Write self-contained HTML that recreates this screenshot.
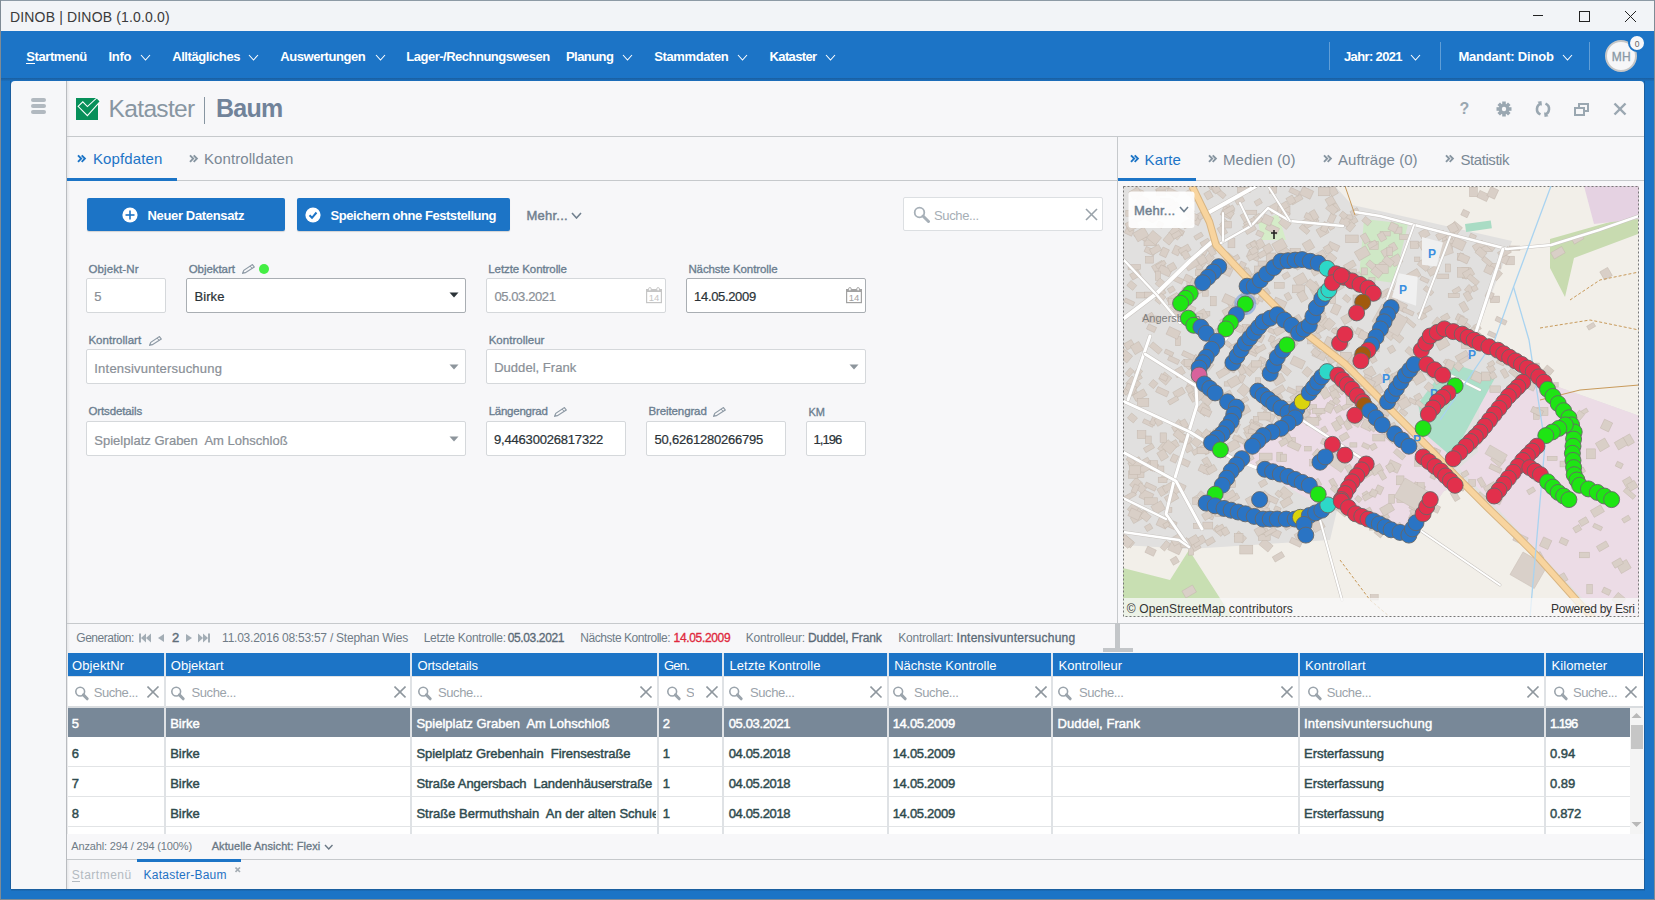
<!DOCTYPE html><html><head><meta charset="utf-8"><style>html,body{margin:0;padding:0;width:1655px;height:900px;overflow:hidden;position:relative;font-family:"Liberation Sans",sans-serif;}.t{position:absolute;white-space:pre;line-height:1;}</style></head><body><div style="position:absolute;left:0px;top:0px;width:1655px;height:900px;background:#1c74c6;"></div><div style="position:absolute;left:0px;top:0px;width:1655px;height:31px;background:#f2f4f7;"></div><div style="position:absolute;left:0px;top:0px;width:1655px;height:1px;background:#8d9aa5;"></div><div style="position:absolute;left:0px;top:0px;width:1px;height:900px;background:#7f8b95;"></div><div style="position:absolute;left:1654px;top:0px;width:1px;height:900px;background:#7f8b95;"></div><svg style="position:absolute;left:1520px;top:5px" width="130" height="22"><g stroke="#222" stroke-width="1" fill="none"><line x1="13" y1="10.5" x2="23" y2="10.5"/><rect x="59.5" y="6.5" width="10" height="10"/><line x1="105" y1="6" x2="116" y2="17"/><line x1="116" y1="6" x2="105" y2="17"/></g></svg><div style="position:absolute;left:1px;top:78px;width:1653px;height:3px;background:linear-gradient(#1a5f9f,#1c6fbe);"></div><div style="position:absolute;left:26px;top:63px;width:9px;height:1px;background:#ffffff;"></div><svg style="position:absolute;left:140px;top:54px" width="11" height="7"><polyline points="1,1 5.5,6 10,1" fill="none" stroke="#fff" stroke-width="1.1"/></svg><svg style="position:absolute;left:248px;top:54px" width="11" height="7"><polyline points="1,1 5.5,6 10,1" fill="none" stroke="#fff" stroke-width="1.1"/></svg><svg style="position:absolute;left:374.5px;top:54px" width="11" height="7"><polyline points="1,1 5.5,6 10,1" fill="none" stroke="#fff" stroke-width="1.1"/></svg><svg style="position:absolute;left:622px;top:54px" width="11" height="7"><polyline points="1,1 5.5,6 10,1" fill="none" stroke="#fff" stroke-width="1.1"/></svg><svg style="position:absolute;left:737px;top:54px" width="11" height="7"><polyline points="1,1 5.5,6 10,1" fill="none" stroke="#fff" stroke-width="1.1"/></svg><svg style="position:absolute;left:825px;top:54px" width="11" height="7"><polyline points="1,1 5.5,6 10,1" fill="none" stroke="#fff" stroke-width="1.1"/></svg><svg style="position:absolute;left:1410px;top:54px" width="11" height="7"><polyline points="1,1 5.5,6 10,1" fill="none" stroke="#fff" stroke-width="1.1"/></svg><svg style="position:absolute;left:1562px;top:54px" width="11" height="7"><polyline points="1,1 5.5,6 10,1" fill="none" stroke="#fff" stroke-width="1.1"/></svg><div style="position:absolute;left:1329px;top:42px;width:1px;height:28px;background:rgba(255,255,255,0.3);"></div><div style="position:absolute;left:1440px;top:42px;width:1px;height:28px;background:rgba(255,255,255,0.3);"></div><div style="position:absolute;left:1589px;top:42px;width:1px;height:28px;background:rgba(255,255,255,0.3);"></div><div style="position:absolute;left:1605px;top:40px;width:28px;height:28px;border-radius:50%;background:#f6f6f8;border:2px solid #c6c6c6"></div><div style="position:absolute;left:1628px;top:34px;width:14px;height:14px;border-radius:50%;background:#f7f7f9;border:2px solid #1c74c6"></div><div style="position:absolute;left:11px;top:81px;width:55px;height:808px;background:#f6f7f9;border-radius:4px 0 0 0;"></div><div style="position:absolute;left:66px;top:81px;width:1px;height:808px;background:#b9bcc0;"></div><div style="position:absolute;left:10px;top:81px;width:1px;height:808px;background:#1b5e9e;"></div><div style="position:absolute;left:11px;top:889px;width:1634px;height:2px;background:linear-gradient(#1b5a96,#1c70bf);"></div><div style="position:absolute;left:0px;top:899px;width:1655px;height:1px;background:#7f8b95;"></div><div style="position:absolute;left:1644px;top:81px;width:1px;height:809px;background:#1b5e9e;"></div><div style="position:absolute;left:67px;top:81px;width:1577px;height:808px;background:#f7f7f9;border-radius:0 4px 0 0;"></div><div style="position:absolute;left:67px;top:81px;width:3px;height:808px;background:linear-gradient(90deg,#e6e7e9,rgba(247,247,249,0));"></div><div style="position:absolute;left:31px;top:98px;width:15px;height:3.5px;background:#b1b9c0;border-radius:2px;"></div><div style="position:absolute;left:31px;top:104px;width:15px;height:3.5px;background:#b1b9c0;border-radius:2px;"></div><div style="position:absolute;left:31px;top:110px;width:15px;height:3.5px;background:#b1b9c0;border-radius:2px;"></div><svg style="position:absolute;left:76px;top:97px" width="27" height="25"><rect x="0" y="1" width="22" height="22" fill="#07905a"/><polygon points="2.1,9.3 6.8,4.8 11.4,9.6 20.8,0.9 24.3,4.3 11.4,18.6" fill="#07905a" stroke="#fff" stroke-width="1.1" stroke-linejoin="miter"/></svg><div style="position:absolute;left:204px;top:97px;width:1.3px;height:27px;background:#8795a1;"></div><svg style="position:absolute;left:1496px;top:101px" width="16" height="16" viewBox="-8 -8 16 16"><g fill="#9aa7b1"><rect x="-1.8" y="-7.5" width="3.6" height="4" transform="rotate(0)"/><rect x="-1.8" y="-7.5" width="3.6" height="4" transform="rotate(45)"/><rect x="-1.8" y="-7.5" width="3.6" height="4" transform="rotate(90)"/><rect x="-1.8" y="-7.5" width="3.6" height="4" transform="rotate(135)"/><rect x="-1.8" y="-7.5" width="3.6" height="4" transform="rotate(180)"/><rect x="-1.8" y="-7.5" width="3.6" height="4" transform="rotate(225)"/><rect x="-1.8" y="-7.5" width="3.6" height="4" transform="rotate(270)"/><rect x="-1.8" y="-7.5" width="3.6" height="4" transform="rotate(315)"/><circle r="5.3"/></g><circle r="2.2" fill="#f7f7f9"/></svg><svg style="position:absolute;left:1535px;top:101px" width="16" height="16" viewBox="0 0 16 16"><g fill="none" stroke="#9aa7b1" stroke-width="2.6"><path d="M6.5 2.4 A5.8 5.8 0 0 0 5.5 13.4"/><path d="M9.5 13.6 A5.8 5.8 0 0 0 10.5 2.6"/></g><g fill="#9aa7b1"><polygon points="9.5,10.8 9.5,16 13.5,15.2"/><polygon points="6.5,5.2 6.5,0 2.5,0.8"/></g></svg><svg style="position:absolute;left:1574px;top:102px" width="16" height="14"><g fill="none" stroke="#9aa7b1" stroke-width="2"><rect x="1" y="6" width="9" height="7"/><path d="M5 6 V2 H14 V9 H10"/></g></svg><svg style="position:absolute;left:1613px;top:102px" width="14" height="14"><g stroke="#9aa7b1" stroke-width="2.4"><line x1="1.5" y1="1.5" x2="12.5" y2="12.5"/><line x1="12.5" y1="1.5" x2="1.5" y2="12.5"/></g></svg><div style="position:absolute;left:67px;top:136px;width:1577px;height:1px;background:#c6c9cc;"></div><svg style="position:absolute;left:77.4px;top:153.8px" width="10" height="10"><g fill="none" stroke="#1c74c6" stroke-width="1.9"><polyline points="1,1.3 4.2,4.6 1,7.9"/><polyline points="4.7,1.3 7.9,4.6 4.7,7.9"/></g></svg><svg style="position:absolute;left:189.0px;top:153.8px" width="10" height="10"><g fill="none" stroke="#8795a1" stroke-width="1.9"><polyline points="1,1.3 4.2,4.6 1,7.9"/><polyline points="4.7,1.3 7.9,4.6 4.7,7.9"/></g></svg><div style="position:absolute;left:67px;top:180px;width:1050px;height:1px;background:#c6c9cc;"></div><div style="position:absolute;left:67px;top:178px;width:110px;height:3px;background:#1c74c6;"></div><div style="position:absolute;left:1117px;top:137px;width:1px;height:486px;background:#c6c9cc;"></div><svg style="position:absolute;left:1130.0px;top:154.4px" width="10" height="10"><g fill="none" stroke="#1c74c6" stroke-width="1.9"><polyline points="1,1.3 4.2,4.6 1,7.9"/><polyline points="4.7,1.3 7.9,4.6 4.7,7.9"/></g></svg><svg style="position:absolute;left:1208.0px;top:154.4px" width="10" height="10"><g fill="none" stroke="#8795a1" stroke-width="1.9"><polyline points="1,1.3 4.2,4.6 1,7.9"/><polyline points="4.7,1.3 7.9,4.6 4.7,7.9"/></g></svg><svg style="position:absolute;left:1323.0px;top:154.4px" width="10" height="10"><g fill="none" stroke="#8795a1" stroke-width="1.9"><polyline points="1,1.3 4.2,4.6 1,7.9"/><polyline points="4.7,1.3 7.9,4.6 4.7,7.9"/></g></svg><svg style="position:absolute;left:1445.0px;top:154.4px" width="10" height="10"><g fill="none" stroke="#8795a1" stroke-width="1.9"><polyline points="1,1.3 4.2,4.6 1,7.9"/><polyline points="4.7,1.3 7.9,4.6 4.7,7.9"/></g></svg><div style="position:absolute;left:1118px;top:180px;width:526px;height:1px;background:#c6c9cc;"></div><div style="position:absolute;left:1118px;top:178px;width:78px;height:3px;background:#1c74c6;"></div><div style="position:absolute;left:87px;top:198px;width:198px;height:33px;background:#1c74c6;border-radius:2px;box-shadow:0 1px 1px rgba(0,0,0,0.15);"></div><div style="position:absolute;left:297px;top:198px;width:213px;height:33px;background:#1c74c6;border-radius:2px;box-shadow:0 1px 1px rgba(0,0,0,0.15);"></div><svg style="position:absolute;left:122px;top:207px" width="16" height="16"><circle cx="8" cy="8" r="7.6" fill="#fff"/><g stroke="#1c74c6" stroke-width="1.6"><line x1="8" y1="3.5" x2="8" y2="12.5"/><line x1="3.5" y1="8" x2="12.5" y2="8"/></g></svg><svg style="position:absolute;left:305px;top:207px" width="16" height="16"><circle cx="8" cy="8" r="7.6" fill="#fff"/><polyline points="4.5,8.2 7,10.8 11.5,5.5" fill="none" stroke="#1c74c6" stroke-width="2"/></svg><svg style="position:absolute;left:571px;top:211.5px" width="11" height="7"><polyline points="1,1 5.5,6 10,1" fill="none" stroke="#71808f" stroke-width="1.6"/></svg><div style="position:absolute;left:903px;top:197px;width:200px;height:34px;background:#fff;box-sizing:border-box;border:1px solid #dcdfe2;border-radius:2px;"></div><svg style="position:absolute;left:913px;top:206px" width="18" height="17"><circle cx="6.5" cy="6.5" r="4.8" fill="none" stroke="#a7b0b8" stroke-width="1.8"/><line x1="10" y1="10" x2="15.5" y2="15.5" stroke="#a7b0b8" stroke-width="3" stroke-linecap="round"/></svg><svg style="position:absolute;left:1085px;top:208px" width="13" height="13"><g stroke="#9aa3ab" stroke-width="1.6"><line x1="1" y1="1" x2="12" y2="12"/><line x1="12" y1="1" x2="1" y2="12"/></g></svg><svg style="position:absolute;left:241.5px;top:263.5px" width="13" height="10"><polygon points="0.6,9.2 1.8,6.3 10.4,0.6 12.2,3 3.4,8.7" fill="none" stroke="#8f9ba6" stroke-width="1.2"/><line x1="8.2" y1="2" x2="10" y2="4.4" stroke="#8f9ba6" stroke-width="1"/></svg><div style="position:absolute;left:259px;top:264px;width:10px;height:10px;border-radius:50%;background:#44ee44"></div><div style="position:absolute;left:86px;top:278px;width:80px;height:35px;background:#fff;box-sizing:border-box;border:1px solid #d5d8db;border-radius:2px;"></div><div style="position:absolute;left:186px;top:278px;width:280px;height:35px;background:#fff;box-sizing:border-box;border:1px solid #a9aeb3;border-radius:2px;"></div><svg style="position:absolute;left:449px;top:292px" width="10" height="6"><polygon points="0.5,0.5 9.5,0.5 5,5.5" fill="#2b3338"/></svg><div style="position:absolute;left:486px;top:278px;width:180px;height:35px;background:#fff;box-sizing:border-box;border:1px solid #d5d8db;border-radius:2px;"></div><div style="position:absolute;left:686px;top:278px;width:180px;height:35px;background:#fff;box-sizing:border-box;border:1px solid #a9aeb3;border-radius:2px;"></div><svg style="position:absolute;left:646px;top:287px" width="17" height="17"><g fill="none" stroke="#c6c6c6" stroke-width="1.2"><rect x="0.6" y="2.6" width="14.8" height="13"/></g><rect x="0" y="2" width="16" height="3" fill="#c6c6c6"/><rect x="2.6" y="0.6" width="2.6" height="3.4" rx="1.2" fill="#fff" stroke="#c6c6c6" stroke-width="1"/><rect x="10.8" y="0.6" width="2.6" height="3.4" rx="1.2" fill="#fff" stroke="#c6c6c6" stroke-width="1"/><text x="8" y="13.8" font-family="Liberation Sans" font-size="9.5" text-anchor="middle" fill="#c6c6c6">14</text></svg><svg style="position:absolute;left:846px;top:287px" width="17" height="17"><g fill="none" stroke="#a2a2a2" stroke-width="1.2"><rect x="0.6" y="2.6" width="14.8" height="13"/></g><rect x="0" y="2" width="16" height="3" fill="#a2a2a2"/><rect x="2.6" y="0.6" width="2.6" height="3.4" rx="1.2" fill="#fff" stroke="#a2a2a2" stroke-width="1"/><rect x="10.8" y="0.6" width="2.6" height="3.4" rx="1.2" fill="#fff" stroke="#a2a2a2" stroke-width="1"/><text x="8" y="13.8" font-family="Liberation Sans" font-size="9.5" text-anchor="middle" fill="#a2a2a2">14</text></svg><svg style="position:absolute;left:148.5px;top:335.5px" width="13" height="10"><polygon points="0.6,9.2 1.8,6.3 10.4,0.6 12.2,3 3.4,8.7" fill="none" stroke="#8f9ba6" stroke-width="1.2"/><line x1="8.2" y1="2" x2="10" y2="4.4" stroke="#8f9ba6" stroke-width="1"/></svg><div style="position:absolute;left:86px;top:349px;width:380px;height:35px;background:#fff;box-sizing:border-box;border:1px solid #d5d8db;border-radius:2px;"></div><svg style="position:absolute;left:449px;top:364px" width="10" height="6"><polygon points="0.5,0.5 9.5,0.5 5,5.5" fill="#8d959c"/></svg><div style="position:absolute;left:486px;top:349px;width:380px;height:35px;background:#fff;box-sizing:border-box;border:1px solid #d5d8db;border-radius:2px;"></div><svg style="position:absolute;left:849px;top:364px" width="10" height="6"><polygon points="0.5,0.5 9.5,0.5 5,5.5" fill="#8d959c"/></svg><svg style="position:absolute;left:553.5px;top:406.5px" width="13" height="10"><polygon points="0.6,9.2 1.8,6.3 10.4,0.6 12.2,3 3.4,8.7" fill="none" stroke="#8f9ba6" stroke-width="1.2"/><line x1="8.2" y1="2" x2="10" y2="4.4" stroke="#8f9ba6" stroke-width="1"/></svg><svg style="position:absolute;left:712.5px;top:406.5px" width="13" height="10"><polygon points="0.6,9.2 1.8,6.3 10.4,0.6 12.2,3 3.4,8.7" fill="none" stroke="#8f9ba6" stroke-width="1.2"/><line x1="8.2" y1="2" x2="10" y2="4.4" stroke="#8f9ba6" stroke-width="1"/></svg><div style="position:absolute;left:86px;top:421px;width:380px;height:35px;background:#fff;box-sizing:border-box;border:1px solid #d5d8db;border-radius:2px;"></div><svg style="position:absolute;left:449px;top:436px" width="10" height="6"><polygon points="0.5,0.5 9.5,0.5 5,5.5" fill="#8d959c"/></svg><div style="position:absolute;left:486px;top:421px;width:140px;height:35px;background:#fff;box-sizing:border-box;border:1px solid #d5d8db;border-radius:2px;"></div><div style="position:absolute;left:646px;top:421px;width:140px;height:35px;background:#fff;box-sizing:border-box;border:1px solid #d5d8db;border-radius:2px;"></div><div style="position:absolute;left:806px;top:421px;width:60px;height:35px;background:#fff;box-sizing:border-box;border:1px solid #d5d8db;border-radius:2px;"></div><div style="position:absolute;left:67px;top:623px;width:1577px;height:1px;background:#c6c9cc;"></div><svg style="position:absolute;left:138px;top:632px" width="75" height="12"><g fill="#a3adb5"><rect x="1" y="1.5" width="2" height="9"/><polygon points="8,1.5 3,6 8,10.5"/><polygon points="13,1.5 8,6 13,10.5"/><polygon points="26,2 20,6 26,10"/><polygon points="48,2 54,6 48,10"/><polygon points="60,1.5 65,6 60,10.5"/><polygon points="65,1.5 70,6 65,10.5"/><rect x="70" y="1.5" width="2" height="9"/></g></svg><div style="position:absolute;left:1115px;top:623px;width:5px;height:27px;background:#c3c6c9;"></div><div style="position:absolute;left:1103px;top:648px;width:30px;height:4px;background:#c3c6c9;"></div><div style="position:absolute;left:68px;top:653px;width:1575px;height:23px;background:#1c74c6;"></div><div style="position:absolute;left:68px;top:676px;width:1575px;height:31px;background:#fff;"></div><div style="position:absolute;left:68px;top:676px;width:1575px;height:1px;background:#dfe2e5;"></div><div style="position:absolute;left:68px;top:706px;width:1575px;height:2px;background:#d9dcdf;"></div><div style="position:absolute;left:68px;top:708px;width:1562px;height:126px;background:#fff;"></div><div style="position:absolute;left:68px;top:708px;width:1562px;height:29px;background:#788898;"></div><div style="position:absolute;left:68px;top:766px;width:1562px;height:1px;background:#e2e4e6;"></div><div style="position:absolute;left:68px;top:796px;width:1562px;height:1px;background:#e2e4e6;"></div><div style="position:absolute;left:68px;top:826px;width:1562px;height:1px;background:#e2e4e6;"></div><div style="position:absolute;left:163.5px;top:653px;width:2.5px;height:23px;background:#dce6f0;"></div><div style="position:absolute;left:163.5px;top:676px;width:2.5px;height:31px;background:#dfe2e5;"></div><div style="position:absolute;left:164px;top:708px;width:1.5px;height:126px;background:#dfe2e5;"></div><div style="position:absolute;left:409.5px;top:653px;width:2.5px;height:23px;background:#dce6f0;"></div><div style="position:absolute;left:409.5px;top:676px;width:2.5px;height:31px;background:#dfe2e5;"></div><div style="position:absolute;left:410px;top:708px;width:1.5px;height:126px;background:#dfe2e5;"></div><div style="position:absolute;left:656.5px;top:653px;width:2.5px;height:23px;background:#dce6f0;"></div><div style="position:absolute;left:656.5px;top:676px;width:2.5px;height:31px;background:#dfe2e5;"></div><div style="position:absolute;left:657px;top:708px;width:1.5px;height:126px;background:#dfe2e5;"></div><div style="position:absolute;left:721.5px;top:653px;width:2.5px;height:23px;background:#dce6f0;"></div><div style="position:absolute;left:721.5px;top:676px;width:2.5px;height:31px;background:#dfe2e5;"></div><div style="position:absolute;left:722px;top:708px;width:1.5px;height:126px;background:#dfe2e5;"></div><div style="position:absolute;left:886.5px;top:653px;width:2.5px;height:23px;background:#dce6f0;"></div><div style="position:absolute;left:886.5px;top:676px;width:2.5px;height:31px;background:#dfe2e5;"></div><div style="position:absolute;left:887px;top:708px;width:1.5px;height:126px;background:#dfe2e5;"></div><div style="position:absolute;left:1050.5px;top:653px;width:2.5px;height:23px;background:#dce6f0;"></div><div style="position:absolute;left:1050.5px;top:676px;width:2.5px;height:31px;background:#dfe2e5;"></div><div style="position:absolute;left:1051px;top:708px;width:1.5px;height:126px;background:#dfe2e5;"></div><div style="position:absolute;left:1297.5px;top:653px;width:2.5px;height:23px;background:#dce6f0;"></div><div style="position:absolute;left:1297.5px;top:676px;width:2.5px;height:31px;background:#dfe2e5;"></div><div style="position:absolute;left:1298px;top:708px;width:1.5px;height:126px;background:#dfe2e5;"></div><div style="position:absolute;left:1543.5px;top:653px;width:2.5px;height:23px;background:#dce6f0;"></div><div style="position:absolute;left:1543.5px;top:676px;width:2.5px;height:31px;background:#dfe2e5;"></div><div style="position:absolute;left:1544px;top:708px;width:1.5px;height:126px;background:#dfe2e5;"></div><div style="position:absolute;left:1630px;top:708px;width:13px;height:126px;background:#f4f4f4;"></div><div style="position:absolute;left:1631px;top:725px;width:12px;height:24px;background:#c6c6c6;"></div><svg style="position:absolute;left:1630px;top:711px" width="13" height="10"><polygon points="1.5,7 6.5,2 11.5,7" fill="#b8b8b8"/></svg><svg style="position:absolute;left:1630px;top:820px" width="13" height="10"><polygon points="1.5,2 6.5,7 11.5,2" fill="#b8b8b8"/></svg><svg style="position:absolute;left:73.5px;top:686px" width="16" height="15"><circle cx="6.2" cy="5.6" r="4.4" fill="none" stroke="#9ba4ac" stroke-width="1.6"/><line x1="9.4" y1="8.9" x2="13.2" y2="12.8" stroke="#9ba4ac" stroke-width="3" stroke-linecap="round"/></svg><svg style="position:absolute;left:147px;top:686px" width="12.5" height="12.5"><g stroke="#8f979e" stroke-width="1.6"><line x1="0.5" y1="0.5" x2="11.5" y2="11.5"/><line x1="11.5" y1="0.5" x2="0.5" y2="11.5"/></g></svg><svg style="position:absolute;left:170px;top:686px" width="16" height="15"><circle cx="6.2" cy="5.6" r="4.4" fill="none" stroke="#9ba4ac" stroke-width="1.6"/><line x1="9.4" y1="8.9" x2="13.2" y2="12.8" stroke="#9ba4ac" stroke-width="3" stroke-linecap="round"/></svg><svg style="position:absolute;left:393.5px;top:686px" width="12.5" height="12.5"><g stroke="#8f979e" stroke-width="1.6"><line x1="0.5" y1="0.5" x2="11.5" y2="11.5"/><line x1="11.5" y1="0.5" x2="0.5" y2="11.5"/></g></svg><svg style="position:absolute;left:417px;top:686px" width="16" height="15"><circle cx="6.2" cy="5.6" r="4.4" fill="none" stroke="#9ba4ac" stroke-width="1.6"/><line x1="9.4" y1="8.9" x2="13.2" y2="12.8" stroke="#9ba4ac" stroke-width="3" stroke-linecap="round"/></svg><svg style="position:absolute;left:640px;top:686px" width="12.5" height="12.5"><g stroke="#8f979e" stroke-width="1.6"><line x1="0.5" y1="0.5" x2="11.5" y2="11.5"/><line x1="11.5" y1="0.5" x2="0.5" y2="11.5"/></g></svg><svg style="position:absolute;left:665.5px;top:686px" width="16" height="15"><circle cx="6.2" cy="5.6" r="4.4" fill="none" stroke="#9ba4ac" stroke-width="1.6"/><line x1="9.4" y1="8.9" x2="13.2" y2="12.8" stroke="#9ba4ac" stroke-width="3" stroke-linecap="round"/></svg><svg style="position:absolute;left:706px;top:686px" width="12.5" height="12.5"><g stroke="#8f979e" stroke-width="1.6"><line x1="0.5" y1="0.5" x2="11.5" y2="11.5"/><line x1="11.5" y1="0.5" x2="0.5" y2="11.5"/></g></svg><svg style="position:absolute;left:728px;top:686px" width="16" height="15"><circle cx="6.2" cy="5.6" r="4.4" fill="none" stroke="#9ba4ac" stroke-width="1.6"/><line x1="9.4" y1="8.9" x2="13.2" y2="12.8" stroke="#9ba4ac" stroke-width="3" stroke-linecap="round"/></svg><svg style="position:absolute;left:870px;top:686px" width="12.5" height="12.5"><g stroke="#8f979e" stroke-width="1.6"><line x1="0.5" y1="0.5" x2="11.5" y2="11.5"/><line x1="11.5" y1="0.5" x2="0.5" y2="11.5"/></g></svg><svg style="position:absolute;left:892px;top:686px" width="16" height="15"><circle cx="6.2" cy="5.6" r="4.4" fill="none" stroke="#9ba4ac" stroke-width="1.6"/><line x1="9.4" y1="8.9" x2="13.2" y2="12.8" stroke="#9ba4ac" stroke-width="3" stroke-linecap="round"/></svg><svg style="position:absolute;left:1034.5px;top:686px" width="12.5" height="12.5"><g stroke="#8f979e" stroke-width="1.6"><line x1="0.5" y1="0.5" x2="11.5" y2="11.5"/><line x1="11.5" y1="0.5" x2="0.5" y2="11.5"/></g></svg><svg style="position:absolute;left:1057px;top:686px" width="16" height="15"><circle cx="6.2" cy="5.6" r="4.4" fill="none" stroke="#9ba4ac" stroke-width="1.6"/><line x1="9.4" y1="8.9" x2="13.2" y2="12.8" stroke="#9ba4ac" stroke-width="3" stroke-linecap="round"/></svg><svg style="position:absolute;left:1281px;top:686px" width="12.5" height="12.5"><g stroke="#8f979e" stroke-width="1.6"><line x1="0.5" y1="0.5" x2="11.5" y2="11.5"/><line x1="11.5" y1="0.5" x2="0.5" y2="11.5"/></g></svg><svg style="position:absolute;left:1306.5px;top:686px" width="16" height="15"><circle cx="6.2" cy="5.6" r="4.4" fill="none" stroke="#9ba4ac" stroke-width="1.6"/><line x1="9.4" y1="8.9" x2="13.2" y2="12.8" stroke="#9ba4ac" stroke-width="3" stroke-linecap="round"/></svg><svg style="position:absolute;left:1527.4px;top:686px" width="12.5" height="12.5"><g stroke="#8f979e" stroke-width="1.6"><line x1="0.5" y1="0.5" x2="11.5" y2="11.5"/><line x1="11.5" y1="0.5" x2="0.5" y2="11.5"/></g></svg><svg style="position:absolute;left:1553px;top:686px" width="16" height="15"><circle cx="6.2" cy="5.6" r="4.4" fill="none" stroke="#9ba4ac" stroke-width="1.6"/><line x1="9.4" y1="8.9" x2="13.2" y2="12.8" stroke="#9ba4ac" stroke-width="3" stroke-linecap="round"/></svg><svg style="position:absolute;left:1625.4px;top:686px" width="12.5" height="12.5"><g stroke="#8f979e" stroke-width="1.6"><line x1="0.5" y1="0.5" x2="11.5" y2="11.5"/><line x1="11.5" y1="0.5" x2="0.5" y2="11.5"/></g></svg><div style="position:absolute;left:67px;top:834px;width:1577px;height:25px;background:#f7f7f9;"></div><svg style="position:absolute;left:323.5px;top:844px" width="9.5" height="6"><polyline points="1,1 4.75,5 8.5,1" fill="none" stroke="#6a7885" stroke-width="1.4"/></svg><div style="position:absolute;left:67px;top:859px;width:1577px;height:1px;background:#c6c9cc;"></div><div style="position:absolute;left:137px;top:859px;width:104px;height:3px;background:#1c74c6;"></div><div style="position:absolute;left:72px;top:881px;width:8px;height:1px;background:#b3bac1;"></div><svg style="position:absolute;left:234.5px;top:867px" width="6" height="6"><g stroke="#a5adb4" stroke-width="1.6"><line x1="0.5" y1="0.5" x2="5" y2="5"/><line x1="5" y1="0.5" x2="0.5" y2="5"/></g></svg><svg style="position:absolute;left:1123px;top:186px" width="516" height="431" viewBox="1123 186 516 431"><rect x="1123" y="186" width="516" height="431" fill="#e1e0df"/><polygon points="1335.0,186.0 1640.0,186.0 1640.0,416.0 1550.0,384.0 1476.0,334.0 1512.0,241.0 1380.0,211.0 1352.0,205.0" fill="#f2efe9"/><polygon points="1123.0,545.0 1189.0,549.0 1330.0,540.0 1338.0,506.0 1409.0,540.0 1444.0,491.0 1466.0,482.0 1592.0,617.0 1123.0,617.0" fill="#f2efe9"/><polygon points="1240.0,445.0 1300.0,408.0 1335.0,386.0 1380.0,420.0 1440.0,440.0 1462.0,484.0 1444.0,491.0 1409.0,540.0 1338.0,506.0 1318.0,505.0 1240.0,458.0" fill="#ecdce6"/><polygon points="1480.0,390.0 1520.0,386.0 1550.0,384.0 1640.0,416.0 1640.0,617.0 1600.0,617.0 1459.0,468.0 1478.0,452.0" fill="#ecdce6"/><polygon points="1449.0,362.0 1495.0,378.0 1452.0,457.0 1424.0,433.0 1418.0,404.0" fill="#acdfc9"/><polygon points="1364.0,219.0 1408.0,224.0 1394.0,283.0 1359.0,278.0" fill="#cfe8c6"/><polygon points="1550.0,239.0 1638.0,214.0 1638.0,234.0 1574.0,258.0 1565.0,297.0 1550.0,268.0" fill="#c8dbb0"/><polygon points="1584.0,186.0 1639.0,186.0 1639.0,219.0 1594.0,224.0" fill="#e5d2e2"/><polygon points="1123.0,568.0 1170.0,580.0 1189.0,550.0 1232.0,617.0 1123.0,617.0" fill="#c8dfb2"/><polygon points="1258.0,222.0 1278.0,214.0 1286.0,240.0 1262.0,240.0" fill="#d5ecc8"/><rect x="1465" y="224" width="26" height="8" fill="#a9dcc4" transform="rotate(-8 1465 224)"/><rect x="1290.1" y="248.5" width="10.2" height="4.4" fill="#d9cfc7" stroke="#c4b8ae" stroke-width="0.5" transform="rotate(0 1290.1 248.5)"/><rect x="1171.6" y="427.3" width="12.3" height="5.3" fill="#d9cfc7" stroke="#c4b8ae" stroke-width="0.5" transform="rotate(-30 1171.6 427.3)"/><rect x="1346.8" y="214.9" width="5.7" height="6.5" fill="#d9cfc7" stroke="#c4b8ae" stroke-width="0.5" transform="rotate(0 1346.8 214.9)"/><rect x="1186.9" y="278.4" width="10.0" height="9.7" fill="#d9cfc7" stroke="#c4b8ae" stroke-width="0.5" transform="rotate(0 1186.9 278.4)"/><rect x="1410.2" y="241.1" width="8.4" height="7.2" fill="#d9cfc7" stroke="#c4b8ae" stroke-width="0.5" transform="rotate(0 1410.2 241.1)"/><rect x="1282.2" y="523.9" width="6.4" height="7.5" fill="#d9cfc7" stroke="#c4b8ae" stroke-width="0.5" transform="rotate(-30 1282.2 523.9)"/><rect x="1315.2" y="412.8" width="5.5" height="4.4" fill="#d9cfc7" stroke="#c4b8ae" stroke-width="0.5" transform="rotate(-30 1315.2 412.8)"/><rect x="1379.1" y="406.1" width="11.2" height="6.8" fill="#d9cfc7" stroke="#c4b8ae" stroke-width="0.5" transform="rotate(40 1379.1 406.1)"/><rect x="1309.6" y="288.8" width="6.4" height="8.7" fill="#d9cfc7" stroke="#c4b8ae" stroke-width="0.5" transform="rotate(-30 1309.6 288.8)"/><rect x="1183.9" y="359.1" width="11.1" height="4.9" fill="#d9cfc7" stroke="#c4b8ae" stroke-width="0.5" transform="rotate(40 1183.9 359.1)"/><rect x="1411.0" y="512.7" width="11.5" height="6.0" fill="#d9cfc7" stroke="#c4b8ae" stroke-width="0.5" transform="rotate(25 1411.0 512.7)"/><rect x="1556.4" y="577.1" width="8.8" height="8.0" fill="#d9cfc7" stroke="#c4b8ae" stroke-width="0.5" transform="rotate(-30 1556.4 577.1)"/><rect x="1474.5" y="370.5" width="10.7" height="9.3" fill="#d9cfc7" stroke="#c4b8ae" stroke-width="0.5" transform="rotate(25 1474.5 370.5)"/><rect x="1134.6" y="377.1" width="6.3" height="4.7" fill="#d9cfc7" stroke="#c4b8ae" stroke-width="0.5" transform="rotate(-30 1134.6 377.1)"/><rect x="1235.6" y="305.0" width="10.9" height="6.4" fill="#d9cfc7" stroke="#c4b8ae" stroke-width="0.5" transform="rotate(40 1235.6 305.0)"/><rect x="1164.6" y="372.0" width="9.4" height="9.3" fill="#d9cfc7" stroke="#c4b8ae" stroke-width="0.5" transform="rotate(40 1164.6 372.0)"/><rect x="1200.9" y="259.0" width="6.9" height="5.4" fill="#d9cfc7" stroke="#c4b8ae" stroke-width="0.5" transform="rotate(40 1200.9 259.0)"/><rect x="1198.2" y="407.3" width="9.9" height="5.9" fill="#d9cfc7" stroke="#c4b8ae" stroke-width="0.5" transform="rotate(-30 1198.2 407.3)"/><rect x="1325.5" y="351.2" width="5.8" height="7.8" fill="#d9cfc7" stroke="#c4b8ae" stroke-width="0.5" transform="rotate(-30 1325.5 351.2)"/><rect x="1179.7" y="434.7" width="5.8" height="7.4" fill="#d9cfc7" stroke="#c4b8ae" stroke-width="0.5" transform="rotate(0 1179.7 434.7)"/><rect x="1175.4" y="336.5" width="5.2" height="9.2" fill="#d9cfc7" stroke="#c4b8ae" stroke-width="0.5" transform="rotate(0 1175.4 336.5)"/><rect x="1317.1" y="448.6" width="12.6" height="7.6" fill="#d9cfc7" stroke="#c4b8ae" stroke-width="0.5" transform="rotate(40 1317.1 448.6)"/><rect x="1186.4" y="537.5" width="12.9" height="6.8" fill="#d9cfc7" stroke="#c4b8ae" stroke-width="0.5" transform="rotate(40 1186.4 537.5)"/><rect x="1283.9" y="245.7" width="11.0" height="8.4" fill="#d9cfc7" stroke="#c4b8ae" stroke-width="0.5" transform="rotate(40 1283.9 245.7)"/><rect x="1550.7" y="252.8" width="12.6" height="7.2" fill="#d9cfc7" stroke="#c4b8ae" stroke-width="0.5" transform="rotate(-30 1550.7 252.8)"/><rect x="1276.8" y="452.2" width="5.7" height="9.1" fill="#d9cfc7" stroke="#c4b8ae" stroke-width="0.5" transform="rotate(0 1276.8 452.2)"/><rect x="1312.2" y="255.2" width="11.2" height="7.2" fill="#d9cfc7" stroke="#c4b8ae" stroke-width="0.5" transform="rotate(0 1312.2 255.2)"/><rect x="1293.1" y="278.3" width="11.5" height="9.9" fill="#d9cfc7" stroke="#c4b8ae" stroke-width="0.5" transform="rotate(-30 1293.1 278.3)"/><rect x="1240.0" y="400.3" width="7.8" height="4.2" fill="#d9cfc7" stroke="#c4b8ae" stroke-width="0.5" transform="rotate(-30 1240.0 400.3)"/><rect x="1530.7" y="381.5" width="6.5" height="7.6" fill="#d9cfc7" stroke="#c4b8ae" stroke-width="0.5" transform="rotate(25 1530.7 381.5)"/><rect x="1240.1" y="267.4" width="6.6" height="7.7" fill="#d9cfc7" stroke="#c4b8ae" stroke-width="0.5" transform="rotate(0 1240.1 267.4)"/><rect x="1369.7" y="259.9" width="11.3" height="6.0" fill="#d9cfc7" stroke="#c4b8ae" stroke-width="0.5" transform="rotate(40 1369.7 259.9)"/><rect x="1362.0" y="493.7" width="5.7" height="5.0" fill="#d9cfc7" stroke="#c4b8ae" stroke-width="0.5" transform="rotate(-30 1362.0 493.7)"/><rect x="1137.2" y="430.6" width="8.7" height="7.9" fill="#d9cfc7" stroke="#c4b8ae" stroke-width="0.5" transform="rotate(0 1137.2 430.6)"/><rect x="1303.8" y="413.1" width="6.0" height="4.1" fill="#d9cfc7" stroke="#c4b8ae" stroke-width="0.5" transform="rotate(-30 1303.8 413.1)"/><rect x="1572.8" y="528.0" width="7.0" height="5.8" fill="#d9cfc7" stroke="#c4b8ae" stroke-width="0.5" transform="rotate(-30 1572.8 528.0)"/><rect x="1389.6" y="528.4" width="12.0" height="4.8" fill="#d9cfc7" stroke="#c4b8ae" stroke-width="0.5" transform="rotate(-30 1389.6 528.4)"/><rect x="1217.5" y="187.6" width="11.4" height="5.0" fill="#d9cfc7" stroke="#c4b8ae" stroke-width="0.5" transform="rotate(40 1217.5 187.6)"/><rect x="1442.5" y="235.8" width="5.5" height="8.1" fill="#d9cfc7" stroke="#c4b8ae" stroke-width="0.5" transform="rotate(0 1442.5 235.8)"/><rect x="1409.6" y="510.7" width="5.8" height="7.4" fill="#d9cfc7" stroke="#c4b8ae" stroke-width="0.5" transform="rotate(-30 1409.6 510.7)"/><rect x="1221.7" y="203.5" width="5.8" height="6.7" fill="#d9cfc7" stroke="#c4b8ae" stroke-width="0.5" transform="rotate(-30 1221.7 203.5)"/><rect x="1193.8" y="236.4" width="8.5" height="4.4" fill="#d9cfc7" stroke="#c4b8ae" stroke-width="0.5" transform="rotate(-30 1193.8 236.4)"/><rect x="1344.0" y="274.1" width="7.4" height="4.7" fill="#d9cfc7" stroke="#c4b8ae" stroke-width="0.5" transform="rotate(-30 1344.0 274.1)"/><rect x="1253.6" y="242.8" width="8.7" height="8.5" fill="#d9cfc7" stroke="#c4b8ae" stroke-width="0.5" transform="rotate(-30 1253.6 242.8)"/><rect x="1328.5" y="387.7" width="12.9" height="9.0" fill="#d9cfc7" stroke="#c4b8ae" stroke-width="0.5" transform="rotate(-30 1328.5 387.7)"/><rect x="1340.4" y="333.6" width="5.7" height="6.2" fill="#d9cfc7" stroke="#c4b8ae" stroke-width="0.5" transform="rotate(25 1340.4 333.6)"/><rect x="1408.9" y="368.3" width="5.1" height="6.0" fill="#d9cfc7" stroke="#c4b8ae" stroke-width="0.5" transform="rotate(0 1408.9 368.3)"/><rect x="1166.4" y="298.6" width="12.2" height="5.1" fill="#d9cfc7" stroke="#c4b8ae" stroke-width="0.5" transform="rotate(-30 1166.4 298.6)"/><rect x="1388.6" y="390.8" width="7.6" height="5.7" fill="#d9cfc7" stroke="#c4b8ae" stroke-width="0.5" transform="rotate(-30 1388.6 390.8)"/><rect x="1342.5" y="216.0" width="12.5" height="7.8" fill="#d9cfc7" stroke="#c4b8ae" stroke-width="0.5" transform="rotate(25 1342.5 216.0)"/><rect x="1166.2" y="540.5" width="5.5" height="9.2" fill="#d9cfc7" stroke="#c4b8ae" stroke-width="0.5" transform="rotate(40 1166.2 540.5)"/><rect x="1595.4" y="443.4" width="10.7" height="9.6" fill="#d9cfc7" stroke="#c4b8ae" stroke-width="0.5" transform="rotate(-30 1595.4 443.4)"/><rect x="1258.1" y="261.0" width="12.5" height="7.8" fill="#d9cfc7" stroke="#c4b8ae" stroke-width="0.5" transform="rotate(0 1258.1 261.0)"/><rect x="1214.8" y="329.7" width="5.1" height="5.5" fill="#d9cfc7" stroke="#c4b8ae" stroke-width="0.5" transform="rotate(-30 1214.8 329.7)"/><rect x="1132.5" y="395.3" width="12.8" height="7.1" fill="#d9cfc7" stroke="#c4b8ae" stroke-width="0.5" transform="rotate(-30 1132.5 395.3)"/><rect x="1346.0" y="390.9" width="11.7" height="6.4" fill="#d9cfc7" stroke="#c4b8ae" stroke-width="0.5" transform="rotate(0 1346.0 390.9)"/><rect x="1281.8" y="275.1" width="6.8" height="5.2" fill="#d9cfc7" stroke="#c4b8ae" stroke-width="0.5" transform="rotate(-30 1281.8 275.1)"/><rect x="1331.8" y="329.9" width="5.4" height="4.8" fill="#d9cfc7" stroke="#c4b8ae" stroke-width="0.5" transform="rotate(-30 1331.8 329.9)"/><rect x="1151.6" y="461.4" width="8.0" height="7.0" fill="#d9cfc7" stroke="#c4b8ae" stroke-width="0.5" transform="rotate(25 1151.6 461.4)"/><rect x="1432.0" y="472.8" width="5.4" height="5.1" fill="#d9cfc7" stroke="#c4b8ae" stroke-width="0.5" transform="rotate(25 1432.0 472.8)"/><rect x="1353.0" y="295.0" width="12.7" height="9.8" fill="#d9cfc7" stroke="#c4b8ae" stroke-width="0.5" transform="rotate(0 1353.0 295.0)"/><rect x="1289.9" y="200.3" width="12.1" height="5.3" fill="#d9cfc7" stroke="#c4b8ae" stroke-width="0.5" transform="rotate(-30 1289.9 200.3)"/><rect x="1123.6" y="344.0" width="8.8" height="7.0" fill="#d9cfc7" stroke="#c4b8ae" stroke-width="0.5" transform="rotate(-30 1123.6 344.0)"/><rect x="1251.1" y="507.4" width="5.7" height="8.9" fill="#d9cfc7" stroke="#c4b8ae" stroke-width="0.5" transform="rotate(-30 1251.1 507.4)"/><rect x="1329.1" y="203.3" width="5.2" height="5.8" fill="#d9cfc7" stroke="#c4b8ae" stroke-width="0.5" transform="rotate(-30 1329.1 203.3)"/><rect x="1430.8" y="502.4" width="10.8" height="7.0" fill="#d9cfc7" stroke="#c4b8ae" stroke-width="0.5" transform="rotate(25 1430.8 502.4)"/><rect x="1496.7" y="452.3" width="11.7" height="9.4" fill="#d9cfc7" stroke="#c4b8ae" stroke-width="0.5" transform="rotate(40 1496.7 452.3)"/><rect x="1393.3" y="394.8" width="11.7" height="8.8" fill="#d9cfc7" stroke="#c4b8ae" stroke-width="0.5" transform="rotate(0 1393.3 394.8)"/><rect x="1454.7" y="221.2" width="10.1" height="9.8" fill="#d9cfc7" stroke="#c4b8ae" stroke-width="0.5" transform="rotate(40 1454.7 221.2)"/><rect x="1446.1" y="467.8" width="8.9" height="4.0" fill="#d9cfc7" stroke="#c4b8ae" stroke-width="0.5" transform="rotate(-30 1446.1 467.8)"/><rect x="1253.1" y="216.8" width="7.1" height="8.4" fill="#d9cfc7" stroke="#c4b8ae" stroke-width="0.5" transform="rotate(-30 1253.1 216.8)"/><rect x="1242.1" y="455.1" width="8.7" height="9.1" fill="#d9cfc7" stroke="#c4b8ae" stroke-width="0.5" transform="rotate(-30 1242.1 455.1)"/><rect x="1370.2" y="469.1" width="11.1" height="7.7" fill="#d9cfc7" stroke="#c4b8ae" stroke-width="0.5" transform="rotate(-30 1370.2 469.1)"/><rect x="1163.0" y="247.0" width="7.0" height="8.5" fill="#d9cfc7" stroke="#c4b8ae" stroke-width="0.5" transform="rotate(25 1163.0 247.0)"/><rect x="1443.5" y="241.2" width="8.9" height="6.9" fill="#d9cfc7" stroke="#c4b8ae" stroke-width="0.5" transform="rotate(-30 1443.5 241.2)"/><rect x="1389.5" y="378.4" width="8.7" height="4.7" fill="#d9cfc7" stroke="#c4b8ae" stroke-width="0.5" transform="rotate(0 1389.5 378.4)"/><rect x="1132.0" y="376.0" width="11.6" height="9.8" fill="#d9cfc7" stroke="#c4b8ae" stroke-width="0.5" transform="rotate(40 1132.0 376.0)"/><rect x="1434.3" y="447.5" width="7.2" height="4.7" fill="#d9cfc7" stroke="#c4b8ae" stroke-width="0.5" transform="rotate(25 1434.3 447.5)"/><rect x="1135.8" y="187.5" width="8.9" height="6.7" fill="#d9cfc7" stroke="#c4b8ae" stroke-width="0.5" transform="rotate(25 1135.8 187.5)"/><rect x="1498.2" y="358.3" width="8.0" height="4.7" fill="#d9cfc7" stroke="#c4b8ae" stroke-width="0.5" transform="rotate(25 1498.2 358.3)"/><rect x="1123.9" y="496.8" width="11.7" height="4.7" fill="#d9cfc7" stroke="#c4b8ae" stroke-width="0.5" transform="rotate(-30 1123.9 496.8)"/><rect x="1315.1" y="348.7" width="13.0" height="7.5" fill="#d9cfc7" stroke="#c4b8ae" stroke-width="0.5" transform="rotate(25 1315.1 348.7)"/><rect x="1267.8" y="207.4" width="10.3" height="7.8" fill="#d9cfc7" stroke="#c4b8ae" stroke-width="0.5" transform="rotate(-30 1267.8 207.4)"/><rect x="1251.7" y="296.0" width="9.1" height="5.1" fill="#d9cfc7" stroke="#c4b8ae" stroke-width="0.5" transform="rotate(25 1251.7 296.0)"/><rect x="1528.1" y="363.1" width="11.1" height="6.4" fill="#d9cfc7" stroke="#c4b8ae" stroke-width="0.5" transform="rotate(0 1528.1 363.1)"/><rect x="1406.4" y="483.9" width="5.4" height="8.4" fill="#d9cfc7" stroke="#c4b8ae" stroke-width="0.5" transform="rotate(40 1406.4 483.9)"/><rect x="1440.3" y="243.4" width="12.0" height="6.9" fill="#d9cfc7" stroke="#c4b8ae" stroke-width="0.5" transform="rotate(0 1440.3 243.4)"/><rect x="1188.7" y="381.5" width="7.7" height="5.8" fill="#d9cfc7" stroke="#c4b8ae" stroke-width="0.5" transform="rotate(25 1188.7 381.5)"/><rect x="1332.6" y="284.8" width="8.9" height="8.0" fill="#d9cfc7" stroke="#c4b8ae" stroke-width="0.5" transform="rotate(-30 1332.6 284.8)"/><rect x="1209.3" y="252.9" width="6.7" height="9.4" fill="#d9cfc7" stroke="#c4b8ae" stroke-width="0.5" transform="rotate(40 1209.3 252.9)"/><rect x="1407.0" y="373.5" width="7.7" height="8.6" fill="#d9cfc7" stroke="#c4b8ae" stroke-width="0.5" transform="rotate(40 1407.0 373.5)"/><rect x="1195.0" y="265.7" width="5.7" height="6.1" fill="#d9cfc7" stroke="#c4b8ae" stroke-width="0.5" transform="rotate(-30 1195.0 265.7)"/><rect x="1287.8" y="338.5" width="11.5" height="5.2" fill="#d9cfc7" stroke="#c4b8ae" stroke-width="0.5" transform="rotate(-30 1287.8 338.5)"/><rect x="1509.8" y="356.9" width="8.3" height="7.1" fill="#d9cfc7" stroke="#c4b8ae" stroke-width="0.5" transform="rotate(40 1509.8 356.9)"/><rect x="1262.4" y="497.4" width="9.0" height="7.4" fill="#d9cfc7" stroke="#c4b8ae" stroke-width="0.5" transform="rotate(25 1262.4 497.4)"/><rect x="1188.0" y="394.4" width="10.0" height="9.2" fill="#d9cfc7" stroke="#c4b8ae" stroke-width="0.5" transform="rotate(-30 1188.0 394.4)"/><rect x="1342.4" y="502.2" width="11.4" height="9.8" fill="#d9cfc7" stroke="#c4b8ae" stroke-width="0.5" transform="rotate(40 1342.4 502.2)"/><rect x="1123.1" y="348.1" width="12.4" height="9.0" fill="#d9cfc7" stroke="#c4b8ae" stroke-width="0.5" transform="rotate(40 1123.1 348.1)"/><rect x="1202.7" y="402.3" width="10.5" height="9.6" fill="#d9cfc7" stroke="#c4b8ae" stroke-width="0.5" transform="rotate(40 1202.7 402.3)"/><rect x="1166.9" y="507.6" width="5.0" height="4.8" fill="#d9cfc7" stroke="#c4b8ae" stroke-width="0.5" transform="rotate(0 1166.9 507.6)"/><rect x="1189.0" y="290.2" width="10.1" height="8.2" fill="#d9cfc7" stroke="#c4b8ae" stroke-width="0.5" transform="rotate(-30 1189.0 290.2)"/><rect x="1174.3" y="310.3" width="12.5" height="5.2" fill="#d9cfc7" stroke="#c4b8ae" stroke-width="0.5" transform="rotate(25 1174.3 310.3)"/><rect x="1238.4" y="434.8" width="5.1" height="5.8" fill="#d9cfc7" stroke="#c4b8ae" stroke-width="0.5" transform="rotate(40 1238.4 434.8)"/><rect x="1266.8" y="317.0" width="11.7" height="5.5" fill="#d9cfc7" stroke="#c4b8ae" stroke-width="0.5" transform="rotate(0 1266.8 317.0)"/><rect x="1244.1" y="288.3" width="12.7" height="8.2" fill="#d9cfc7" stroke="#c4b8ae" stroke-width="0.5" transform="rotate(25 1244.1 288.3)"/><rect x="1151.5" y="266.4" width="12.1" height="7.9" fill="#d9cfc7" stroke="#c4b8ae" stroke-width="0.5" transform="rotate(-30 1151.5 266.4)"/><rect x="1255.7" y="462.3" width="12.4" height="5.4" fill="#d9cfc7" stroke="#c4b8ae" stroke-width="0.5" transform="rotate(-30 1255.7 462.3)"/><rect x="1327.5" y="188.8" width="7.3" height="9.1" fill="#d9cfc7" stroke="#c4b8ae" stroke-width="0.5" transform="rotate(-30 1327.5 188.8)"/><rect x="1378.8" y="263.5" width="6.8" height="6.5" fill="#d9cfc7" stroke="#c4b8ae" stroke-width="0.5" transform="rotate(-30 1378.8 263.5)"/><rect x="1149.7" y="210.9" width="8.1" height="9.4" fill="#d9cfc7" stroke="#c4b8ae" stroke-width="0.5" transform="rotate(25 1149.7 210.9)"/><rect x="1292.9" y="262.8" width="12.5" height="8.5" fill="#d9cfc7" stroke="#c4b8ae" stroke-width="0.5" transform="rotate(-30 1292.9 262.8)"/><rect x="1283.9" y="486.3" width="11.7" height="9.9" fill="#d9cfc7" stroke="#c4b8ae" stroke-width="0.5" transform="rotate(40 1283.9 486.3)"/><rect x="1210.3" y="187.2" width="7.2" height="6.1" fill="#d9cfc7" stroke="#c4b8ae" stroke-width="0.5" transform="rotate(-30 1210.3 187.2)"/><rect x="1412.5" y="500.1" width="8.0" height="8.6" fill="#d9cfc7" stroke="#c4b8ae" stroke-width="0.5" transform="rotate(25 1412.5 500.1)"/><rect x="1547.2" y="365.0" width="8.8" height="6.2" fill="#d9cfc7" stroke="#c4b8ae" stroke-width="0.5" transform="rotate(40 1547.2 365.0)"/><rect x="1222.6" y="336.8" width="12.2" height="4.2" fill="#d9cfc7" stroke="#c4b8ae" stroke-width="0.5" transform="rotate(40 1222.6 336.8)"/><rect x="1251.0" y="444.9" width="8.2" height="6.3" fill="#d9cfc7" stroke="#c4b8ae" stroke-width="0.5" transform="rotate(40 1251.0 444.9)"/><rect x="1258.3" y="482.7" width="7.5" height="5.7" fill="#d9cfc7" stroke="#c4b8ae" stroke-width="0.5" transform="rotate(-30 1258.3 482.7)"/><rect x="1178.3" y="482.2" width="8.7" height="8.7" fill="#d9cfc7" stroke="#c4b8ae" stroke-width="0.5" transform="rotate(25 1178.3 482.2)"/><rect x="1594.4" y="523.3" width="9.0" height="4.1" fill="#d9cfc7" stroke="#c4b8ae" stroke-width="0.5" transform="rotate(25 1594.4 523.3)"/><rect x="1292.1" y="318.3" width="7.9" height="8.7" fill="#d9cfc7" stroke="#c4b8ae" stroke-width="0.5" transform="rotate(-30 1292.1 318.3)"/><rect x="1387.1" y="348.2" width="6.3" height="6.4" fill="#d9cfc7" stroke="#c4b8ae" stroke-width="0.5" transform="rotate(-30 1387.1 348.2)"/><rect x="1371.6" y="411.5" width="6.3" height="6.6" fill="#d9cfc7" stroke="#c4b8ae" stroke-width="0.5" transform="rotate(-30 1371.6 411.5)"/><rect x="1172.8" y="392.4" width="10.7" height="6.7" fill="#d9cfc7" stroke="#c4b8ae" stroke-width="0.5" transform="rotate(-30 1172.8 392.4)"/><rect x="1191.6" y="376.8" width="12.1" height="5.4" fill="#d9cfc7" stroke="#c4b8ae" stroke-width="0.5" transform="rotate(0 1191.6 376.8)"/><rect x="1560.0" y="461.1" width="11.7" height="5.8" fill="#d9cfc7" stroke="#c4b8ae" stroke-width="0.5" transform="rotate(0 1560.0 461.1)"/><rect x="1261.1" y="291.2" width="7.1" height="6.6" fill="#d9cfc7" stroke="#c4b8ae" stroke-width="0.5" transform="rotate(-30 1261.1 291.2)"/><rect x="1249.6" y="249.5" width="12.1" height="7.5" fill="#d9cfc7" stroke="#c4b8ae" stroke-width="0.5" transform="rotate(25 1249.6 249.5)"/><rect x="1156.4" y="290.2" width="7.0" height="7.2" fill="#d9cfc7" stroke="#c4b8ae" stroke-width="0.5" transform="rotate(-30 1156.4 290.2)"/><rect x="1184.5" y="264.5" width="12.8" height="7.5" fill="#d9cfc7" stroke="#c4b8ae" stroke-width="0.5" transform="rotate(-30 1184.5 264.5)"/><rect x="1257.1" y="508.0" width="12.6" height="4.6" fill="#d9cfc7" stroke="#c4b8ae" stroke-width="0.5" transform="rotate(0 1257.1 508.0)"/><rect x="1489.2" y="330.8" width="7.7" height="4.3" fill="#d9cfc7" stroke="#c4b8ae" stroke-width="0.5" transform="rotate(25 1489.2 330.8)"/><rect x="1142.7" y="489.1" width="12.3" height="8.9" fill="#d9cfc7" stroke="#c4b8ae" stroke-width="0.5" transform="rotate(25 1142.7 489.1)"/><rect x="1334.0" y="339.9" width="10.0" height="4.5" fill="#d9cfc7" stroke="#c4b8ae" stroke-width="0.5" transform="rotate(-30 1334.0 339.9)"/><rect x="1533.4" y="412.9" width="5.8" height="6.4" fill="#d9cfc7" stroke="#c4b8ae" stroke-width="0.5" transform="rotate(0 1533.4 412.9)"/><rect x="1202.7" y="407.1" width="10.2" height="6.4" fill="#d9cfc7" stroke="#c4b8ae" stroke-width="0.5" transform="rotate(25 1202.7 407.1)"/><rect x="1334.5" y="303.3" width="7.5" height="9.7" fill="#d9cfc7" stroke="#c4b8ae" stroke-width="0.5" transform="rotate(25 1334.5 303.3)"/><rect x="1132.4" y="503.4" width="11.4" height="7.9" fill="#d9cfc7" stroke="#c4b8ae" stroke-width="0.5" transform="rotate(40 1132.4 503.4)"/><rect x="1498.7" y="270.3" width="5.0" height="9.4" fill="#d9cfc7" stroke="#c4b8ae" stroke-width="0.5" transform="rotate(40 1498.7 270.3)"/><rect x="1181.6" y="223.5" width="9.6" height="6.2" fill="#d9cfc7" stroke="#c4b8ae" stroke-width="0.5" transform="rotate(-30 1181.6 223.5)"/><rect x="1190.1" y="207.4" width="6.1" height="8.8" fill="#d9cfc7" stroke="#c4b8ae" stroke-width="0.5" transform="rotate(40 1190.1 207.4)"/><rect x="1168.9" y="443.6" width="8.0" height="7.0" fill="#d9cfc7" stroke="#c4b8ae" stroke-width="0.5" transform="rotate(-30 1168.9 443.6)"/><rect x="1302.5" y="253.0" width="6.4" height="4.4" fill="#d9cfc7" stroke="#c4b8ae" stroke-width="0.5" transform="rotate(40 1302.5 253.0)"/><rect x="1376.1" y="519.2" width="12.7" height="5.2" fill="#d9cfc7" stroke="#c4b8ae" stroke-width="0.5" transform="rotate(-30 1376.1 519.2)"/><rect x="1285.3" y="437.6" width="10.1" height="4.5" fill="#d9cfc7" stroke="#c4b8ae" stroke-width="0.5" transform="rotate(0 1285.3 437.6)"/><rect x="1224.2" y="381.8" width="9.5" height="4.3" fill="#d9cfc7" stroke="#c4b8ae" stroke-width="0.5" transform="rotate(0 1224.2 381.8)"/><rect x="1203.7" y="334.7" width="6.2" height="9.8" fill="#d9cfc7" stroke="#c4b8ae" stroke-width="0.5" transform="rotate(-30 1203.7 334.7)"/><rect x="1144.2" y="418.8" width="11.1" height="4.2" fill="#d9cfc7" stroke="#c4b8ae" stroke-width="0.5" transform="rotate(25 1144.2 418.8)"/><rect x="1183.7" y="434.2" width="9.4" height="7.8" fill="#d9cfc7" stroke="#c4b8ae" stroke-width="0.5" transform="rotate(25 1183.7 434.2)"/><rect x="1457.9" y="313.6" width="7.0" height="6.3" fill="#d9cfc7" stroke="#c4b8ae" stroke-width="0.5" transform="rotate(25 1457.9 313.6)"/><rect x="1353.5" y="367.5" width="5.2" height="7.7" fill="#d9cfc7" stroke="#c4b8ae" stroke-width="0.5" transform="rotate(40 1353.5 367.5)"/><rect x="1363.1" y="371.0" width="9.9" height="8.9" fill="#d9cfc7" stroke="#c4b8ae" stroke-width="0.5" transform="rotate(-30 1363.1 371.0)"/><rect x="1308.0" y="337.2" width="11.4" height="7.0" fill="#d9cfc7" stroke="#c4b8ae" stroke-width="0.5" transform="rotate(-30 1308.0 337.2)"/><rect x="1144.0" y="239.9" width="12.4" height="5.9" fill="#d9cfc7" stroke="#c4b8ae" stroke-width="0.5" transform="rotate(0 1144.0 239.9)"/><rect x="1164.3" y="497.4" width="12.2" height="7.9" fill="#d9cfc7" stroke="#c4b8ae" stroke-width="0.5" transform="rotate(-30 1164.3 497.4)"/><rect x="1136.3" y="213.5" width="9.9" height="8.2" fill="#d9cfc7" stroke="#c4b8ae" stroke-width="0.5" transform="rotate(-30 1136.3 213.5)"/><rect x="1616.6" y="565.2" width="11.3" height="9.6" fill="#d9cfc7" stroke="#c4b8ae" stroke-width="0.5" transform="rotate(-30 1616.6 565.2)"/><rect x="1290.1" y="440.0" width="12.2" height="6.7" fill="#d9cfc7" stroke="#c4b8ae" stroke-width="0.5" transform="rotate(25 1290.1 440.0)"/><rect x="1258.6" y="395.5" width="7.6" height="4.2" fill="#d9cfc7" stroke="#c4b8ae" stroke-width="0.5" transform="rotate(-30 1258.6 395.5)"/><rect x="1331.2" y="449.5" width="7.2" height="6.0" fill="#d9cfc7" stroke="#c4b8ae" stroke-width="0.5" transform="rotate(40 1331.2 449.5)"/><rect x="1210.1" y="510.9" width="5.9" height="7.2" fill="#d9cfc7" stroke="#c4b8ae" stroke-width="0.5" transform="rotate(25 1210.1 510.9)"/><rect x="1314.7" y="341.6" width="8.0" height="4.9" fill="#d9cfc7" stroke="#c4b8ae" stroke-width="0.5" transform="rotate(25 1314.7 341.6)"/><rect x="1517.6" y="369.1" width="6.4" height="8.5" fill="#d9cfc7" stroke="#c4b8ae" stroke-width="0.5" transform="rotate(-30 1517.6 369.1)"/><rect x="1275.9" y="399.7" width="7.5" height="9.8" fill="#d9cfc7" stroke="#c4b8ae" stroke-width="0.5" transform="rotate(0 1275.9 399.7)"/><rect x="1445.8" y="358.9" width="7.9" height="4.3" fill="#d9cfc7" stroke="#c4b8ae" stroke-width="0.5" transform="rotate(40 1445.8 358.9)"/><rect x="1240.3" y="456.4" width="5.2" height="4.0" fill="#d9cfc7" stroke="#c4b8ae" stroke-width="0.5" transform="rotate(25 1240.3 456.4)"/><rect x="1279.7" y="402.6" width="9.3" height="6.5" fill="#d9cfc7" stroke="#c4b8ae" stroke-width="0.5" transform="rotate(25 1279.7 402.6)"/><rect x="1427.0" y="270.5" width="10.0" height="6.8" fill="#d9cfc7" stroke="#c4b8ae" stroke-width="0.5" transform="rotate(-30 1427.0 270.5)"/><rect x="1130.3" y="517.8" width="10.7" height="6.7" fill="#d9cfc7" stroke="#c4b8ae" stroke-width="0.5" transform="rotate(-30 1130.3 517.8)"/><rect x="1330.4" y="295.4" width="5.1" height="7.9" fill="#d9cfc7" stroke="#c4b8ae" stroke-width="0.5" transform="rotate(0 1330.4 295.4)"/><rect x="1208.2" y="186.2" width="5.5" height="4.2" fill="#d9cfc7" stroke="#c4b8ae" stroke-width="0.5" transform="rotate(-30 1208.2 186.2)"/><rect x="1245.6" y="210.2" width="11.2" height="4.1" fill="#d9cfc7" stroke="#c4b8ae" stroke-width="0.5" transform="rotate(0 1245.6 210.2)"/><rect x="1461.9" y="267.7" width="8.3" height="7.1" fill="#d9cfc7" stroke="#c4b8ae" stroke-width="0.5" transform="rotate(0 1461.9 267.7)"/><rect x="1457.2" y="357.9" width="9.9" height="7.1" fill="#d9cfc7" stroke="#c4b8ae" stroke-width="0.5" transform="rotate(-30 1457.2 357.9)"/><rect x="1277.9" y="206.1" width="12.1" height="8.7" fill="#d9cfc7" stroke="#c4b8ae" stroke-width="0.5" transform="rotate(0 1277.9 206.1)"/><rect x="1126.3" y="535.6" width="11.0" height="6.8" fill="#d9cfc7" stroke="#c4b8ae" stroke-width="0.5" transform="rotate(40 1126.3 535.6)"/><rect x="1455.3" y="237.0" width="12.1" height="9.6" fill="#d9cfc7" stroke="#c4b8ae" stroke-width="0.5" transform="rotate(25 1455.3 237.0)"/><rect x="1490.2" y="296.1" width="9.4" height="6.6" fill="#d9cfc7" stroke="#c4b8ae" stroke-width="0.5" transform="rotate(0 1490.2 296.1)"/><rect x="1227.6" y="251.9" width="12.3" height="5.2" fill="#d9cfc7" stroke="#c4b8ae" stroke-width="0.5" transform="rotate(40 1227.6 251.9)"/><rect x="1292.5" y="285.0" width="12.3" height="7.8" fill="#d9cfc7" stroke="#c4b8ae" stroke-width="0.5" transform="rotate(0 1292.5 285.0)"/><rect x="1417.3" y="313.4" width="6.7" height="7.7" fill="#d9cfc7" stroke="#c4b8ae" stroke-width="0.5" transform="rotate(-30 1417.3 313.4)"/><rect x="1414.6" y="257.0" width="5.3" height="4.7" fill="#d9cfc7" stroke="#c4b8ae" stroke-width="0.5" transform="rotate(0 1414.6 257.0)"/><rect x="1137.8" y="203.2" width="10.5" height="7.8" fill="#d9cfc7" stroke="#c4b8ae" stroke-width="0.5" transform="rotate(-30 1137.8 203.2)"/><rect x="1310.5" y="524.5" width="11.6" height="9.3" fill="#d9cfc7" stroke="#c4b8ae" stroke-width="0.5" transform="rotate(-30 1310.5 524.5)"/><rect x="1321.1" y="288.1" width="6.6" height="4.2" fill="#d9cfc7" stroke="#c4b8ae" stroke-width="0.5" transform="rotate(-30 1321.1 288.1)"/><rect x="1174.5" y="226.5" width="11.1" height="5.2" fill="#d9cfc7" stroke="#c4b8ae" stroke-width="0.5" transform="rotate(25 1174.5 226.5)"/><rect x="1296.6" y="294.1" width="7.8" height="9.6" fill="#d9cfc7" stroke="#c4b8ae" stroke-width="0.5" transform="rotate(-30 1296.6 294.1)"/><rect x="1348.2" y="506.0" width="7.8" height="8.2" fill="#d9cfc7" stroke="#c4b8ae" stroke-width="0.5" transform="rotate(0 1348.2 506.0)"/><rect x="1415.1" y="481.8" width="11.6" height="7.4" fill="#d9cfc7" stroke="#c4b8ae" stroke-width="0.5" transform="rotate(25 1415.1 481.8)"/><rect x="1210.9" y="186.5" width="6.6" height="8.6" fill="#d9cfc7" stroke="#c4b8ae" stroke-width="0.5" transform="rotate(-30 1210.9 186.5)"/><rect x="1125.3" y="389.2" width="8.9" height="8.8" fill="#d9cfc7" stroke="#c4b8ae" stroke-width="0.5" transform="rotate(-30 1125.3 389.2)"/><rect x="1388.8" y="425.3" width="6.3" height="8.9" fill="#d9cfc7" stroke="#c4b8ae" stroke-width="0.5" transform="rotate(-30 1388.8 425.3)"/><rect x="1380.1" y="231.5" width="10.1" height="4.5" fill="#d9cfc7" stroke="#c4b8ae" stroke-width="0.5" transform="rotate(0 1380.1 231.5)"/><rect x="1330.1" y="349.4" width="12.1" height="4.5" fill="#d9cfc7" stroke="#c4b8ae" stroke-width="0.5" transform="rotate(-30 1330.1 349.4)"/><rect x="1314.9" y="311.5" width="8.4" height="7.3" fill="#d9cfc7" stroke="#c4b8ae" stroke-width="0.5" transform="rotate(-30 1314.9 311.5)"/><rect x="1360.8" y="406.1" width="11.0" height="8.5" fill="#d9cfc7" stroke="#c4b8ae" stroke-width="0.5" transform="rotate(-30 1360.8 406.1)"/><rect x="1302.8" y="321.2" width="6.2" height="9.1" fill="#d9cfc7" stroke="#c4b8ae" stroke-width="0.5" transform="rotate(0 1302.8 321.2)"/><rect x="1505.9" y="256.2" width="8.5" height="8.6" fill="#d9cfc7" stroke="#c4b8ae" stroke-width="0.5" transform="rotate(0 1505.9 256.2)"/><rect x="1242.2" y="324.3" width="10.1" height="8.2" fill="#d9cfc7" stroke="#c4b8ae" stroke-width="0.5" transform="rotate(0 1242.2 324.3)"/><rect x="1221.9" y="310.8" width="10.6" height="9.1" fill="#d9cfc7" stroke="#c4b8ae" stroke-width="0.5" transform="rotate(-30 1221.9 310.8)"/><rect x="1434.1" y="330.3" width="6.9" height="9.7" fill="#d9cfc7" stroke="#c4b8ae" stroke-width="0.5" transform="rotate(25 1434.1 330.3)"/><rect x="1626.2" y="487.7" width="12.7" height="4.6" fill="#d9cfc7" stroke="#c4b8ae" stroke-width="0.5" transform="rotate(40 1626.2 487.7)"/><rect x="1200.9" y="247.4" width="7.4" height="5.8" fill="#d9cfc7" stroke="#c4b8ae" stroke-width="0.5" transform="rotate(25 1200.9 247.4)"/><rect x="1224.2" y="450.1" width="5.9" height="5.2" fill="#d9cfc7" stroke="#c4b8ae" stroke-width="0.5" transform="rotate(40 1224.2 450.1)"/><rect x="1348.2" y="278.1" width="12.8" height="5.8" fill="#d9cfc7" stroke="#c4b8ae" stroke-width="0.5" transform="rotate(-30 1348.2 278.1)"/><rect x="1196.2" y="435.9" width="8.2" height="8.4" fill="#d9cfc7" stroke="#c4b8ae" stroke-width="0.5" transform="rotate(40 1196.2 435.9)"/><rect x="1241.0" y="261.1" width="6.0" height="6.6" fill="#d9cfc7" stroke="#c4b8ae" stroke-width="0.5" transform="rotate(25 1241.0 261.1)"/><rect x="1447.2" y="226.5" width="8.4" height="8.7" fill="#d9cfc7" stroke="#c4b8ae" stroke-width="0.5" transform="rotate(-30 1447.2 226.5)"/><rect x="1252.0" y="361.4" width="8.6" height="7.7" fill="#d9cfc7" stroke="#c4b8ae" stroke-width="0.5" transform="rotate(40 1252.0 361.4)"/><rect x="1390.4" y="459.7" width="12.0" height="9.4" fill="#d9cfc7" stroke="#c4b8ae" stroke-width="0.5" transform="rotate(25 1390.4 459.7)"/><rect x="1206.0" y="509.7" width="12.5" height="7.1" fill="#d9cfc7" stroke="#c4b8ae" stroke-width="0.5" transform="rotate(-30 1206.0 509.7)"/><rect x="1313.9" y="327.9" width="10.9" height="6.7" fill="#d9cfc7" stroke="#c4b8ae" stroke-width="0.5" transform="rotate(-30 1313.9 327.9)"/><rect x="1325.5" y="501.8" width="6.0" height="9.9" fill="#d9cfc7" stroke="#c4b8ae" stroke-width="0.5" transform="rotate(25 1325.5 501.8)"/><rect x="1452.0" y="290.5" width="8.1" height="4.4" fill="#d9cfc7" stroke="#c4b8ae" stroke-width="0.5" transform="rotate(-30 1452.0 290.5)"/><rect x="1339.0" y="360.1" width="10.6" height="6.1" fill="#d9cfc7" stroke="#c4b8ae" stroke-width="0.5" transform="rotate(25 1339.0 360.1)"/><rect x="1179.4" y="311.6" width="8.2" height="9.7" fill="#d9cfc7" stroke="#c4b8ae" stroke-width="0.5" transform="rotate(-30 1179.4 311.6)"/><rect x="1371.5" y="519.5" width="11.4" height="6.1" fill="#d9cfc7" stroke="#c4b8ae" stroke-width="0.5" transform="rotate(25 1371.5 519.5)"/><rect x="1288.3" y="386.8" width="10.0" height="4.5" fill="#d9cfc7" stroke="#c4b8ae" stroke-width="0.5" transform="rotate(25 1288.3 386.8)"/><rect x="1201.8" y="311.5" width="8.1" height="4.5" fill="#d9cfc7" stroke="#c4b8ae" stroke-width="0.5" transform="rotate(0 1201.8 311.5)"/><rect x="1590.4" y="510.6" width="11.7" height="7.8" fill="#d9cfc7" stroke="#c4b8ae" stroke-width="0.5" transform="rotate(-30 1590.4 510.6)"/><rect x="1462.2" y="272.8" width="5.6" height="5.8" fill="#d9cfc7" stroke="#c4b8ae" stroke-width="0.5" transform="rotate(0 1462.2 272.8)"/><rect x="1175.4" y="245.1" width="6.9" height="8.7" fill="#d9cfc7" stroke="#c4b8ae" stroke-width="0.5" transform="rotate(25 1175.4 245.1)"/><rect x="1398.8" y="438.3" width="10.5" height="9.9" fill="#d9cfc7" stroke="#c4b8ae" stroke-width="0.5" transform="rotate(-30 1398.8 438.3)"/><rect x="1396.9" y="493.2" width="8.5" height="9.3" fill="#d9cfc7" stroke="#c4b8ae" stroke-width="0.5" transform="rotate(0 1396.9 493.2)"/><rect x="1184.1" y="359.5" width="11.6" height="6.8" fill="#d9cfc7" stroke="#c4b8ae" stroke-width="0.5" transform="rotate(0 1184.1 359.5)"/><rect x="1153.2" y="379.4" width="6.2" height="6.9" fill="#d9cfc7" stroke="#c4b8ae" stroke-width="0.5" transform="rotate(40 1153.2 379.4)"/><rect x="1207.9" y="434.2" width="10.9" height="5.0" fill="#d9cfc7" stroke="#c4b8ae" stroke-width="0.5" transform="rotate(25 1207.9 434.2)"/><rect x="1364.5" y="418.9" width="10.3" height="9.0" fill="#d9cfc7" stroke="#c4b8ae" stroke-width="0.5" transform="rotate(25 1364.5 418.9)"/><rect x="1216.1" y="335.2" width="10.2" height="4.1" fill="#d9cfc7" stroke="#c4b8ae" stroke-width="0.5" transform="rotate(-30 1216.1 335.2)"/><rect x="1445.6" y="326.2" width="11.9" height="6.2" fill="#d9cfc7" stroke="#c4b8ae" stroke-width="0.5" transform="rotate(40 1445.6 326.2)"/><rect x="1269.6" y="327.6" width="7.0" height="4.3" fill="#d9cfc7" stroke="#c4b8ae" stroke-width="0.5" transform="rotate(25 1269.6 327.6)"/><rect x="1274.1" y="528.7" width="8.2" height="7.0" fill="#d9cfc7" stroke="#c4b8ae" stroke-width="0.5" transform="rotate(25 1274.1 528.7)"/><rect x="1377.0" y="234.8" width="6.5" height="8.3" fill="#d9cfc7" stroke="#c4b8ae" stroke-width="0.5" transform="rotate(-30 1377.0 234.8)"/><rect x="1425.6" y="448.8" width="11.3" height="4.2" fill="#d9cfc7" stroke="#c4b8ae" stroke-width="0.5" transform="rotate(0 1425.6 448.8)"/><rect x="1580.0" y="411.8" width="7.4" height="4.0" fill="#d9cfc7" stroke="#c4b8ae" stroke-width="0.5" transform="rotate(-30 1580.0 411.8)"/><rect x="1547.1" y="382.7" width="11.1" height="4.4" fill="#d9cfc7" stroke="#c4b8ae" stroke-width="0.5" transform="rotate(0 1547.1 382.7)"/><rect x="1446.4" y="474.3" width="9.8" height="8.1" fill="#d9cfc7" stroke="#c4b8ae" stroke-width="0.5" transform="rotate(-30 1446.4 474.3)"/><rect x="1143.4" y="448.3" width="10.0" height="5.0" fill="#d9cfc7" stroke="#c4b8ae" stroke-width="0.5" transform="rotate(-30 1143.4 448.3)"/><rect x="1194.6" y="314.1" width="10.7" height="9.2" fill="#d9cfc7" stroke="#c4b8ae" stroke-width="0.5" transform="rotate(-30 1194.6 314.1)"/><rect x="1340.6" y="317.8" width="8.4" height="7.9" fill="#d9cfc7" stroke="#c4b8ae" stroke-width="0.5" transform="rotate(-30 1340.6 317.8)"/><rect x="1379.8" y="402.2" width="11.6" height="8.6" fill="#d9cfc7" stroke="#c4b8ae" stroke-width="0.5" transform="rotate(40 1379.8 402.2)"/><rect x="1130.3" y="346.3" width="9.7" height="9.6" fill="#d9cfc7" stroke="#c4b8ae" stroke-width="0.5" transform="rotate(-30 1130.3 346.3)"/><rect x="1368.3" y="356.7" width="5.8" height="7.9" fill="#d9cfc7" stroke="#c4b8ae" stroke-width="0.5" transform="rotate(-30 1368.3 356.7)"/><rect x="1127.8" y="463.1" width="12.9" height="9.2" fill="#d9cfc7" stroke="#c4b8ae" stroke-width="0.5" transform="rotate(-30 1127.8 463.1)"/><rect x="1571.7" y="239.4" width="10.8" height="5.5" fill="#d9cfc7" stroke="#c4b8ae" stroke-width="0.5" transform="rotate(-30 1571.7 239.4)"/><rect x="1481.5" y="245.9" width="11.1" height="5.8" fill="#d9cfc7" stroke="#c4b8ae" stroke-width="0.5" transform="rotate(0 1481.5 245.9)"/><rect x="1128.9" y="192.1" width="10.2" height="8.9" fill="#d9cfc7" stroke="#c4b8ae" stroke-width="0.5" transform="rotate(-30 1128.9 192.1)"/><rect x="1323.7" y="315.4" width="9.8" height="9.7" fill="#d9cfc7" stroke="#c4b8ae" stroke-width="0.5" transform="rotate(40 1323.7 315.4)"/><rect x="1437.2" y="316.9" width="12.6" height="8.4" fill="#d9cfc7" stroke="#c4b8ae" stroke-width="0.5" transform="rotate(40 1437.2 316.9)"/><rect x="1472.3" y="246.0" width="11.4" height="6.2" fill="#d9cfc7" stroke="#c4b8ae" stroke-width="0.5" transform="rotate(-30 1472.3 246.0)"/><rect x="1447.9" y="359.0" width="8.1" height="8.7" fill="#d9cfc7" stroke="#c4b8ae" stroke-width="0.5" transform="rotate(25 1447.9 359.0)"/><rect x="1282.2" y="363.4" width="12.1" height="6.3" fill="#d9cfc7" stroke="#c4b8ae" stroke-width="0.5" transform="rotate(40 1282.2 363.4)"/><rect x="1269.2" y="186.7" width="7.1" height="6.5" fill="#d9cfc7" stroke="#c4b8ae" stroke-width="0.5" transform="rotate(0 1269.2 186.7)"/><rect x="1271.9" y="244.2" width="12.1" height="10.0" fill="#d9cfc7" stroke="#c4b8ae" stroke-width="0.5" transform="rotate(-30 1271.9 244.2)"/><rect x="1264.3" y="538.4" width="11.5" height="8.1" fill="#d9cfc7" stroke="#c4b8ae" stroke-width="0.5" transform="rotate(40 1264.3 538.4)"/><rect x="1302.0" y="221.2" width="9.4" height="8.8" fill="#d9cfc7" stroke="#c4b8ae" stroke-width="0.5" transform="rotate(-30 1302.0 221.2)"/><rect x="1282.7" y="209.8" width="8.2" height="8.3" fill="#d9cfc7" stroke="#c4b8ae" stroke-width="0.5" transform="rotate(25 1282.7 209.8)"/><rect x="1401.9" y="408.0" width="7.8" height="4.4" fill="#d9cfc7" stroke="#c4b8ae" stroke-width="0.5" transform="rotate(40 1401.9 408.0)"/><rect x="1392.3" y="383.3" width="9.7" height="5.1" fill="#d9cfc7" stroke="#c4b8ae" stroke-width="0.5" transform="rotate(-30 1392.3 383.3)"/><rect x="1170.6" y="519.6" width="7.3" height="7.5" fill="#d9cfc7" stroke="#c4b8ae" stroke-width="0.5" transform="rotate(25 1170.6 519.6)"/><rect x="1330.7" y="400.1" width="6.2" height="4.3" fill="#d9cfc7" stroke="#c4b8ae" stroke-width="0.5" transform="rotate(40 1330.7 400.1)"/><rect x="1316.0" y="229.9" width="10.1" height="8.7" fill="#d9cfc7" stroke="#c4b8ae" stroke-width="0.5" transform="rotate(-30 1316.0 229.9)"/><rect x="1285.9" y="198.6" width="7.2" height="7.6" fill="#d9cfc7" stroke="#c4b8ae" stroke-width="0.5" transform="rotate(-30 1285.9 198.6)"/><rect x="1373.9" y="420.8" width="7.1" height="8.7" fill="#d9cfc7" stroke="#c4b8ae" stroke-width="0.5" transform="rotate(40 1373.9 420.8)"/><rect x="1173.1" y="371.0" width="9.7" height="7.7" fill="#d9cfc7" stroke="#c4b8ae" stroke-width="0.5" transform="rotate(-30 1173.1 371.0)"/><rect x="1254.1" y="201.7" width="6.6" height="5.1" fill="#d9cfc7" stroke="#c4b8ae" stroke-width="0.5" transform="rotate(-30 1254.1 201.7)"/><rect x="1137.2" y="200.4" width="8.0" height="8.2" fill="#d9cfc7" stroke="#c4b8ae" stroke-width="0.5" transform="rotate(40 1137.2 200.4)"/><rect x="1611.8" y="562.7" width="9.8" height="6.4" fill="#d9cfc7" stroke="#c4b8ae" stroke-width="0.5" transform="rotate(-30 1611.8 562.7)"/><rect x="1243.3" y="223.2" width="12.4" height="7.0" fill="#d9cfc7" stroke="#c4b8ae" stroke-width="0.5" transform="rotate(-30 1243.3 223.2)"/><rect x="1354.3" y="252.1" width="12.7" height="10.0" fill="#d9cfc7" stroke="#c4b8ae" stroke-width="0.5" transform="rotate(-30 1354.3 252.1)"/><rect x="1153.6" y="414.9" width="5.2" height="9.5" fill="#d9cfc7" stroke="#c4b8ae" stroke-width="0.5" transform="rotate(25 1153.6 414.9)"/><rect x="1277.2" y="430.9" width="11.1" height="4.6" fill="#d9cfc7" stroke="#c4b8ae" stroke-width="0.5" transform="rotate(25 1277.2 430.9)"/><rect x="1314.8" y="347.5" width="8.0" height="6.3" fill="#d9cfc7" stroke="#c4b8ae" stroke-width="0.5" transform="rotate(40 1314.8 347.5)"/><rect x="1246.0" y="245.3" width="10.4" height="4.1" fill="#d9cfc7" stroke="#c4b8ae" stroke-width="0.5" transform="rotate(-30 1246.0 245.3)"/><rect x="1163.1" y="442.1" width="8.0" height="8.5" fill="#d9cfc7" stroke="#c4b8ae" stroke-width="0.5" transform="rotate(40 1163.1 442.1)"/><rect x="1134.2" y="217.1" width="12.8" height="5.9" fill="#d9cfc7" stroke="#c4b8ae" stroke-width="0.5" transform="rotate(-30 1134.2 217.1)"/><rect x="1369.4" y="446.1" width="6.1" height="5.3" fill="#d9cfc7" stroke="#c4b8ae" stroke-width="0.5" transform="rotate(-30 1369.4 446.1)"/><rect x="1216.0" y="372.9" width="12.1" height="6.6" fill="#d9cfc7" stroke="#c4b8ae" stroke-width="0.5" transform="rotate(-30 1216.0 372.9)"/><rect x="1260.5" y="356.5" width="6.2" height="5.6" fill="#d9cfc7" stroke="#c4b8ae" stroke-width="0.5" transform="rotate(25 1260.5 356.5)"/><rect x="1295.6" y="255.5" width="8.9" height="5.9" fill="#d9cfc7" stroke="#c4b8ae" stroke-width="0.5" transform="rotate(40 1295.6 255.5)"/><rect x="1181.9" y="591.1" width="12.2" height="8.0" fill="#d9cfc7" stroke="#c4b8ae" stroke-width="0.5" transform="rotate(-30 1181.9 591.1)"/><rect x="1411.9" y="531.8" width="6.0" height="8.5" fill="#d9cfc7" stroke="#c4b8ae" stroke-width="0.5" transform="rotate(25 1411.9 531.8)"/><rect x="1345.9" y="294.3" width="6.9" height="5.4" fill="#d9cfc7" stroke="#c4b8ae" stroke-width="0.5" transform="rotate(40 1345.9 294.3)"/><rect x="1272.3" y="557.0" width="10.8" height="5.8" fill="#d9cfc7" stroke="#c4b8ae" stroke-width="0.5" transform="rotate(-30 1272.3 557.0)"/><rect x="1351.1" y="396.2" width="9.1" height="6.7" fill="#d9cfc7" stroke="#c4b8ae" stroke-width="0.5" transform="rotate(0 1351.1 396.2)"/><rect x="1270.8" y="335.1" width="5.3" height="6.5" fill="#d9cfc7" stroke="#c4b8ae" stroke-width="0.5" transform="rotate(25 1270.8 335.1)"/><rect x="1417.8" y="243.2" width="6.4" height="8.6" fill="#d9cfc7" stroke="#c4b8ae" stroke-width="0.5" transform="rotate(-30 1417.8 243.2)"/><rect x="1224.5" y="218.8" width="5.7" height="7.7" fill="#d9cfc7" stroke="#c4b8ae" stroke-width="0.5" transform="rotate(40 1224.5 218.8)"/><rect x="1468.7" y="446.2" width="6.5" height="5.8" fill="#d9cfc7" stroke="#c4b8ae" stroke-width="0.5" transform="rotate(-30 1468.7 446.2)"/><rect x="1156.9" y="489.3" width="8.3" height="8.3" fill="#d9cfc7" stroke="#c4b8ae" stroke-width="0.5" transform="rotate(-30 1156.9 489.3)"/><rect x="1390.5" y="329.9" width="7.3" height="7.8" fill="#d9cfc7" stroke="#c4b8ae" stroke-width="0.5" transform="rotate(40 1390.5 329.9)"/><rect x="1169.6" y="355.5" width="11.1" height="4.8" fill="#d9cfc7" stroke="#c4b8ae" stroke-width="0.5" transform="rotate(25 1169.6 355.5)"/><rect x="1251.1" y="419.1" width="12.9" height="4.2" fill="#d9cfc7" stroke="#c4b8ae" stroke-width="0.5" transform="rotate(25 1251.1 419.1)"/><rect x="1604.0" y="587.1" width="7.9" height="5.5" fill="#d9cfc7" stroke="#c4b8ae" stroke-width="0.5" transform="rotate(25 1604.0 587.1)"/><rect x="1500.2" y="370.8" width="5.2" height="8.8" fill="#d9cfc7" stroke="#c4b8ae" stroke-width="0.5" transform="rotate(-30 1500.2 370.8)"/><rect x="1217.1" y="228.5" width="7.0" height="8.9" fill="#d9cfc7" stroke="#c4b8ae" stroke-width="0.5" transform="rotate(-30 1217.1 228.5)"/><rect x="1257.9" y="532.7" width="10.1" height="6.8" fill="#d9cfc7" stroke="#c4b8ae" stroke-width="0.5" transform="rotate(-30 1257.9 532.7)"/><rect x="1377.7" y="393.3" width="7.2" height="4.7" fill="#d9cfc7" stroke="#c4b8ae" stroke-width="0.5" transform="rotate(40 1377.7 393.3)"/><rect x="1579.4" y="410.2" width="6.8" height="8.0" fill="#d9cfc7" stroke="#c4b8ae" stroke-width="0.5" transform="rotate(40 1579.4 410.2)"/><rect x="1247.0" y="324.7" width="8.5" height="9.9" fill="#d9cfc7" stroke="#c4b8ae" stroke-width="0.5" transform="rotate(25 1247.0 324.7)"/><rect x="1543.6" y="536.9" width="9.1" height="9.7" fill="#d9cfc7" stroke="#c4b8ae" stroke-width="0.5" transform="rotate(25 1543.6 536.9)"/><rect x="1251.6" y="360.8" width="10.1" height="6.2" fill="#d9cfc7" stroke="#c4b8ae" stroke-width="0.5" transform="rotate(0 1251.6 360.8)"/><rect x="1219.7" y="320.3" width="6.6" height="8.0" fill="#d9cfc7" stroke="#c4b8ae" stroke-width="0.5" transform="rotate(-30 1219.7 320.3)"/><rect x="1579.3" y="552.2" width="10.1" height="5.6" fill="#d9cfc7" stroke="#c4b8ae" stroke-width="0.5" transform="rotate(0 1579.3 552.2)"/><rect x="1264.1" y="410.5" width="12.4" height="7.7" fill="#d9cfc7" stroke="#c4b8ae" stroke-width="0.5" transform="rotate(25 1264.1 410.5)"/><rect x="1185.8" y="191.7" width="6.9" height="4.2" fill="#d9cfc7" stroke="#c4b8ae" stroke-width="0.5" transform="rotate(-30 1185.8 191.7)"/><rect x="1280.6" y="454.1" width="6.0" height="7.6" fill="#d9cfc7" stroke="#c4b8ae" stroke-width="0.5" transform="rotate(0 1280.6 454.1)"/><rect x="1264.4" y="490.7" width="10.9" height="5.7" fill="#d9cfc7" stroke="#c4b8ae" stroke-width="0.5" transform="rotate(40 1264.4 490.7)"/><rect x="1226.8" y="480.1" width="8.7" height="7.3" fill="#d9cfc7" stroke="#c4b8ae" stroke-width="0.5" transform="rotate(0 1226.8 480.1)"/><rect x="1369.6" y="525.0" width="7.7" height="5.1" fill="#d9cfc7" stroke="#c4b8ae" stroke-width="0.5" transform="rotate(0 1369.6 525.0)"/><rect x="1320.7" y="428.5" width="5.1" height="6.1" fill="#d9cfc7" stroke="#c4b8ae" stroke-width="0.5" transform="rotate(-30 1320.7 428.5)"/><rect x="1290.2" y="320.7" width="7.2" height="9.3" fill="#d9cfc7" stroke="#c4b8ae" stroke-width="0.5" transform="rotate(-30 1290.2 320.7)"/><rect x="1275.5" y="505.7" width="6.3" height="4.4" fill="#d9cfc7" stroke="#c4b8ae" stroke-width="0.5" transform="rotate(25 1275.5 505.7)"/><rect x="1350.0" y="211.7" width="8.1" height="6.6" fill="#d9cfc7" stroke="#c4b8ae" stroke-width="0.5" transform="rotate(-30 1350.0 211.7)"/><rect x="1195.4" y="269.8" width="9.9" height="5.7" fill="#d9cfc7" stroke="#c4b8ae" stroke-width="0.5" transform="rotate(0 1195.4 269.8)"/><rect x="1172.0" y="540.5" width="12.4" height="10.0" fill="#d9cfc7" stroke="#c4b8ae" stroke-width="0.5" transform="rotate(25 1172.0 540.5)"/><rect x="1188.7" y="546.5" width="5.0" height="8.6" fill="#d9cfc7" stroke="#c4b8ae" stroke-width="0.5" transform="rotate(0 1188.7 546.5)"/><rect x="1183.6" y="350.6" width="12.9" height="4.9" fill="#d9cfc7" stroke="#c4b8ae" stroke-width="0.5" transform="rotate(25 1183.6 350.6)"/><rect x="1356.4" y="375.6" width="10.8" height="5.8" fill="#d9cfc7" stroke="#c4b8ae" stroke-width="0.5" transform="rotate(40 1356.4 375.6)"/><rect x="1394.5" y="432.5" width="10.2" height="4.0" fill="#d9cfc7" stroke="#c4b8ae" stroke-width="0.5" transform="rotate(40 1394.5 432.5)"/><rect x="1319.4" y="310.2" width="9.3" height="8.8" fill="#d9cfc7" stroke="#c4b8ae" stroke-width="0.5" transform="rotate(40 1319.4 310.2)"/><rect x="1419.9" y="426.8" width="5.7" height="9.5" fill="#d9cfc7" stroke="#c4b8ae" stroke-width="0.5" transform="rotate(25 1419.9 426.8)"/><rect x="1623.0" y="437.7" width="7.6" height="9.8" fill="#d9cfc7" stroke="#c4b8ae" stroke-width="0.5" transform="rotate(-30 1623.0 437.7)"/><rect x="1136.2" y="292.2" width="12.2" height="5.8" fill="#d9cfc7" stroke="#c4b8ae" stroke-width="0.5" transform="rotate(0 1136.2 292.2)"/><rect x="1390.0" y="400.1" width="10.5" height="6.3" fill="#d9cfc7" stroke="#c4b8ae" stroke-width="0.5" transform="rotate(25 1390.0 400.1)"/><rect x="1144.0" y="466.0" width="8.6" height="4.1" fill="#d9cfc7" stroke="#c4b8ae" stroke-width="0.5" transform="rotate(-30 1144.0 466.0)"/><rect x="1394.0" y="227.0" width="8.0" height="6.4" fill="#d9cfc7" stroke="#c4b8ae" stroke-width="0.5" transform="rotate(0 1394.0 227.0)"/><rect x="1340.4" y="352.3" width="11.1" height="9.4" fill="#d9cfc7" stroke="#c4b8ae" stroke-width="0.5" transform="rotate(0 1340.4 352.3)"/><rect x="1300.1" y="405.5" width="11.5" height="5.0" fill="#d9cfc7" stroke="#c4b8ae" stroke-width="0.5" transform="rotate(25 1300.1 405.5)"/><rect x="1312.2" y="217.1" width="7.5" height="5.1" fill="#d9cfc7" stroke="#c4b8ae" stroke-width="0.5" transform="rotate(25 1312.2 217.1)"/><rect x="1272.6" y="397.8" width="9.0" height="5.1" fill="#d9cfc7" stroke="#c4b8ae" stroke-width="0.5" transform="rotate(-30 1272.6 397.8)"/><rect x="1154.0" y="419.9" width="5.9" height="7.4" fill="#d9cfc7" stroke="#c4b8ae" stroke-width="0.5" transform="rotate(-30 1154.0 419.9)"/><rect x="1479.9" y="190.4" width="10.7" height="7.3" fill="#d9cfc7" stroke="#c4b8ae" stroke-width="0.5" transform="rotate(25 1479.9 190.4)"/><rect x="1328.1" y="226.8" width="5.1" height="4.2" fill="#d9cfc7" stroke="#c4b8ae" stroke-width="0.5" transform="rotate(-30 1328.1 226.8)"/><rect x="1379.9" y="415.0" width="7.1" height="7.9" fill="#d9cfc7" stroke="#c4b8ae" stroke-width="0.5" transform="rotate(0 1379.9 415.0)"/><rect x="1388.4" y="245.5" width="6.6" height="7.6" fill="#d9cfc7" stroke="#c4b8ae" stroke-width="0.5" transform="rotate(-30 1388.4 245.5)"/><rect x="1203.9" y="500.4" width="5.9" height="4.6" fill="#d9cfc7" stroke="#c4b8ae" stroke-width="0.5" transform="rotate(-30 1203.9 500.4)"/><rect x="1476.2" y="425.6" width="6.2" height="5.4" fill="#d9cfc7" stroke="#c4b8ae" stroke-width="0.5" transform="rotate(25 1476.2 425.6)"/><rect x="1210.4" y="296.4" width="5.8" height="9.4" fill="#d9cfc7" stroke="#c4b8ae" stroke-width="0.5" transform="rotate(0 1210.4 296.4)"/><rect x="1155.5" y="265.3" width="10.0" height="4.1" fill="#d9cfc7" stroke="#c4b8ae" stroke-width="0.5" transform="rotate(-30 1155.5 265.3)"/><rect x="1349.9" y="442.8" width="7.0" height="4.3" fill="#d9cfc7" stroke="#c4b8ae" stroke-width="0.5" transform="rotate(0 1349.9 442.8)"/><rect x="1248.4" y="347.4" width="10.7" height="5.3" fill="#d9cfc7" stroke="#c4b8ae" stroke-width="0.5" transform="rotate(25 1248.4 347.4)"/><rect x="1328.7" y="480.7" width="5.2" height="9.2" fill="#d9cfc7" stroke="#c4b8ae" stroke-width="0.5" transform="rotate(-30 1328.7 480.7)"/><rect x="1212.5" y="334.4" width="6.5" height="9.8" fill="#d9cfc7" stroke="#c4b8ae" stroke-width="0.5" transform="rotate(25 1212.5 334.4)"/><rect x="1327.3" y="336.3" width="7.7" height="9.2" fill="#d9cfc7" stroke="#c4b8ae" stroke-width="0.5" transform="rotate(25 1327.3 336.3)"/><rect x="1331.0" y="213.1" width="6.0" height="9.0" fill="#d9cfc7" stroke="#c4b8ae" stroke-width="0.5" transform="rotate(25 1331.0 213.1)"/><rect x="1408.8" y="346.4" width="8.7" height="6.1" fill="#d9cfc7" stroke="#c4b8ae" stroke-width="0.5" transform="rotate(40 1408.8 346.4)"/><rect x="1141.0" y="461.0" width="7.7" height="4.9" fill="#d9cfc7" stroke="#c4b8ae" stroke-width="0.5" transform="rotate(-30 1141.0 461.0)"/><rect x="1170.8" y="297.6" width="11.7" height="4.8" fill="#d9cfc7" stroke="#c4b8ae" stroke-width="0.5" transform="rotate(40 1170.8 297.6)"/><rect x="1364.0" y="515.1" width="6.9" height="6.2" fill="#d9cfc7" stroke="#c4b8ae" stroke-width="0.5" transform="rotate(-30 1364.0 515.1)"/><rect x="1240.3" y="373.4" width="6.0" height="8.2" fill="#d9cfc7" stroke="#c4b8ae" stroke-width="0.5" transform="rotate(25 1240.3 373.4)"/><rect x="1430.5" y="368.3" width="12.9" height="7.2" fill="#d9cfc7" stroke="#c4b8ae" stroke-width="0.5" transform="rotate(40 1430.5 368.3)"/><rect x="1436.8" y="274.0" width="12.0" height="4.7" fill="#d9cfc7" stroke="#c4b8ae" stroke-width="0.5" transform="rotate(0 1436.8 274.0)"/><rect x="1170.2" y="538.7" width="10.9" height="8.6" fill="#d9cfc7" stroke="#c4b8ae" stroke-width="0.5" transform="rotate(-30 1170.2 538.7)"/><rect x="1324.2" y="221.6" width="6.4" height="9.1" fill="#d9cfc7" stroke="#c4b8ae" stroke-width="0.5" transform="rotate(25 1324.2 221.6)"/><rect x="1222.5" y="483.5" width="5.7" height="5.7" fill="#d9cfc7" stroke="#c4b8ae" stroke-width="0.5" transform="rotate(40 1222.5 483.5)"/><rect x="1268.7" y="353.0" width="12.3" height="8.6" fill="#d9cfc7" stroke="#c4b8ae" stroke-width="0.5" transform="rotate(-30 1268.7 353.0)"/><rect x="1136.0" y="477.4" width="8.7" height="10.0" fill="#d9cfc7" stroke="#c4b8ae" stroke-width="0.5" transform="rotate(40 1136.0 477.4)"/><rect x="1304.7" y="446.3" width="6.5" height="4.7" fill="#d9cfc7" stroke="#c4b8ae" stroke-width="0.5" transform="rotate(0 1304.7 446.3)"/><rect x="1501.8" y="481.0" width="5.3" height="5.0" fill="#d9cfc7" stroke="#c4b8ae" stroke-width="0.5" transform="rotate(-30 1501.8 481.0)"/><rect x="1408.0" y="446.6" width="12.5" height="7.4" fill="#d9cfc7" stroke="#c4b8ae" stroke-width="0.5" transform="rotate(-30 1408.0 446.6)"/><rect x="1417.2" y="482.7" width="7.0" height="6.6" fill="#d9cfc7" stroke="#c4b8ae" stroke-width="0.5" transform="rotate(0 1417.2 482.7)"/><rect x="1303.1" y="186.4" width="11.7" height="8.7" fill="#d9cfc7" stroke="#c4b8ae" stroke-width="0.5" transform="rotate(25 1303.1 186.4)"/><rect x="1142.2" y="317.9" width="11.2" height="6.1" fill="#d9cfc7" stroke="#c4b8ae" stroke-width="0.5" transform="rotate(-30 1142.2 317.9)"/><rect x="1338.3" y="494.0" width="13.0" height="7.7" fill="#d9cfc7" stroke="#c4b8ae" stroke-width="0.5" transform="rotate(-30 1338.3 494.0)"/><rect x="1268.1" y="223.2" width="12.6" height="6.5" fill="#d9cfc7" stroke="#c4b8ae" stroke-width="0.5" transform="rotate(25 1268.1 223.2)"/><rect x="1479.9" y="491.8" width="11.6" height="7.8" fill="#d9cfc7" stroke="#c4b8ae" stroke-width="0.5" transform="rotate(40 1479.9 491.8)"/><rect x="1385.5" y="466.1" width="6.6" height="8.0" fill="#d9cfc7" stroke="#c4b8ae" stroke-width="0.5" transform="rotate(-30 1385.5 466.1)"/><rect x="1375.6" y="264.4" width="12.6" height="9.0" fill="#d9cfc7" stroke="#c4b8ae" stroke-width="0.5" transform="rotate(0 1375.6 264.4)"/><rect x="1257.8" y="412.2" width="12.8" height="7.8" fill="#d9cfc7" stroke="#c4b8ae" stroke-width="0.5" transform="rotate(0 1257.8 412.2)"/><rect x="1302.2" y="224.3" width="10.1" height="4.8" fill="#d9cfc7" stroke="#c4b8ae" stroke-width="0.5" transform="rotate(40 1302.2 224.3)"/><rect x="1468.9" y="284.5" width="6.9" height="7.1" fill="#d9cfc7" stroke="#c4b8ae" stroke-width="0.5" transform="rotate(40 1468.9 284.5)"/><rect x="1191.7" y="451.3" width="10.6" height="4.8" fill="#d9cfc7" stroke="#c4b8ae" stroke-width="0.5" transform="rotate(-30 1191.7 451.3)"/><rect x="1426.2" y="285.7" width="10.0" height="4.7" fill="#d9cfc7" stroke="#c4b8ae" stroke-width="0.5" transform="rotate(40 1426.2 285.7)"/><rect x="1431.9" y="376.9" width="11.1" height="9.0" fill="#d9cfc7" stroke="#c4b8ae" stroke-width="0.5" transform="rotate(-30 1431.9 376.9)"/><rect x="1180.1" y="313.9" width="12.7" height="5.0" fill="#d9cfc7" stroke="#c4b8ae" stroke-width="0.5" transform="rotate(40 1180.1 313.9)"/><rect x="1364.8" y="336.3" width="6.3" height="4.4" fill="#d9cfc7" stroke="#c4b8ae" stroke-width="0.5" transform="rotate(-30 1364.8 336.3)"/><rect x="1259.4" y="453.1" width="12.7" height="6.9" fill="#d9cfc7" stroke="#c4b8ae" stroke-width="0.5" transform="rotate(0 1259.4 453.1)"/><rect x="1289.1" y="334.7" width="5.7" height="5.7" fill="#d9cfc7" stroke="#c4b8ae" stroke-width="0.5" transform="rotate(0 1289.1 334.7)"/><rect x="1249.9" y="243.4" width="5.2" height="8.6" fill="#d9cfc7" stroke="#c4b8ae" stroke-width="0.5" transform="rotate(-30 1249.9 243.4)"/><rect x="1275.9" y="262.9" width="10.1" height="9.1" fill="#d9cfc7" stroke="#c4b8ae" stroke-width="0.5" transform="rotate(-30 1275.9 262.9)"/><rect x="1175.7" y="483.6" width="7.5" height="7.7" fill="#d9cfc7" stroke="#c4b8ae" stroke-width="0.5" transform="rotate(40 1175.7 483.6)"/><rect x="1218.2" y="527.7" width="7.6" height="6.2" fill="#d9cfc7" stroke="#c4b8ae" stroke-width="0.5" transform="rotate(0 1218.2 527.7)"/><rect x="1152.8" y="230.4" width="11.4" height="9.5" fill="#d9cfc7" stroke="#c4b8ae" stroke-width="0.5" transform="rotate(40 1152.8 230.4)"/><rect x="1380.8" y="251.2" width="7.4" height="7.5" fill="#d9cfc7" stroke="#c4b8ae" stroke-width="0.5" transform="rotate(-30 1380.8 251.2)"/><rect x="1196.2" y="280.2" width="6.1" height="7.8" fill="#d9cfc7" stroke="#c4b8ae" stroke-width="0.5" transform="rotate(40 1196.2 280.2)"/><rect x="1169.3" y="202.5" width="8.5" height="5.1" fill="#d9cfc7" stroke="#c4b8ae" stroke-width="0.5" transform="rotate(25 1169.3 202.5)"/><rect x="1124.4" y="534.1" width="11.8" height="8.7" fill="#d9cfc7" stroke="#c4b8ae" stroke-width="0.5" transform="rotate(40 1124.4 534.1)"/><rect x="1196.9" y="215.8" width="5.4" height="8.3" fill="#d9cfc7" stroke="#c4b8ae" stroke-width="0.5" transform="rotate(25 1196.9 215.8)"/><rect x="1155.4" y="189.6" width="12.6" height="5.1" fill="#d9cfc7" stroke="#c4b8ae" stroke-width="0.5" transform="rotate(-30 1155.4 189.6)"/><rect x="1318.5" y="187.7" width="11.4" height="8.1" fill="#d9cfc7" stroke="#c4b8ae" stroke-width="0.5" transform="rotate(0 1318.5 187.7)"/><rect x="1223.8" y="221.2" width="7.6" height="6.8" fill="#d9cfc7" stroke="#c4b8ae" stroke-width="0.5" transform="rotate(0 1223.8 221.2)"/><rect x="1154.0" y="466.0" width="9.9" height="5.8" fill="#d9cfc7" stroke="#c4b8ae" stroke-width="0.5" transform="rotate(0 1154.0 466.0)"/><rect x="1340.3" y="338.6" width="10.3" height="4.8" fill="#d9cfc7" stroke="#c4b8ae" stroke-width="0.5" transform="rotate(25 1340.3 338.6)"/><rect x="1396.7" y="448.4" width="11.8" height="5.3" fill="#d9cfc7" stroke="#c4b8ae" stroke-width="0.5" transform="rotate(40 1396.7 448.4)"/><rect x="1479.7" y="246.8" width="9.6" height="7.3" fill="#d9cfc7" stroke="#c4b8ae" stroke-width="0.5" transform="rotate(40 1479.7 246.8)"/><rect x="1308.8" y="285.5" width="8.5" height="5.6" fill="#d9cfc7" stroke="#c4b8ae" stroke-width="0.5" transform="rotate(-30 1308.8 285.5)"/><rect x="1180.9" y="542.9" width="7.0" height="4.6" fill="#d9cfc7" stroke="#c4b8ae" stroke-width="0.5" transform="rotate(0 1180.9 542.9)"/><rect x="1468.8" y="479.6" width="6.8" height="6.7" fill="#d9cfc7" stroke="#c4b8ae" stroke-width="0.5" transform="rotate(0 1468.8 479.6)"/><rect x="1418.5" y="232.8" width="9.1" height="7.5" fill="#d9cfc7" stroke="#c4b8ae" stroke-width="0.5" transform="rotate(-30 1418.5 232.8)"/><rect x="1192.3" y="394.3" width="9.1" height="9.0" fill="#d9cfc7" stroke="#c4b8ae" stroke-width="0.5" transform="rotate(-30 1192.3 394.3)"/><rect x="1360.4" y="470.0" width="9.4" height="9.8" fill="#d9cfc7" stroke="#c4b8ae" stroke-width="0.5" transform="rotate(-30 1360.4 470.0)"/><rect x="1413.5" y="506.8" width="6.1" height="8.7" fill="#d9cfc7" stroke="#c4b8ae" stroke-width="0.5" transform="rotate(-30 1413.5 506.8)"/><rect x="1331.6" y="205.5" width="5.3" height="8.2" fill="#d9cfc7" stroke="#c4b8ae" stroke-width="0.5" transform="rotate(-30 1331.6 205.5)"/><rect x="1360.2" y="235.9" width="6.1" height="9.5" fill="#d9cfc7" stroke="#c4b8ae" stroke-width="0.5" transform="rotate(-30 1360.2 235.9)"/><rect x="1596.4" y="546.5" width="11.0" height="6.0" fill="#d9cfc7" stroke="#c4b8ae" stroke-width="0.5" transform="rotate(-30 1596.4 546.5)"/><rect x="1145.4" y="436.0" width="5.8" height="7.3" fill="#d9cfc7" stroke="#c4b8ae" stroke-width="0.5" transform="rotate(0 1145.4 436.0)"/><rect x="1254.4" y="266.0" width="8.6" height="9.0" fill="#d9cfc7" stroke="#c4b8ae" stroke-width="0.5" transform="rotate(0 1254.4 266.0)"/><rect x="1161.1" y="293.0" width="6.2" height="9.6" fill="#d9cfc7" stroke="#c4b8ae" stroke-width="0.5" transform="rotate(40 1161.1 293.0)"/><rect x="1374.4" y="386.4" width="5.3" height="9.0" fill="#d9cfc7" stroke="#c4b8ae" stroke-width="0.5" transform="rotate(-30 1374.4 386.4)"/><rect x="1217.1" y="524.8" width="10.4" height="6.4" fill="#d9cfc7" stroke="#c4b8ae" stroke-width="0.5" transform="rotate(40 1217.1 524.8)"/><rect x="1309.2" y="404.7" width="7.5" height="4.8" fill="#d9cfc7" stroke="#c4b8ae" stroke-width="0.5" transform="rotate(0 1309.2 404.7)"/><rect x="1145.5" y="256.3" width="7.9" height="6.8" fill="#d9cfc7" stroke="#c4b8ae" stroke-width="0.5" transform="rotate(0 1145.5 256.3)"/><rect x="1296.1" y="386.1" width="6.8" height="5.5" fill="#d9cfc7" stroke="#c4b8ae" stroke-width="0.5" transform="rotate(0 1296.1 386.1)"/><rect x="1146.4" y="246.4" width="10.4" height="5.6" fill="#d9cfc7" stroke="#c4b8ae" stroke-width="0.5" transform="rotate(25 1146.4 246.4)"/><rect x="1418.9" y="427.9" width="6.1" height="8.2" fill="#d9cfc7" stroke="#c4b8ae" stroke-width="0.5" transform="rotate(0 1418.9 427.9)"/><rect x="1342.9" y="422.7" width="5.8" height="8.8" fill="#d9cfc7" stroke="#c4b8ae" stroke-width="0.5" transform="rotate(-30 1342.9 422.7)"/><rect x="1279.9" y="502.0" width="10.9" height="7.1" fill="#d9cfc7" stroke="#c4b8ae" stroke-width="0.5" transform="rotate(-30 1279.9 502.0)"/><rect x="1303.8" y="414.0" width="8.2" height="4.4" fill="#d9cfc7" stroke="#c4b8ae" stroke-width="0.5" transform="rotate(25 1303.8 414.0)"/><rect x="1327.4" y="505.8" width="12.4" height="7.5" fill="#d9cfc7" stroke="#c4b8ae" stroke-width="0.5" transform="rotate(-30 1327.4 505.8)"/><rect x="1278.6" y="313.7" width="10.8" height="7.3" fill="#d9cfc7" stroke="#c4b8ae" stroke-width="0.5" transform="rotate(25 1278.6 313.7)"/><rect x="1160.9" y="264.8" width="12.4" height="7.5" fill="#d9cfc7" stroke="#c4b8ae" stroke-width="0.5" transform="rotate(25 1160.9 264.8)"/><rect x="1158.0" y="386.6" width="12.2" height="5.7" fill="#d9cfc7" stroke="#c4b8ae" stroke-width="0.5" transform="rotate(25 1158.0 386.6)"/><rect x="1405.0" y="500.0" width="10.0" height="5.4" fill="#d9cfc7" stroke="#c4b8ae" stroke-width="0.5" transform="rotate(-30 1405.0 500.0)"/><rect x="1235.7" y="351.4" width="6.6" height="7.6" fill="#d9cfc7" stroke="#c4b8ae" stroke-width="0.5" transform="rotate(0 1235.7 351.4)"/><rect x="1457.4" y="267.4" width="10.9" height="9.8" fill="#d9cfc7" stroke="#c4b8ae" stroke-width="0.5" transform="rotate(0 1457.4 267.4)"/><rect x="1148.1" y="216.4" width="11.5" height="7.5" fill="#d9cfc7" stroke="#c4b8ae" stroke-width="0.5" transform="rotate(-30 1148.1 216.4)"/><rect x="1125.6" y="298.0" width="10.1" height="4.1" fill="#d9cfc7" stroke="#c4b8ae" stroke-width="0.5" transform="rotate(25 1125.6 298.0)"/><rect x="1473.3" y="325.8" width="5.5" height="6.5" fill="#d9cfc7" stroke="#c4b8ae" stroke-width="0.5" transform="rotate(-30 1473.3 325.8)"/><rect x="1168.0" y="439.7" width="11.2" height="9.9" fill="#d9cfc7" stroke="#c4b8ae" stroke-width="0.5" transform="rotate(40 1168.0 439.7)"/><rect x="1255.6" y="377.8" width="5.1" height="9.6" fill="#d9cfc7" stroke="#c4b8ae" stroke-width="0.5" transform="rotate(0 1255.6 377.8)"/><rect x="1460.5" y="315.8" width="8.3" height="8.3" fill="#d9cfc7" stroke="#c4b8ae" stroke-width="0.5" transform="rotate(25 1460.5 315.8)"/><rect x="1203.8" y="193.7" width="6.7" height="7.2" fill="#d9cfc7" stroke="#c4b8ae" stroke-width="0.5" transform="rotate(-30 1203.8 193.7)"/><rect x="1307.6" y="335.8" width="7.8" height="8.1" fill="#d9cfc7" stroke="#c4b8ae" stroke-width="0.5" transform="rotate(0 1307.6 335.8)"/><rect x="1241.7" y="442.1" width="11.5" height="6.9" fill="#d9cfc7" stroke="#c4b8ae" stroke-width="0.5" transform="rotate(-30 1241.7 442.1)"/><rect x="1127.7" y="383.0" width="10.2" height="8.6" fill="#d9cfc7" stroke="#c4b8ae" stroke-width="0.5" transform="rotate(25 1127.7 383.0)"/><rect x="1200.7" y="446.4" width="8.2" height="9.9" fill="#d9cfc7" stroke="#c4b8ae" stroke-width="0.5" transform="rotate(-30 1200.7 446.4)"/><rect x="1445.3" y="236.6" width="9.3" height="5.2" fill="#d9cfc7" stroke="#c4b8ae" stroke-width="0.5" transform="rotate(-30 1445.3 236.6)"/><rect x="1256.7" y="436.9" width="10.9" height="9.4" fill="#d9cfc7" stroke="#c4b8ae" stroke-width="0.5" transform="rotate(-30 1256.7 436.9)"/><rect x="1395.7" y="331.2" width="10.7" height="6.6" fill="#d9cfc7" stroke="#c4b8ae" stroke-width="0.5" transform="rotate(40 1395.7 331.2)"/><rect x="1323.7" y="273.8" width="11.3" height="4.2" fill="#d9cfc7" stroke="#c4b8ae" stroke-width="0.5" transform="rotate(-30 1323.7 273.8)"/><rect x="1156.8" y="453.2" width="8.2" height="9.2" fill="#d9cfc7" stroke="#c4b8ae" stroke-width="0.5" transform="rotate(-30 1156.8 453.2)"/><rect x="1240.7" y="341.7" width="12.3" height="6.3" fill="#d9cfc7" stroke="#c4b8ae" stroke-width="0.5" transform="rotate(-30 1240.7 341.7)"/><rect x="1138.8" y="194.6" width="10.7" height="5.5" fill="#d9cfc7" stroke="#c4b8ae" stroke-width="0.5" transform="rotate(25 1138.8 194.6)"/><rect x="1227.9" y="500.3" width="10.1" height="5.8" fill="#d9cfc7" stroke="#c4b8ae" stroke-width="0.5" transform="rotate(40 1227.9 500.3)"/><rect x="1234.8" y="421.8" width="6.3" height="9.2" fill="#d9cfc7" stroke="#c4b8ae" stroke-width="0.5" transform="rotate(25 1234.8 421.8)"/><rect x="1168.6" y="187.6" width="12.0" height="5.5" fill="#d9cfc7" stroke="#c4b8ae" stroke-width="0.5" transform="rotate(25 1168.6 187.6)"/><rect x="1475.3" y="433.4" width="8.6" height="7.5" fill="#d9cfc7" stroke="#c4b8ae" stroke-width="0.5" transform="rotate(-30 1475.3 433.4)"/><rect x="1562.3" y="490.5" width="11.2" height="6.6" fill="#d9cfc7" stroke="#c4b8ae" stroke-width="0.5" transform="rotate(40 1562.3 490.5)"/><rect x="1135.6" y="232.2" width="12.8" height="4.1" fill="#d9cfc7" stroke="#c4b8ae" stroke-width="0.5" transform="rotate(25 1135.6 232.2)"/><rect x="1200.8" y="490.7" width="5.8" height="5.0" fill="#d9cfc7" stroke="#c4b8ae" stroke-width="0.5" transform="rotate(40 1200.8 490.7)"/><rect x="1169.6" y="326.6" width="12.3" height="8.3" fill="#d9cfc7" stroke="#c4b8ae" stroke-width="0.5" transform="rotate(25 1169.6 326.6)"/><rect x="1531.7" y="471.4" width="9.0" height="5.4" fill="#d9cfc7" stroke="#c4b8ae" stroke-width="0.5" transform="rotate(40 1531.7 471.4)"/><rect x="1483.4" y="487.6" width="12.2" height="4.4" fill="#d9cfc7" stroke="#c4b8ae" stroke-width="0.5" transform="rotate(-30 1483.4 487.6)"/><rect x="1185.2" y="387.8" width="6.1" height="6.6" fill="#d9cfc7" stroke="#c4b8ae" stroke-width="0.5" transform="rotate(-30 1185.2 387.8)"/><rect x="1238.5" y="409.7" width="10.1" height="7.3" fill="#d9cfc7" stroke="#c4b8ae" stroke-width="0.5" transform="rotate(-30 1238.5 409.7)"/><rect x="1396.4" y="533.6" width="12.7" height="4.5" fill="#d9cfc7" stroke="#c4b8ae" stroke-width="0.5" transform="rotate(-30 1396.4 533.6)"/><rect x="1160.4" y="477.3" width="5.1" height="5.6" fill="#d9cfc7" stroke="#c4b8ae" stroke-width="0.5" transform="rotate(-30 1160.4 477.3)"/><rect x="1224.4" y="205.8" width="11.3" height="9.7" fill="#d9cfc7" stroke="#c4b8ae" stroke-width="0.5" transform="rotate(25 1224.4 205.8)"/><rect x="1128.5" y="470.9" width="10.2" height="7.3" fill="#d9cfc7" stroke="#c4b8ae" stroke-width="0.5" transform="rotate(0 1128.5 470.9)"/><rect x="1293.7" y="355.9" width="12.9" height="8.5" fill="#d9cfc7" stroke="#c4b8ae" stroke-width="0.5" transform="rotate(25 1293.7 355.9)"/><rect x="1329.0" y="317.8" width="8.4" height="9.8" fill="#d9cfc7" stroke="#c4b8ae" stroke-width="0.5" transform="rotate(40 1329.0 317.8)"/><rect x="1586.4" y="448.9" width="9.0" height="9.9" fill="#d9cfc7" stroke="#c4b8ae" stroke-width="0.5" transform="rotate(0 1586.4 448.9)"/><rect x="1140.4" y="482.6" width="8.2" height="7.4" fill="#d9cfc7" stroke="#c4b8ae" stroke-width="0.5" transform="rotate(40 1140.4 482.6)"/><rect x="1406.3" y="316.7" width="12.8" height="4.0" fill="#d9cfc7" stroke="#c4b8ae" stroke-width="0.5" transform="rotate(40 1406.3 316.7)"/><rect x="1386.2" y="431.2" width="13.0" height="5.4" fill="#d9cfc7" stroke="#c4b8ae" stroke-width="0.5" transform="rotate(40 1386.2 431.2)"/><rect x="1306.3" y="212.5" width="12.8" height="5.6" fill="#d9cfc7" stroke="#c4b8ae" stroke-width="0.5" transform="rotate(25 1306.3 212.5)"/><rect x="1160.1" y="516.1" width="10.3" height="9.5" fill="#d9cfc7" stroke="#c4b8ae" stroke-width="0.5" transform="rotate(25 1160.1 516.1)"/><rect x="1258.3" y="534.2" width="11.9" height="6.1" fill="#d9cfc7" stroke="#c4b8ae" stroke-width="0.5" transform="rotate(0 1258.3 534.2)"/><rect x="1368.9" y="277.6" width="6.1" height="9.6" fill="#d9cfc7" stroke="#c4b8ae" stroke-width="0.5" transform="rotate(0 1368.9 277.6)"/><rect x="1310.9" y="270.8" width="6.4" height="6.2" fill="#d9cfc7" stroke="#c4b8ae" stroke-width="0.5" transform="rotate(-30 1310.9 270.8)"/><rect x="1201.7" y="460.0" width="6.4" height="9.7" fill="#d9cfc7" stroke="#c4b8ae" stroke-width="0.5" transform="rotate(-30 1201.7 460.0)"/><rect x="1289.1" y="335.8" width="11.9" height="6.6" fill="#d9cfc7" stroke="#c4b8ae" stroke-width="0.5" transform="rotate(40 1289.1 335.8)"/><rect x="1202.4" y="290.1" width="5.8" height="6.1" fill="#d9cfc7" stroke="#c4b8ae" stroke-width="0.5" transform="rotate(0 1202.4 290.1)"/><rect x="1392.0" y="373.5" width="5.7" height="6.4" fill="#d9cfc7" stroke="#c4b8ae" stroke-width="0.5" transform="rotate(40 1392.0 373.5)"/><rect x="1481.6" y="372.0" width="8.8" height="8.8" fill="#d9cfc7" stroke="#c4b8ae" stroke-width="0.5" transform="rotate(0 1481.6 372.0)"/><rect x="1200.3" y="467.6" width="7.9" height="7.1" fill="#d9cfc7" stroke="#c4b8ae" stroke-width="0.5" transform="rotate(-30 1200.3 467.6)"/><rect x="1253.5" y="416.3" width="5.0" height="5.6" fill="#d9cfc7" stroke="#c4b8ae" stroke-width="0.5" transform="rotate(0 1253.5 416.3)"/><rect x="1215.1" y="483.3" width="7.2" height="5.9" fill="#d9cfc7" stroke="#c4b8ae" stroke-width="0.5" transform="rotate(-30 1215.1 483.3)"/><rect x="1259.9" y="367.4" width="9.2" height="7.0" fill="#d9cfc7" stroke="#c4b8ae" stroke-width="0.5" transform="rotate(-30 1259.9 367.4)"/><rect x="1227.1" y="361.2" width="11.3" height="7.7" fill="#d9cfc7" stroke="#c4b8ae" stroke-width="0.5" transform="rotate(25 1227.1 361.2)"/><rect x="1144.5" y="497.8" width="12.8" height="6.6" fill="#d9cfc7" stroke="#c4b8ae" stroke-width="0.5" transform="rotate(0 1144.5 497.8)"/><rect x="1466.5" y="322.4" width="5.6" height="8.5" fill="#d9cfc7" stroke="#c4b8ae" stroke-width="0.5" transform="rotate(40 1466.5 322.4)"/><rect x="1325.9" y="357.7" width="12.5" height="7.9" fill="#d9cfc7" stroke="#c4b8ae" stroke-width="0.5" transform="rotate(-30 1325.9 357.7)"/><rect x="1178.6" y="419.3" width="12.5" height="8.2" fill="#d9cfc7" stroke="#c4b8ae" stroke-width="0.5" transform="rotate(40 1178.6 419.3)"/><rect x="1337.1" y="382.1" width="12.1" height="6.6" fill="#d9cfc7" stroke="#c4b8ae" stroke-width="0.5" transform="rotate(40 1337.1 382.1)"/><rect x="1192.8" y="497.7" width="5.1" height="5.4" fill="#d9cfc7" stroke="#c4b8ae" stroke-width="0.5" transform="rotate(-30 1192.8 497.7)"/><rect x="1330.3" y="202.8" width="10.4" height="7.3" fill="#d9cfc7" stroke="#c4b8ae" stroke-width="0.5" transform="rotate(40 1330.3 202.8)"/><rect x="1162.8" y="524.4" width="5.8" height="4.5" fill="#d9cfc7" stroke="#c4b8ae" stroke-width="0.5" transform="rotate(-30 1162.8 524.4)"/><rect x="1489.9" y="385.9" width="10.5" height="6.5" fill="#d9cfc7" stroke="#c4b8ae" stroke-width="0.5" transform="rotate(0 1489.9 385.9)"/><rect x="1195.4" y="354.5" width="5.4" height="7.8" fill="#d9cfc7" stroke="#c4b8ae" stroke-width="0.5" transform="rotate(25 1195.4 354.5)"/><rect x="1295.5" y="400.5" width="5.0" height="9.9" fill="#d9cfc7" stroke="#c4b8ae" stroke-width="0.5" transform="rotate(25 1295.5 400.5)"/><rect x="1391.3" y="221.9" width="8.1" height="8.0" fill="#d9cfc7" stroke="#c4b8ae" stroke-width="0.5" transform="rotate(25 1391.3 221.9)"/><rect x="1409.7" y="397.5" width="8.4" height="4.3" fill="#d9cfc7" stroke="#c4b8ae" stroke-width="0.5" transform="rotate(25 1409.7 397.5)"/><rect x="1251.2" y="343.4" width="8.5" height="7.2" fill="#d9cfc7" stroke="#c4b8ae" stroke-width="0.5" transform="rotate(25 1251.2 343.4)"/><rect x="1227.2" y="207.6" width="9.3" height="6.2" fill="#d9cfc7" stroke="#c4b8ae" stroke-width="0.5" transform="rotate(40 1227.2 207.6)"/><rect x="1461.7" y="479.9" width="6.1" height="9.6" fill="#d9cfc7" stroke="#c4b8ae" stroke-width="0.5" transform="rotate(25 1461.7 479.9)"/><rect x="1149.4" y="316.1" width="9.3" height="6.5" fill="#d9cfc7" stroke="#c4b8ae" stroke-width="0.5" transform="rotate(0 1149.4 316.1)"/><rect x="1349.6" y="269.0" width="6.7" height="9.8" fill="#d9cfc7" stroke="#c4b8ae" stroke-width="0.5" transform="rotate(0 1349.6 269.0)"/><rect x="1160.1" y="432.9" width="6.4" height="9.5" fill="#d9cfc7" stroke="#c4b8ae" stroke-width="0.5" transform="rotate(0 1160.1 432.9)"/><rect x="1503.4" y="253.9" width="6.8" height="8.3" fill="#d9cfc7" stroke="#c4b8ae" stroke-width="0.5" transform="rotate(25 1503.4 253.9)"/><rect x="1536.8" y="407.3" width="11.2" height="8.3" fill="#d9cfc7" stroke="#c4b8ae" stroke-width="0.5" transform="rotate(0 1536.8 407.3)"/><rect x="1175.0" y="225.4" width="11.3" height="9.7" fill="#d9cfc7" stroke="#c4b8ae" stroke-width="0.5" transform="rotate(40 1175.0 225.4)"/><rect x="1238.5" y="531.1" width="10.6" height="6.7" fill="#d9cfc7" stroke="#c4b8ae" stroke-width="0.5" transform="rotate(40 1238.5 531.1)"/><rect x="1202.9" y="209.5" width="10.6" height="4.3" fill="#d9cfc7" stroke="#c4b8ae" stroke-width="0.5" transform="rotate(40 1202.9 209.5)"/><rect x="1274.5" y="282.3" width="9.7" height="5.9" fill="#d9cfc7" stroke="#c4b8ae" stroke-width="0.5" transform="rotate(0 1274.5 282.3)"/><rect x="1406.1" y="274.8" width="12.6" height="8.0" fill="#d9cfc7" stroke="#c4b8ae" stroke-width="0.5" transform="rotate(-30 1406.1 274.8)"/><rect x="1325.0" y="199.6" width="8.0" height="7.8" fill="#d9cfc7" stroke="#c4b8ae" stroke-width="0.5" transform="rotate(-30 1325.0 199.6)"/><rect x="1460.9" y="473.4" width="6.6" height="4.9" fill="#d9cfc7" stroke="#c4b8ae" stroke-width="0.5" transform="rotate(-30 1460.9 473.4)"/><rect x="1344.8" y="467.1" width="5.9" height="9.0" fill="#d9cfc7" stroke="#c4b8ae" stroke-width="0.5" transform="rotate(-30 1344.8 467.1)"/><rect x="1462.3" y="273.1" width="10.2" height="7.1" fill="#d9cfc7" stroke="#c4b8ae" stroke-width="0.5" transform="rotate(-30 1462.3 273.1)"/><rect x="1273.0" y="330.1" width="11.0" height="7.0" fill="#d9cfc7" stroke="#c4b8ae" stroke-width="0.5" transform="rotate(-30 1273.0 330.1)"/><rect x="1226.5" y="301.9" width="7.4" height="7.5" fill="#d9cfc7" stroke="#c4b8ae" stroke-width="0.5" transform="rotate(-30 1226.5 301.9)"/><rect x="1226.9" y="380.8" width="11.1" height="8.6" fill="#d9cfc7" stroke="#c4b8ae" stroke-width="0.5" transform="rotate(-30 1226.9 380.8)"/><rect x="1421.7" y="310.1" width="9.6" height="4.6" fill="#d9cfc7" stroke="#c4b8ae" stroke-width="0.5" transform="rotate(-30 1421.7 310.1)"/><rect x="1148.8" y="323.9" width="8.6" height="5.5" fill="#d9cfc7" stroke="#c4b8ae" stroke-width="0.5" transform="rotate(25 1148.8 323.9)"/><rect x="1215.3" y="512.1" width="7.4" height="4.4" fill="#d9cfc7" stroke="#c4b8ae" stroke-width="0.5" transform="rotate(0 1215.3 512.1)"/><rect x="1357.8" y="495.2" width="5.9" height="5.0" fill="#d9cfc7" stroke="#c4b8ae" stroke-width="0.5" transform="rotate(40 1357.8 495.2)"/><rect x="1173.2" y="453.8" width="6.1" height="7.5" fill="#d9cfc7" stroke="#c4b8ae" stroke-width="0.5" transform="rotate(25 1173.2 453.8)"/><rect x="1162.3" y="487.2" width="10.9" height="6.2" fill="#d9cfc7" stroke="#c4b8ae" stroke-width="0.5" transform="rotate(-30 1162.3 487.2)"/><rect x="1294.1" y="534.7" width="12.0" height="6.9" fill="#d9cfc7" stroke="#c4b8ae" stroke-width="0.5" transform="rotate(-30 1294.1 534.7)"/><rect x="1257.8" y="230.1" width="6.9" height="4.9" fill="#d9cfc7" stroke="#c4b8ae" stroke-width="0.5" transform="rotate(25 1257.8 230.1)"/><rect x="1399.6" y="234.7" width="8.7" height="5.0" fill="#d9cfc7" stroke="#c4b8ae" stroke-width="0.5" transform="rotate(0 1399.6 234.7)"/><rect x="1144.7" y="292.1" width="12.6" height="5.7" fill="#d9cfc7" stroke="#c4b8ae" stroke-width="0.5" transform="rotate(0 1144.7 292.1)"/><rect x="1228.0" y="238.6" width="6.9" height="9.2" fill="#d9cfc7" stroke="#c4b8ae" stroke-width="0.5" transform="rotate(0 1228.0 238.6)"/><rect x="1246.7" y="225.3" width="5.8" height="4.3" fill="#d9cfc7" stroke="#c4b8ae" stroke-width="0.5" transform="rotate(0 1246.7 225.3)"/><rect x="1231.8" y="493.9" width="5.7" height="5.0" fill="#d9cfc7" stroke="#c4b8ae" stroke-width="0.5" transform="rotate(25 1231.8 493.9)"/><rect x="1179.6" y="421.9" width="6.0" height="8.0" fill="#d9cfc7" stroke="#c4b8ae" stroke-width="0.5" transform="rotate(-30 1179.6 421.9)"/><rect x="1243.7" y="432.5" width="11.3" height="8.3" fill="#d9cfc7" stroke="#c4b8ae" stroke-width="0.5" transform="rotate(-30 1243.7 432.5)"/><rect x="1173.6" y="275.0" width="11.2" height="5.0" fill="#d9cfc7" stroke="#c4b8ae" stroke-width="0.5" transform="rotate(25 1173.6 275.0)"/><rect x="1299.5" y="521.6" width="8.7" height="9.5" fill="#d9cfc7" stroke="#c4b8ae" stroke-width="0.5" transform="rotate(-30 1299.5 521.6)"/><rect x="1139.6" y="512.5" width="6.2" height="7.1" fill="#d9cfc7" stroke="#c4b8ae" stroke-width="0.5" transform="rotate(-30 1139.6 512.5)"/><rect x="1201.0" y="328.5" width="6.1" height="5.2" fill="#d9cfc7" stroke="#c4b8ae" stroke-width="0.5" transform="rotate(-30 1201.0 328.5)"/><rect x="1477.0" y="479.4" width="5.0" height="9.3" fill="#d9cfc7" stroke="#c4b8ae" stroke-width="0.5" transform="rotate(-30 1477.0 479.4)"/><rect x="1379.6" y="508.6" width="12.3" height="8.5" fill="#d9cfc7" stroke="#c4b8ae" stroke-width="0.5" transform="rotate(-30 1379.6 508.6)"/><rect x="1225.7" y="444.8" width="11.8" height="8.7" fill="#d9cfc7" stroke="#c4b8ae" stroke-width="0.5" transform="rotate(-30 1225.7 444.8)"/><rect x="1379.1" y="293.4" width="10.5" height="5.8" fill="#d9cfc7" stroke="#c4b8ae" stroke-width="0.5" transform="rotate(-30 1379.1 293.4)"/><rect x="1427.6" y="366.2" width="11.6" height="8.7" fill="#d9cfc7" stroke="#c4b8ae" stroke-width="0.5" transform="rotate(0 1427.6 366.2)"/><rect x="1242.8" y="268.0" width="8.7" height="5.4" fill="#d9cfc7" stroke="#c4b8ae" stroke-width="0.5" transform="rotate(40 1242.8 268.0)"/><rect x="1148.9" y="460.7" width="8.2" height="7.8" fill="#d9cfc7" stroke="#c4b8ae" stroke-width="0.5" transform="rotate(25 1148.9 460.7)"/><rect x="1125.3" y="388.5" width="5.1" height="4.7" fill="#d9cfc7" stroke="#c4b8ae" stroke-width="0.5" transform="rotate(40 1125.3 388.5)"/><rect x="1339.0" y="436.4" width="8.7" height="6.0" fill="#d9cfc7" stroke="#c4b8ae" stroke-width="0.5" transform="rotate(-30 1339.0 436.4)"/><rect x="1165.9" y="349.1" width="8.7" height="4.2" fill="#d9cfc7" stroke="#c4b8ae" stroke-width="0.5" transform="rotate(25 1165.9 349.1)"/><rect x="1168.4" y="298.2" width="10.6" height="6.7" fill="#d9cfc7" stroke="#c4b8ae" stroke-width="0.5" transform="rotate(0 1168.4 298.2)"/><rect x="1144.4" y="526.7" width="6.5" height="5.6" fill="#d9cfc7" stroke="#c4b8ae" stroke-width="0.5" transform="rotate(-30 1144.4 526.7)"/><rect x="1310.0" y="278.8" width="12.1" height="7.7" fill="#d9cfc7" stroke="#c4b8ae" stroke-width="0.5" transform="rotate(40 1310.0 278.8)"/><rect x="1282.2" y="317.9" width="12.0" height="8.7" fill="#d9cfc7" stroke="#c4b8ae" stroke-width="0.5" transform="rotate(0 1282.2 317.9)"/><rect x="1220.8" y="529.9" width="6.3" height="7.2" fill="#d9cfc7" stroke="#c4b8ae" stroke-width="0.5" transform="rotate(-30 1220.8 529.9)"/><rect x="1414.7" y="458.1" width="10.9" height="8.1" fill="#d9cfc7" stroke="#c4b8ae" stroke-width="0.5" transform="rotate(0 1414.7 458.1)"/><rect x="1192.7" y="497.9" width="7.0" height="6.5" fill="#d9cfc7" stroke="#c4b8ae" stroke-width="0.5" transform="rotate(0 1192.7 497.9)"/><rect x="1309.7" y="459.7" width="10.1" height="6.3" fill="#d9cfc7" stroke="#c4b8ae" stroke-width="0.5" transform="rotate(0 1309.7 459.7)"/><rect x="1377.6" y="472.3" width="5.1" height="9.3" fill="#d9cfc7" stroke="#c4b8ae" stroke-width="0.5" transform="rotate(-30 1377.6 472.3)"/><rect x="1410.6" y="371.4" width="11.0" height="9.3" fill="#d9cfc7" stroke="#c4b8ae" stroke-width="0.5" transform="rotate(0 1410.6 371.4)"/><rect x="1197.6" y="429.2" width="9.6" height="4.3" fill="#d9cfc7" stroke="#c4b8ae" stroke-width="0.5" transform="rotate(40 1197.6 429.2)"/><rect x="1212.6" y="430.1" width="12.9" height="7.8" fill="#d9cfc7" stroke="#c4b8ae" stroke-width="0.5" transform="rotate(-30 1212.6 430.1)"/><rect x="1273.2" y="411.3" width="8.4" height="9.9" fill="#d9cfc7" stroke="#c4b8ae" stroke-width="0.5" transform="rotate(-30 1273.2 411.3)"/><rect x="1266.2" y="253.0" width="9.6" height="9.0" fill="#d9cfc7" stroke="#c4b8ae" stroke-width="0.5" transform="rotate(0 1266.2 253.0)"/><rect x="1302.2" y="243.9" width="9.1" height="9.3" fill="#d9cfc7" stroke="#c4b8ae" stroke-width="0.5" transform="rotate(-30 1302.2 243.9)"/><rect x="1281.9" y="401.5" width="10.5" height="9.4" fill="#d9cfc7" stroke="#c4b8ae" stroke-width="0.5" transform="rotate(0 1281.9 401.5)"/><rect x="1276.6" y="344.5" width="12.7" height="9.8" fill="#d9cfc7" stroke="#c4b8ae" stroke-width="0.5" transform="rotate(-30 1276.6 344.5)"/><rect x="1474.7" y="335.8" width="7.6" height="8.8" fill="#d9cfc7" stroke="#c4b8ae" stroke-width="0.5" transform="rotate(40 1474.7 335.8)"/><rect x="1260.7" y="270.4" width="12.3" height="6.7" fill="#d9cfc7" stroke="#c4b8ae" stroke-width="0.5" transform="rotate(40 1260.7 270.4)"/><rect x="1201.5" y="499.4" width="8.8" height="7.4" fill="#d9cfc7" stroke="#c4b8ae" stroke-width="0.5" transform="rotate(40 1201.5 499.4)"/><rect x="1448.2" y="293.5" width="11.2" height="4.2" fill="#d9cfc7" stroke="#c4b8ae" stroke-width="0.5" transform="rotate(0 1448.2 293.5)"/><rect x="1280.7" y="435.3" width="7.9" height="9.9" fill="#d9cfc7" stroke="#c4b8ae" stroke-width="0.5" transform="rotate(-30 1280.7 435.3)"/><rect x="1496.0" y="493.3" width="8.2" height="9.0" fill="#d9cfc7" stroke="#c4b8ae" stroke-width="0.5" transform="rotate(25 1496.0 493.3)"/><rect x="1329.4" y="392.9" width="7.7" height="9.2" fill="#d9cfc7" stroke="#c4b8ae" stroke-width="0.5" transform="rotate(-30 1329.4 392.9)"/><rect x="1397.4" y="401.8" width="10.4" height="9.4" fill="#d9cfc7" stroke="#c4b8ae" stroke-width="0.5" transform="rotate(-30 1397.4 401.8)"/><rect x="1232.9" y="468.3" width="12.4" height="4.4" fill="#d9cfc7" stroke="#c4b8ae" stroke-width="0.5" transform="rotate(-30 1232.9 468.3)"/><rect x="1331.3" y="423.5" width="7.2" height="9.1" fill="#d9cfc7" stroke="#c4b8ae" stroke-width="0.5" transform="rotate(-30 1331.3 423.5)"/><rect x="1201.0" y="464.0" width="11.0" height="7.0" fill="#d9cfc7" stroke="#c4b8ae" stroke-width="0.5" transform="rotate(25 1201.0 464.0)"/><rect x="1264.9" y="213.9" width="9.8" height="8.9" fill="#d9cfc7" stroke="#c4b8ae" stroke-width="0.5" transform="rotate(25 1264.9 213.9)"/><rect x="1308.6" y="421.6" width="12.1" height="4.5" fill="#d9cfc7" stroke="#c4b8ae" stroke-width="0.5" transform="rotate(-30 1308.6 421.6)"/><rect x="1290.8" y="187.4" width="10.0" height="4.8" fill="#d9cfc7" stroke="#c4b8ae" stroke-width="0.5" transform="rotate(25 1290.8 187.4)"/><rect x="1364.3" y="386.3" width="7.4" height="9.6" fill="#d9cfc7" stroke="#c4b8ae" stroke-width="0.5" transform="rotate(25 1364.3 386.3)"/><rect x="1396.8" y="281.3" width="9.5" height="8.9" fill="#d9cfc7" stroke="#c4b8ae" stroke-width="0.5" transform="rotate(25 1396.8 281.3)"/><rect x="1138.7" y="508.1" width="5.2" height="7.0" fill="#d9cfc7" stroke="#c4b8ae" stroke-width="0.5" transform="rotate(40 1138.7 508.1)"/><rect x="1169.2" y="232.5" width="8.1" height="9.7" fill="#d9cfc7" stroke="#c4b8ae" stroke-width="0.5" transform="rotate(40 1169.2 232.5)"/><rect x="1239.8" y="545.2" width="13.0" height="8.8" fill="#d9cfc7" stroke="#c4b8ae" stroke-width="0.5" transform="rotate(0 1239.8 545.2)"/><rect x="1369.6" y="241.4" width="8.6" height="8.1" fill="#d9cfc7" stroke="#c4b8ae" stroke-width="0.5" transform="rotate(0 1369.6 241.4)"/><rect x="1357.6" y="327.5" width="6.5" height="6.4" fill="#d9cfc7" stroke="#c4b8ae" stroke-width="0.5" transform="rotate(25 1357.6 327.5)"/><rect x="1131.5" y="507.9" width="11.3" height="8.5" fill="#d9cfc7" stroke="#c4b8ae" stroke-width="0.5" transform="rotate(25 1131.5 507.9)"/><rect x="1226.8" y="498.8" width="11.7" height="5.8" fill="#d9cfc7" stroke="#c4b8ae" stroke-width="0.5" transform="rotate(-30 1226.8 498.8)"/><rect x="1155.4" y="271.1" width="5.1" height="9.2" fill="#d9cfc7" stroke="#c4b8ae" stroke-width="0.5" transform="rotate(0 1155.4 271.1)"/><rect x="1259.1" y="333.1" width="6.3" height="7.8" fill="#d9cfc7" stroke="#c4b8ae" stroke-width="0.5" transform="rotate(25 1259.1 333.1)"/><rect x="1280.8" y="204.3" width="6.4" height="6.1" fill="#d9cfc7" stroke="#c4b8ae" stroke-width="0.5" transform="rotate(-30 1280.8 204.3)"/><rect x="1178.1" y="249.7" width="11.2" height="6.8" fill="#d9cfc7" stroke="#c4b8ae" stroke-width="0.5" transform="rotate(-30 1178.1 249.7)"/><rect x="1413.7" y="396.3" width="6.7" height="5.5" fill="#d9cfc7" stroke="#c4b8ae" stroke-width="0.5" transform="rotate(-30 1413.7 396.3)"/><rect x="1497.5" y="252.6" width="12.2" height="6.6" fill="#d9cfc7" stroke="#c4b8ae" stroke-width="0.5" transform="rotate(-30 1497.5 252.6)"/><rect x="1129.6" y="274.6" width="9.7" height="6.3" fill="#d9cfc7" stroke="#c4b8ae" stroke-width="0.5" transform="rotate(-30 1129.6 274.6)"/><rect x="1411.7" y="377.2" width="11.2" height="9.4" fill="#d9cfc7" stroke="#c4b8ae" stroke-width="0.5" transform="rotate(-30 1411.7 377.2)"/><rect x="1176.7" y="430.8" width="6.0" height="5.2" fill="#d9cfc7" stroke="#c4b8ae" stroke-width="0.5" transform="rotate(40 1176.7 430.8)"/><rect x="1435.6" y="235.0" width="9.0" height="6.3" fill="#d9cfc7" stroke="#c4b8ae" stroke-width="0.5" transform="rotate(-30 1435.6 235.0)"/><rect x="1535.8" y="554.1" width="5.0" height="7.4" fill="#d9cfc7" stroke="#c4b8ae" stroke-width="0.5" transform="rotate(-30 1535.8 554.1)"/><rect x="1450.1" y="493.0" width="5.8" height="9.9" fill="#d9cfc7" stroke="#c4b8ae" stroke-width="0.5" transform="rotate(-30 1450.1 493.0)"/><rect x="1142.6" y="206.2" width="6.9" height="9.6" fill="#d9cfc7" stroke="#c4b8ae" stroke-width="0.5" transform="rotate(-30 1142.6 206.2)"/><rect x="1421.3" y="357.3" width="5.3" height="6.8" fill="#d9cfc7" stroke="#c4b8ae" stroke-width="0.5" transform="rotate(40 1421.3 357.3)"/><rect x="1489.4" y="263.4" width="11.5" height="5.0" fill="#d9cfc7" stroke="#c4b8ae" stroke-width="0.5" transform="rotate(0 1489.4 263.4)"/><rect x="1289.8" y="397.1" width="12.7" height="6.3" fill="#d9cfc7" stroke="#c4b8ae" stroke-width="0.5" transform="rotate(-30 1289.8 397.1)"/><rect x="1160.2" y="198.3" width="10.2" height="4.5" fill="#d9cfc7" stroke="#c4b8ae" stroke-width="0.5" transform="rotate(0 1160.2 198.3)"/><rect x="1163.1" y="208.5" width="9.4" height="5.7" fill="#d9cfc7" stroke="#c4b8ae" stroke-width="0.5" transform="rotate(40 1163.1 208.5)"/><rect x="1219.7" y="395.9" width="11.7" height="5.3" fill="#d9cfc7" stroke="#c4b8ae" stroke-width="0.5" transform="rotate(-30 1219.7 395.9)"/><rect x="1167.6" y="401.1" width="10.4" height="4.5" fill="#d9cfc7" stroke="#c4b8ae" stroke-width="0.5" transform="rotate(-30 1167.6 401.1)"/><rect x="1561.5" y="537.2" width="7.9" height="5.8" fill="#d9cfc7" stroke="#c4b8ae" stroke-width="0.5" transform="rotate(25 1561.5 537.2)"/><rect x="1199.3" y="437.1" width="12.8" height="8.6" fill="#d9cfc7" stroke="#c4b8ae" stroke-width="0.5" transform="rotate(-30 1199.3 437.1)"/><rect x="1163.7" y="204.0" width="10.5" height="8.6" fill="#d9cfc7" stroke="#c4b8ae" stroke-width="0.5" transform="rotate(-30 1163.7 204.0)"/><rect x="1391.4" y="374.6" width="8.3" height="7.7" fill="#d9cfc7" stroke="#c4b8ae" stroke-width="0.5" transform="rotate(-30 1391.4 374.6)"/><rect x="1138.8" y="467.9" width="11.8" height="6.6" fill="#d9cfc7" stroke="#c4b8ae" stroke-width="0.5" transform="rotate(-30 1138.8 467.9)"/><rect x="1487.6" y="290.6" width="7.4" height="6.1" fill="#d9cfc7" stroke="#c4b8ae" stroke-width="0.5" transform="rotate(25 1487.6 290.6)"/><rect x="1320.3" y="253.1" width="6.3" height="9.7" fill="#d9cfc7" stroke="#c4b8ae" stroke-width="0.5" transform="rotate(40 1320.3 253.1)"/><rect x="1516.4" y="532.4" width="13.0" height="8.5" fill="#d9cfc7" stroke="#c4b8ae" stroke-width="0.5" transform="rotate(25 1516.4 532.4)"/><rect x="1298.8" y="411.2" width="7.9" height="8.9" fill="#d9cfc7" stroke="#c4b8ae" stroke-width="0.5" transform="rotate(-30 1298.8 411.2)"/><rect x="1533.0" y="406.3" width="11.6" height="5.9" fill="#d9cfc7" stroke="#c4b8ae" stroke-width="0.5" transform="rotate(25 1533.0 406.3)"/><rect x="1312.4" y="408.4" width="12.7" height="5.0" fill="#d9cfc7" stroke="#c4b8ae" stroke-width="0.5" transform="rotate(0 1312.4 408.4)"/><rect x="1150.6" y="460.7" width="7.0" height="9.5" fill="#d9cfc7" stroke="#c4b8ae" stroke-width="0.5" transform="rotate(0 1150.6 460.7)"/><rect x="1232.6" y="305.0" width="12.3" height="4.1" fill="#d9cfc7" stroke="#c4b8ae" stroke-width="0.5" transform="rotate(25 1232.6 305.0)"/><rect x="1345.6" y="235.0" width="12.6" height="7.7" fill="#d9cfc7" stroke="#c4b8ae" stroke-width="0.5" transform="rotate(0 1345.6 235.0)"/><rect x="1137.3" y="472.1" width="6.7" height="5.6" fill="#d9cfc7" stroke="#c4b8ae" stroke-width="0.5" transform="rotate(0 1137.3 472.1)"/><rect x="1196.3" y="214.7" width="5.5" height="6.3" fill="#d9cfc7" stroke="#c4b8ae" stroke-width="0.5" transform="rotate(-30 1196.3 214.7)"/><rect x="1156.0" y="213.7" width="5.1" height="6.2" fill="#d9cfc7" stroke="#c4b8ae" stroke-width="0.5" transform="rotate(-30 1156.0 213.7)"/><rect x="1410.6" y="485.1" width="10.2" height="7.1" fill="#d9cfc7" stroke="#c4b8ae" stroke-width="0.5" transform="rotate(25 1410.6 485.1)"/><rect x="1254.5" y="349.4" width="10.6" height="5.0" fill="#d9cfc7" stroke="#c4b8ae" stroke-width="0.5" transform="rotate(-30 1254.5 349.4)"/><rect x="1229.3" y="346.6" width="11.3" height="4.6" fill="#d9cfc7" stroke="#c4b8ae" stroke-width="0.5" transform="rotate(-30 1229.3 346.6)"/><rect x="1128.1" y="264.6" width="12.2" height="4.9" fill="#d9cfc7" stroke="#c4b8ae" stroke-width="0.5" transform="rotate(0 1128.1 264.6)"/><rect x="1284.0" y="294.9" width="5.4" height="6.9" fill="#d9cfc7" stroke="#c4b8ae" stroke-width="0.5" transform="rotate(-30 1284.0 294.9)"/><rect x="1320.6" y="456.0" width="9.6" height="5.3" fill="#d9cfc7" stroke="#c4b8ae" stroke-width="0.5" transform="rotate(-30 1320.6 456.0)"/><rect x="1275.7" y="297.1" width="12.4" height="9.6" fill="#d9cfc7" stroke="#c4b8ae" stroke-width="0.5" transform="rotate(25 1275.7 297.1)"/><rect x="1310.6" y="485.2" width="6.1" height="8.7" fill="#d9cfc7" stroke="#c4b8ae" stroke-width="0.5" transform="rotate(25 1310.6 485.2)"/><rect x="1314.2" y="254.8" width="10.3" height="9.2" fill="#d9cfc7" stroke="#c4b8ae" stroke-width="0.5" transform="rotate(-30 1314.2 254.8)"/><rect x="1270.2" y="343.6" width="11.1" height="5.3" fill="#d9cfc7" stroke="#c4b8ae" stroke-width="0.5" transform="rotate(-30 1270.2 343.6)"/><rect x="1126.9" y="227.2" width="8.0" height="6.2" fill="#d9cfc7" stroke="#c4b8ae" stroke-width="0.5" transform="rotate(25 1126.9 227.2)"/><rect x="1138.2" y="367.5" width="5.9" height="6.8" fill="#d9cfc7" stroke="#c4b8ae" stroke-width="0.5" transform="rotate(40 1138.2 367.5)"/><rect x="1171.4" y="234.8" width="8.8" height="5.0" fill="#d9cfc7" stroke="#c4b8ae" stroke-width="0.5" transform="rotate(-30 1171.4 234.8)"/><rect x="1342.7" y="211.1" width="6.5" height="5.6" fill="#d9cfc7" stroke="#c4b8ae" stroke-width="0.5" transform="rotate(40 1342.7 211.1)"/><rect x="1159.9" y="278.1" width="11.0" height="7.4" fill="#d9cfc7" stroke="#c4b8ae" stroke-width="0.5" transform="rotate(40 1159.9 278.1)"/><rect x="1246.7" y="256.6" width="11.9" height="5.3" fill="#d9cfc7" stroke="#c4b8ae" stroke-width="0.5" transform="rotate(-30 1246.7 256.6)"/><rect x="1369.3" y="380.0" width="12.6" height="8.7" fill="#d9cfc7" stroke="#c4b8ae" stroke-width="0.5" transform="rotate(-30 1369.3 380.0)"/><rect x="1161.4" y="373.5" width="7.5" height="5.2" fill="#d9cfc7" stroke="#c4b8ae" stroke-width="0.5" transform="rotate(25 1161.4 373.5)"/><rect x="1158.2" y="477.2" width="8.8" height="5.5" fill="#d9cfc7" stroke="#c4b8ae" stroke-width="0.5" transform="rotate(0 1158.2 477.2)"/><rect x="1128.6" y="456.3" width="9.1" height="4.1" fill="#d9cfc7" stroke="#c4b8ae" stroke-width="0.5" transform="rotate(40 1128.6 456.3)"/><rect x="1521.6" y="461.1" width="7.9" height="6.3" fill="#d9cfc7" stroke="#c4b8ae" stroke-width="0.5" transform="rotate(25 1521.6 461.1)"/><rect x="1235.0" y="200.9" width="8.5" height="4.8" fill="#d9cfc7" stroke="#c4b8ae" stroke-width="0.5" transform="rotate(-30 1235.0 200.9)"/><rect x="1280.1" y="316.0" width="6.6" height="4.4" fill="#d9cfc7" stroke="#c4b8ae" stroke-width="0.5" transform="rotate(-30 1280.1 316.0)"/><rect x="1243.3" y="383.5" width="9.1" height="9.7" fill="#d9cfc7" stroke="#c4b8ae" stroke-width="0.5" transform="rotate(40 1243.3 383.5)"/><rect x="1470.1" y="273.9" width="12.2" height="5.2" fill="#d9cfc7" stroke="#c4b8ae" stroke-width="0.5" transform="rotate(40 1470.1 273.9)"/><rect x="1333.0" y="328.1" width="10.3" height="4.1" fill="#d9cfc7" stroke="#c4b8ae" stroke-width="0.5" transform="rotate(25 1333.0 328.1)"/><rect x="1202.9" y="522.1" width="9.9" height="6.9" fill="#d9cfc7" stroke="#c4b8ae" stroke-width="0.5" transform="rotate(0 1202.9 522.1)"/><rect x="1490.3" y="243.0" width="6.9" height="4.7" fill="#d9cfc7" stroke="#c4b8ae" stroke-width="0.5" transform="rotate(40 1490.3 243.0)"/><rect x="1200.0" y="242.8" width="9.2" height="7.5" fill="#d9cfc7" stroke="#c4b8ae" stroke-width="0.5" transform="rotate(-30 1200.0 242.8)"/><rect x="1209.6" y="361.1" width="5.6" height="8.9" fill="#d9cfc7" stroke="#c4b8ae" stroke-width="0.5" transform="rotate(40 1209.6 361.1)"/><rect x="1253.6" y="422.1" width="6.8" height="4.9" fill="#d9cfc7" stroke="#c4b8ae" stroke-width="0.5" transform="rotate(25 1253.6 422.1)"/><rect x="1622.4" y="480.8" width="8.5" height="8.9" fill="#d9cfc7" stroke="#c4b8ae" stroke-width="0.5" transform="rotate(-30 1622.4 480.8)"/><rect x="1213.4" y="243.3" width="5.6" height="6.3" fill="#d9cfc7" stroke="#c4b8ae" stroke-width="0.5" transform="rotate(25 1213.4 243.3)"/><rect x="1183.2" y="286.9" width="10.3" height="7.5" fill="#d9cfc7" stroke="#c4b8ae" stroke-width="0.5" transform="rotate(25 1183.2 286.9)"/><rect x="1586.8" y="584.4" width="5.6" height="9.4" fill="#d9cfc7" stroke="#c4b8ae" stroke-width="0.5" transform="rotate(0 1586.8 584.4)"/><rect x="1455.0" y="356.6" width="12.7" height="5.5" fill="#d9cfc7" stroke="#c4b8ae" stroke-width="0.5" transform="rotate(-30 1455.0 356.6)"/><rect x="1232.6" y="321.8" width="12.4" height="6.7" fill="#d9cfc7" stroke="#c4b8ae" stroke-width="0.5" transform="rotate(25 1232.6 321.8)"/><rect x="1243.2" y="364.3" width="12.7" height="5.2" fill="#d9cfc7" stroke="#c4b8ae" stroke-width="0.5" transform="rotate(40 1243.2 364.3)"/><rect x="1329.9" y="241.4" width="11.0" height="6.2" fill="#d9cfc7" stroke="#c4b8ae" stroke-width="0.5" transform="rotate(25 1329.9 241.4)"/><rect x="1319.1" y="390.7" width="7.9" height="10.0" fill="#d9cfc7" stroke="#c4b8ae" stroke-width="0.5" transform="rotate(-30 1319.1 390.7)"/><rect x="1365.3" y="374.0" width="7.7" height="7.3" fill="#d9cfc7" stroke="#c4b8ae" stroke-width="0.5" transform="rotate(25 1365.3 374.0)"/><rect x="1486.5" y="367.0" width="6.4" height="6.9" fill="#d9cfc7" stroke="#c4b8ae" stroke-width="0.5" transform="rotate(-30 1486.5 367.0)"/><rect x="1183.4" y="446.6" width="7.3" height="7.3" fill="#d9cfc7" stroke="#c4b8ae" stroke-width="0.5" transform="rotate(-30 1183.4 446.6)"/><rect x="1450.4" y="477.8" width="12.7" height="5.2" fill="#d9cfc7" stroke="#c4b8ae" stroke-width="0.5" transform="rotate(25 1450.4 477.8)"/><rect x="1457.7" y="253.7" width="5.5" height="6.7" fill="#d9cfc7" stroke="#c4b8ae" stroke-width="0.5" transform="rotate(0 1457.7 253.7)"/><rect x="1335.7" y="418.1" width="5.2" height="8.8" fill="#d9cfc7" stroke="#c4b8ae" stroke-width="0.5" transform="rotate(-30 1335.7 418.1)"/><rect x="1167.3" y="289.1" width="6.4" height="5.0" fill="#d9cfc7" stroke="#c4b8ae" stroke-width="0.5" transform="rotate(-30 1167.3 289.1)"/><rect x="1133.0" y="233.3" width="12.5" height="9.8" fill="#d9cfc7" stroke="#c4b8ae" stroke-width="0.5" transform="rotate(-30 1133.0 233.3)"/><rect x="1365.5" y="216.4" width="7.8" height="5.8" fill="#d9cfc7" stroke="#c4b8ae" stroke-width="0.5" transform="rotate(40 1365.5 216.4)"/><rect x="1259.2" y="295.9" width="5.5" height="4.3" fill="#d9cfc7" stroke="#c4b8ae" stroke-width="0.5" transform="rotate(25 1259.2 295.9)"/><rect x="1191.0" y="545.4" width="7.6" height="7.0" fill="#d9cfc7" stroke="#c4b8ae" stroke-width="0.5" transform="rotate(-30 1191.0 545.4)"/><rect x="1149.4" y="249.7" width="10.5" height="6.3" fill="#d9cfc7" stroke="#c4b8ae" stroke-width="0.5" transform="rotate(-30 1149.4 249.7)"/><rect x="1241.4" y="516.0" width="11.4" height="4.6" fill="#d9cfc7" stroke="#c4b8ae" stroke-width="0.5" transform="rotate(0 1241.4 516.0)"/><rect x="1201.6" y="514.7" width="8.6" height="6.8" fill="#d9cfc7" stroke="#c4b8ae" stroke-width="0.5" transform="rotate(-30 1201.6 514.7)"/><rect x="1234.3" y="533.7" width="8.7" height="8.5" fill="#d9cfc7" stroke="#c4b8ae" stroke-width="0.5" transform="rotate(0 1234.3 533.7)"/><rect x="1341.5" y="406.7" width="10.8" height="4.2" fill="#d9cfc7" stroke="#c4b8ae" stroke-width="0.5" transform="rotate(-30 1341.5 406.7)"/><rect x="1237.0" y="306.4" width="10.1" height="8.1" fill="#d9cfc7" stroke="#c4b8ae" stroke-width="0.5" transform="rotate(0 1237.0 306.4)"/><rect x="1222.2" y="262.2" width="12.9" height="10.0" fill="#d9cfc7" stroke="#c4b8ae" stroke-width="0.5" transform="rotate(25 1222.2 262.2)"/><rect x="1190.7" y="211.7" width="8.7" height="6.0" fill="#d9cfc7" stroke="#c4b8ae" stroke-width="0.5" transform="rotate(25 1190.7 211.7)"/><rect x="1327.6" y="402.5" width="7.5" height="8.6" fill="#d9cfc7" stroke="#c4b8ae" stroke-width="0.5" transform="rotate(25 1327.6 402.5)"/><rect x="1169.0" y="206.3" width="9.1" height="4.9" fill="#d9cfc7" stroke="#c4b8ae" stroke-width="0.5" transform="rotate(-30 1169.0 206.3)"/><rect x="1361.3" y="267.9" width="6.0" height="7.0" fill="#d9cfc7" stroke="#c4b8ae" stroke-width="0.5" transform="rotate(0 1361.3 267.9)"/><rect x="1283.4" y="217.0" width="10.3" height="7.7" fill="#d9cfc7" stroke="#c4b8ae" stroke-width="0.5" transform="rotate(40 1283.4 217.0)"/><rect x="1372.5" y="290.6" width="10.3" height="5.3" fill="#d9cfc7" stroke="#c4b8ae" stroke-width="0.5" transform="rotate(25 1372.5 290.6)"/><rect x="1496.9" y="316.3" width="11.2" height="4.5" fill="#d9cfc7" stroke="#c4b8ae" stroke-width="0.5" transform="rotate(25 1496.9 316.3)"/><rect x="1191.7" y="541.3" width="12.5" height="7.3" fill="#d9cfc7" stroke="#c4b8ae" stroke-width="0.5" transform="rotate(-30 1191.7 541.3)"/><rect x="1363.4" y="442.4" width="7.4" height="4.4" fill="#d9cfc7" stroke="#c4b8ae" stroke-width="0.5" transform="rotate(25 1363.4 442.4)"/><rect x="1348.7" y="221.5" width="8.2" height="4.6" fill="#d9cfc7" stroke="#c4b8ae" stroke-width="0.5" transform="rotate(-30 1348.7 221.5)"/><rect x="1396.5" y="475.9" width="7.5" height="8.9" fill="#d9cfc7" stroke="#c4b8ae" stroke-width="0.5" transform="rotate(0 1396.5 475.9)"/><rect x="1517.7" y="362.3" width="7.7" height="4.7" fill="#d9cfc7" stroke="#c4b8ae" stroke-width="0.5" transform="rotate(-30 1517.7 362.3)"/><rect x="1359.4" y="414.5" width="5.7" height="9.7" fill="#d9cfc7" stroke="#c4b8ae" stroke-width="0.5" transform="rotate(40 1359.4 414.5)"/><rect x="1272.0" y="378.6" width="10.7" height="8.4" fill="#d9cfc7" stroke="#c4b8ae" stroke-width="0.5" transform="rotate(-30 1272.0 378.6)"/><rect x="1137.3" y="398.3" width="11.5" height="8.2" fill="#d9cfc7" stroke="#c4b8ae" stroke-width="0.5" transform="rotate(0 1137.3 398.3)"/><rect x="1288.8" y="257.5" width="11.0" height="6.0" fill="#d9cfc7" stroke="#c4b8ae" stroke-width="0.5" transform="rotate(-30 1288.8 257.5)"/><rect x="1463.4" y="209.3" width="6.9" height="6.1" fill="#d9cfc7" stroke="#c4b8ae" stroke-width="0.5" transform="rotate(25 1463.4 209.3)"/><rect x="1291.8" y="537.3" width="11.6" height="5.6" fill="#d9cfc7" stroke="#c4b8ae" stroke-width="0.5" transform="rotate(25 1291.8 537.3)"/><rect x="1278.6" y="441.8" width="8.2" height="5.7" fill="#d9cfc7" stroke="#c4b8ae" stroke-width="0.5" transform="rotate(-30 1278.6 441.8)"/><rect x="1129.5" y="465.8" width="11.1" height="8.6" fill="#d9cfc7" stroke="#c4b8ae" stroke-width="0.5" transform="rotate(0 1129.5 465.8)"/><rect x="1461.5" y="343.6" width="11.7" height="4.8" fill="#d9cfc7" stroke="#c4b8ae" stroke-width="0.5" transform="rotate(0 1461.5 343.6)"/><rect x="1491.0" y="463.7" width="12.2" height="5.0" fill="#d9cfc7" stroke="#c4b8ae" stroke-width="0.5" transform="rotate(25 1491.0 463.7)"/><rect x="1147.8" y="546.2" width="9.4" height="6.7" fill="#d9cfc7" stroke="#c4b8ae" stroke-width="0.5" transform="rotate(25 1147.8 546.2)"/><rect x="1365.6" y="377.2" width="11.0" height="9.0" fill="#d9cfc7" stroke="#c4b8ae" stroke-width="0.5" transform="rotate(25 1365.6 377.2)"/><rect x="1309.2" y="212.5" width="5.9" height="9.3" fill="#d9cfc7" stroke="#c4b8ae" stroke-width="0.5" transform="rotate(-30 1309.2 212.5)"/><rect x="1240.2" y="215.3" width="5.5" height="8.4" fill="#d9cfc7" stroke="#c4b8ae" stroke-width="0.5" transform="rotate(-30 1240.2 215.3)"/><rect x="1369.0" y="342.5" width="10.1" height="9.3" fill="#d9cfc7" stroke="#c4b8ae" stroke-width="0.5" transform="rotate(0 1369.0 342.5)"/><rect x="1177.6" y="429.2" width="11.6" height="7.1" fill="#d9cfc7" stroke="#c4b8ae" stroke-width="0.5" transform="rotate(40 1177.6 429.2)"/><rect x="1240.2" y="272.3" width="9.3" height="9.6" fill="#d9cfc7" stroke="#c4b8ae" stroke-width="0.5" transform="rotate(-30 1240.2 272.3)"/><rect x="1388.8" y="494.4" width="5.8" height="8.8" fill="#d9cfc7" stroke="#c4b8ae" stroke-width="0.5" transform="rotate(0 1388.8 494.4)"/><rect x="1278.7" y="322.2" width="10.9" height="5.1" fill="#d9cfc7" stroke="#c4b8ae" stroke-width="0.5" transform="rotate(0 1278.7 322.2)"/><rect x="1435.1" y="342.5" width="11.7" height="9.4" fill="#d9cfc7" stroke="#c4b8ae" stroke-width="0.5" transform="rotate(-30 1435.1 342.5)"/><rect x="1599.8" y="271.9" width="9.0" height="9.4" fill="#d9cfc7" stroke="#c4b8ae" stroke-width="0.5" transform="rotate(-30 1599.8 271.9)"/><rect x="1197.1" y="447.3" width="11.4" height="6.5" fill="#d9cfc7" stroke="#c4b8ae" stroke-width="0.5" transform="rotate(0 1197.1 447.3)"/><rect x="1477.8" y="436.1" width="6.9" height="5.3" fill="#d9cfc7" stroke="#c4b8ae" stroke-width="0.5" transform="rotate(40 1477.8 436.1)"/><rect x="1150.9" y="506.4" width="11.4" height="9.4" fill="#d9cfc7" stroke="#c4b8ae" stroke-width="0.5" transform="rotate(-30 1150.9 506.4)"/><rect x="1389.6" y="258.6" width="9.8" height="9.4" fill="#d9cfc7" stroke="#c4b8ae" stroke-width="0.5" transform="rotate(-30 1389.6 258.6)"/><rect x="1626.6" y="484.7" width="8.7" height="7.6" fill="#d9cfc7" stroke="#c4b8ae" stroke-width="0.5" transform="rotate(-30 1626.6 484.7)"/><rect x="1263.6" y="533.1" width="12.4" height="4.3" fill="#d9cfc7" stroke="#c4b8ae" stroke-width="0.5" transform="rotate(-30 1263.6 533.1)"/><rect x="1351.4" y="221.7" width="5.6" height="8.8" fill="#d9cfc7" stroke="#c4b8ae" stroke-width="0.5" transform="rotate(40 1351.4 221.7)"/><rect x="1196.3" y="376.4" width="10.1" height="10.0" fill="#d9cfc7" stroke="#c4b8ae" stroke-width="0.5" transform="rotate(25 1196.3 376.4)"/><rect x="1333.7" y="484.8" width="13.0" height="5.4" fill="#d9cfc7" stroke="#c4b8ae" stroke-width="0.5" transform="rotate(40 1333.7 484.8)"/><rect x="1307.0" y="366.5" width="7.5" height="7.8" fill="#d9cfc7" stroke="#c4b8ae" stroke-width="0.5" transform="rotate(40 1307.0 366.5)"/><rect x="1166.9" y="266.0" width="7.5" height="7.0" fill="#d9cfc7" stroke="#c4b8ae" stroke-width="0.5" transform="rotate(-30 1166.9 266.0)"/><rect x="1428.5" y="381.9" width="7.2" height="7.1" fill="#d9cfc7" stroke="#c4b8ae" stroke-width="0.5" transform="rotate(40 1428.5 381.9)"/><rect x="1428.5" y="245.9" width="6.4" height="4.4" fill="#d9cfc7" stroke="#c4b8ae" stroke-width="0.5" transform="rotate(40 1428.5 245.9)"/><rect x="1342.4" y="331.7" width="10.5" height="6.4" fill="#d9cfc7" stroke="#c4b8ae" stroke-width="0.5" transform="rotate(-30 1342.4 331.7)"/><rect x="1144.5" y="510.8" width="8.8" height="7.1" fill="#d9cfc7" stroke="#c4b8ae" stroke-width="0.5" transform="rotate(40 1144.5 510.8)"/><rect x="1614.3" y="442.6" width="10.2" height="8.5" fill="#d9cfc7" stroke="#c4b8ae" stroke-width="0.5" transform="rotate(-30 1614.3 442.6)"/><rect x="1472.5" y="326.8" width="12.6" height="7.3" fill="#d9cfc7" stroke="#c4b8ae" stroke-width="0.5" transform="rotate(40 1472.5 326.8)"/><rect x="1458.9" y="304.3" width="6.1" height="9.4" fill="#d9cfc7" stroke="#c4b8ae" stroke-width="0.5" transform="rotate(-30 1458.9 304.3)"/><rect x="1264.7" y="401.9" width="5.2" height="7.3" fill="#d9cfc7" stroke="#c4b8ae" stroke-width="0.5" transform="rotate(25 1264.7 401.9)"/><rect x="1322.8" y="438.2" width="11.3" height="5.6" fill="#d9cfc7" stroke="#c4b8ae" stroke-width="0.5" transform="rotate(25 1322.8 438.2)"/><rect x="1271.6" y="390.9" width="12.5" height="6.3" fill="#d9cfc7" stroke="#c4b8ae" stroke-width="0.5" transform="rotate(-30 1271.6 390.9)"/><rect x="1222.7" y="210.6" width="11.4" height="4.9" fill="#d9cfc7" stroke="#c4b8ae" stroke-width="0.5" transform="rotate(-30 1222.7 210.6)"/><rect x="1236.1" y="366.8" width="6.0" height="9.8" fill="#d9cfc7" stroke="#c4b8ae" stroke-width="0.5" transform="rotate(-30 1236.1 366.8)"/><rect x="1222.6" y="495.7" width="11.9" height="6.3" fill="#d9cfc7" stroke="#c4b8ae" stroke-width="0.5" transform="rotate(-30 1222.6 495.7)"/><rect x="1447.9" y="479.5" width="6.4" height="4.8" fill="#d9cfc7" stroke="#c4b8ae" stroke-width="0.5" transform="rotate(25 1447.9 479.5)"/><rect x="1142.7" y="209.2" width="6.0" height="4.1" fill="#d9cfc7" stroke="#c4b8ae" stroke-width="0.5" transform="rotate(-30 1142.7 209.2)"/><rect x="1181.0" y="253.1" width="6.4" height="7.7" fill="#d9cfc7" stroke="#c4b8ae" stroke-width="0.5" transform="rotate(-30 1181.0 253.1)"/><rect x="1324.7" y="290.9" width="6.9" height="9.8" fill="#d9cfc7" stroke="#c4b8ae" stroke-width="0.5" transform="rotate(-30 1324.7 290.9)"/><rect x="1446.0" y="457.3" width="8.6" height="7.7" fill="#d9cfc7" stroke="#c4b8ae" stroke-width="0.5" transform="rotate(-30 1446.0 457.3)"/><rect x="1130.1" y="367.7" width="5.2" height="7.8" fill="#d9cfc7" stroke="#c4b8ae" stroke-width="0.5" transform="rotate(40 1130.1 367.7)"/><rect x="1386.9" y="247.1" width="5.4" height="8.7" fill="#d9cfc7" stroke="#c4b8ae" stroke-width="0.5" transform="rotate(0 1386.9 247.1)"/><rect x="1196.5" y="258.5" width="8.1" height="8.1" fill="#d9cfc7" stroke="#c4b8ae" stroke-width="0.5" transform="rotate(-30 1196.5 258.5)"/><rect x="1487.1" y="264.3" width="8.0" height="8.0" fill="#d9cfc7" stroke="#c4b8ae" stroke-width="0.5" transform="rotate(25 1487.1 264.3)"/><rect x="1440.4" y="317.0" width="8.0" height="5.6" fill="#d9cfc7" stroke="#c4b8ae" stroke-width="0.5" transform="rotate(-30 1440.4 317.0)"/><rect x="1204.8" y="541.1" width="8.9" height="5.7" fill="#d9cfc7" stroke="#c4b8ae" stroke-width="0.5" transform="rotate(-30 1204.8 541.1)"/><rect x="1376.9" y="529.1" width="8.4" height="4.5" fill="#d9cfc7" stroke="#c4b8ae" stroke-width="0.5" transform="rotate(40 1376.9 529.1)"/><rect x="1176.1" y="300.5" width="5.9" height="9.2" fill="#d9cfc7" stroke="#c4b8ae" stroke-width="0.5" transform="rotate(40 1176.1 300.5)"/><rect x="1578.4" y="521.1" width="8.6" height="6.2" fill="#d9cfc7" stroke="#c4b8ae" stroke-width="0.5" transform="rotate(-30 1578.4 521.1)"/><rect x="1377.8" y="484.8" width="6.7" height="7.9" fill="#d9cfc7" stroke="#c4b8ae" stroke-width="0.5" transform="rotate(25 1377.8 484.8)"/><rect x="1381.4" y="404.2" width="11.2" height="8.2" fill="#d9cfc7" stroke="#c4b8ae" stroke-width="0.5" transform="rotate(25 1381.4 404.2)"/><rect x="1509.5" y="246.0" width="10.4" height="4.3" fill="#d9cfc7" stroke="#c4b8ae" stroke-width="0.5" transform="rotate(0 1509.5 246.0)"/><rect x="1384.3" y="370.2" width="5.2" height="4.5" fill="#d9cfc7" stroke="#c4b8ae" stroke-width="0.5" transform="rotate(-30 1384.3 370.2)"/><rect x="1234.2" y="434.7" width="12.0" height="4.5" fill="#d9cfc7" stroke="#c4b8ae" stroke-width="0.5" transform="rotate(25 1234.2 434.7)"/><rect x="1193.5" y="523.3" width="6.0" height="5.1" fill="#d9cfc7" stroke="#c4b8ae" stroke-width="0.5" transform="rotate(0 1193.5 523.3)"/><rect x="1257.3" y="254.0" width="12.3" height="5.3" fill="#d9cfc7" stroke="#c4b8ae" stroke-width="0.5" transform="rotate(-30 1257.3 254.0)"/><rect x="1205.8" y="469.1" width="9.4" height="6.4" fill="#d9cfc7" stroke="#c4b8ae" stroke-width="0.5" transform="rotate(-30 1205.8 469.1)"/><rect x="1604.5" y="419.2" width="9.0" height="9.8" fill="#d9cfc7" stroke="#c4b8ae" stroke-width="0.5" transform="rotate(25 1604.5 419.2)"/><rect x="1618.2" y="592.4" width="9.7" height="9.8" fill="#d9cfc7" stroke="#c4b8ae" stroke-width="0.5" transform="rotate(40 1618.2 592.4)"/><rect x="1421.1" y="259.8" width="11.2" height="5.9" fill="#d9cfc7" stroke="#c4b8ae" stroke-width="0.5" transform="rotate(40 1421.1 259.8)"/><rect x="1187.0" y="303.7" width="10.0" height="7.4" fill="#d9cfc7" stroke="#c4b8ae" stroke-width="0.5" transform="rotate(25 1187.0 303.7)"/><rect x="1617.4" y="461.3" width="6.5" height="5.1" fill="#d9cfc7" stroke="#c4b8ae" stroke-width="0.5" transform="rotate(25 1617.4 461.3)"/><rect x="1156.2" y="190.1" width="9.4" height="5.2" fill="#d9cfc7" stroke="#c4b8ae" stroke-width="0.5" transform="rotate(0 1156.2 190.1)"/><rect x="1179.9" y="304.7" width="5.8" height="5.2" fill="#d9cfc7" stroke="#c4b8ae" stroke-width="0.5" transform="rotate(0 1179.9 304.7)"/><rect x="1491.0" y="186.7" width="8.4" height="9.8" fill="#d9cfc7" stroke="#c4b8ae" stroke-width="0.5" transform="rotate(25 1491.0 186.7)"/><rect x="1303.6" y="480.0" width="9.3" height="5.1" fill="#d9cfc7" stroke="#c4b8ae" stroke-width="0.5" transform="rotate(0 1303.6 480.0)"/><rect x="1227.6" y="260.2" width="11.7" height="4.6" fill="#d9cfc7" stroke="#c4b8ae" stroke-width="0.5" transform="rotate(-30 1227.6 260.2)"/><rect x="1262.5" y="247.2" width="7.9" height="8.0" fill="#d9cfc7" stroke="#c4b8ae" stroke-width="0.5" transform="rotate(-30 1262.5 247.2)"/><rect x="1460.2" y="252.7" width="10.8" height="7.3" fill="#d9cfc7" stroke="#c4b8ae" stroke-width="0.5" transform="rotate(25 1460.2 252.7)"/><rect x="1206.9" y="248.8" width="5.9" height="8.8" fill="#d9cfc7" stroke="#c4b8ae" stroke-width="0.5" transform="rotate(-30 1206.9 248.8)"/><rect x="1205.6" y="394.2" width="9.6" height="7.4" fill="#d9cfc7" stroke="#c4b8ae" stroke-width="0.5" transform="rotate(40 1205.6 394.2)"/><rect x="1362.1" y="496.5" width="10.8" height="5.4" fill="#d9cfc7" stroke="#c4b8ae" stroke-width="0.5" transform="rotate(-30 1362.1 496.5)"/><rect x="1245.2" y="499.3" width="6.9" height="8.9" fill="#d9cfc7" stroke="#c4b8ae" stroke-width="0.5" transform="rotate(-30 1245.2 499.3)"/><rect x="1344.5" y="383.2" width="5.3" height="9.9" fill="#d9cfc7" stroke="#c4b8ae" stroke-width="0.5" transform="rotate(-30 1344.5 383.2)"/><rect x="1356.6" y="394.3" width="12.4" height="7.6" fill="#d9cfc7" stroke="#c4b8ae" stroke-width="0.5" transform="rotate(-30 1356.6 394.3)"/><rect x="1225.3" y="293.6" width="11.2" height="8.5" fill="#d9cfc7" stroke="#c4b8ae" stroke-width="0.5" transform="rotate(25 1225.3 293.6)"/><rect x="1457.8" y="361.4" width="7.5" height="7.1" fill="#d9cfc7" stroke="#c4b8ae" stroke-width="0.5" transform="rotate(40 1457.8 361.4)"/><rect x="1249.1" y="250.0" width="7.4" height="5.9" fill="#d9cfc7" stroke="#c4b8ae" stroke-width="0.5" transform="rotate(-30 1249.1 250.0)"/><rect x="1487.4" y="363.5" width="6.3" height="4.3" fill="#d9cfc7" stroke="#c4b8ae" stroke-width="0.5" transform="rotate(-30 1487.4 363.5)"/><rect x="1143.4" y="205.8" width="9.2" height="8.5" fill="#d9cfc7" stroke="#c4b8ae" stroke-width="0.5" transform="rotate(-30 1143.4 205.8)"/><rect x="1386.5" y="255.6" width="10.4" height="6.6" fill="#d9cfc7" stroke="#c4b8ae" stroke-width="0.5" transform="rotate(40 1386.5 255.6)"/><rect x="1170.2" y="559.7" width="6.8" height="6.4" fill="#d9cfc7" stroke="#c4b8ae" stroke-width="0.5" transform="rotate(-30 1170.2 559.7)"/><rect x="1333.5" y="408.0" width="7.3" height="6.2" fill="#d9cfc7" stroke="#c4b8ae" stroke-width="0.5" transform="rotate(-30 1333.5 408.0)"/><rect x="1260.4" y="463.7" width="6.8" height="6.4" fill="#d9cfc7" stroke="#c4b8ae" stroke-width="0.5" transform="rotate(40 1260.4 463.7)"/><rect x="1158.7" y="221.1" width="5.5" height="5.2" fill="#d9cfc7" stroke="#c4b8ae" stroke-width="0.5" transform="rotate(25 1158.7 221.1)"/><rect x="1375.0" y="266.3" width="10.4" height="7.0" fill="#d9cfc7" stroke="#c4b8ae" stroke-width="0.5" transform="rotate(40 1375.0 266.3)"/><rect x="1367.3" y="244.5" width="8.9" height="4.8" fill="#d9cfc7" stroke="#c4b8ae" stroke-width="0.5" transform="rotate(-30 1367.3 244.5)"/><rect x="1146.3" y="482.1" width="11.4" height="4.7" fill="#d9cfc7" stroke="#c4b8ae" stroke-width="0.5" transform="rotate(25 1146.3 482.1)"/><rect x="1246.9" y="277.5" width="12.6" height="5.6" fill="#d9cfc7" stroke="#c4b8ae" stroke-width="0.5" transform="rotate(-30 1246.9 277.5)"/><rect x="1124.9" y="223.9" width="10.8" height="9.2" fill="#d9cfc7" stroke="#c4b8ae" stroke-width="0.5" transform="rotate(-30 1124.9 223.9)"/><rect x="1463.1" y="293.9" width="5.9" height="8.8" fill="#d9cfc7" stroke="#c4b8ae" stroke-width="0.5" transform="rotate(-30 1463.1 293.9)"/><rect x="1469.5" y="187.5" width="7.8" height="9.2" fill="#d9cfc7" stroke="#c4b8ae" stroke-width="0.5" transform="rotate(0 1469.5 187.5)"/><rect x="1224.4" y="400.8" width="8.9" height="6.0" fill="#d9cfc7" stroke="#c4b8ae" stroke-width="0.5" transform="rotate(25 1224.4 400.8)"/><rect x="1306.0" y="417.5" width="12.9" height="7.7" fill="#d9cfc7" stroke="#c4b8ae" stroke-width="0.5" transform="rotate(0 1306.0 417.5)"/><rect x="1189.4" y="195.3" width="8.4" height="7.6" fill="#d9cfc7" stroke="#c4b8ae" stroke-width="0.5" transform="rotate(-30 1189.4 195.3)"/><rect x="1397.4" y="300.2" width="11.2" height="8.2" fill="#d9cfc7" stroke="#c4b8ae" stroke-width="0.5" transform="rotate(25 1397.4 300.2)"/><rect x="1390.0" y="289.1" width="12.4" height="7.1" fill="#d9cfc7" stroke="#c4b8ae" stroke-width="0.5" transform="rotate(40 1390.0 289.1)"/><rect x="1403.7" y="307.3" width="11.6" height="4.2" fill="#d9cfc7" stroke="#c4b8ae" stroke-width="0.5" transform="rotate(25 1403.7 307.3)"/><rect x="1372.0" y="488.7" width="6.7" height="6.7" fill="#d9cfc7" stroke="#c4b8ae" stroke-width="0.5" transform="rotate(25 1372.0 488.7)"/><rect x="1489.0" y="374.4" width="5.7" height="6.2" fill="#d9cfc7" stroke="#c4b8ae" stroke-width="0.5" transform="rotate(-30 1489.0 374.4)"/><rect x="1131.6" y="413.0" width="7.7" height="6.5" fill="#d9cfc7" stroke="#c4b8ae" stroke-width="0.5" transform="rotate(40 1131.6 413.0)"/><rect x="1621.7" y="519.0" width="7.7" height="4.7" fill="#d9cfc7" stroke="#c4b8ae" stroke-width="0.5" transform="rotate(-30 1621.7 519.0)"/><rect x="1374.6" y="338.9" width="7.2" height="6.9" fill="#d9cfc7" stroke="#c4b8ae" stroke-width="0.5" transform="rotate(-30 1374.6 338.9)"/><rect x="1349.7" y="360.4" width="7.5" height="9.8" fill="#d9cfc7" stroke="#c4b8ae" stroke-width="0.5" transform="rotate(-30 1349.7 360.4)"/><rect x="1471.1" y="287.6" width="5.3" height="5.0" fill="#d9cfc7" stroke="#c4b8ae" stroke-width="0.5" transform="rotate(-30 1471.1 287.6)"/><rect x="1343.4" y="265.6" width="11.2" height="6.2" fill="#d9cfc7" stroke="#c4b8ae" stroke-width="0.5" transform="rotate(-30 1343.4 265.6)"/><rect x="1180.5" y="298.4" width="9.1" height="10.0" fill="#d9cfc7" stroke="#c4b8ae" stroke-width="0.5" transform="rotate(25 1180.5 298.4)"/><rect x="1526.6" y="490.6" width="7.6" height="4.8" fill="#d9cfc7" stroke="#c4b8ae" stroke-width="0.5" transform="rotate(-30 1526.6 490.6)"/><rect x="1445.3" y="264.0" width="5.2" height="8.0" fill="#d9cfc7" stroke="#c4b8ae" stroke-width="0.5" transform="rotate(0 1445.3 264.0)"/><rect x="1242.6" y="226.7" width="10.7" height="9.1" fill="#d9cfc7" stroke="#c4b8ae" stroke-width="0.5" transform="rotate(-30 1242.6 226.7)"/><rect x="1243.4" y="428.6" width="9.6" height="5.9" fill="#d9cfc7" stroke="#c4b8ae" stroke-width="0.5" transform="rotate(-30 1243.4 428.6)"/><rect x="1418.0" y="399.6" width="11.8" height="4.5" fill="#d9cfc7" stroke="#c4b8ae" stroke-width="0.5" transform="rotate(40 1418.0 399.6)"/><rect x="1186.1" y="274.1" width="7.5" height="6.5" fill="#d9cfc7" stroke="#c4b8ae" stroke-width="0.5" transform="rotate(25 1186.1 274.1)"/><rect x="1130.9" y="280.5" width="7.7" height="6.4" fill="#d9cfc7" stroke="#c4b8ae" stroke-width="0.5" transform="rotate(40 1130.9 280.5)"/><rect x="1248.7" y="429.1" width="8.0" height="4.2" fill="#d9cfc7" stroke="#c4b8ae" stroke-width="0.5" transform="rotate(0 1248.7 429.1)"/><rect x="1370.2" y="594.6" width="8.0" height="5.4" fill="#d9cfc7" stroke="#c4b8ae" stroke-width="0.5" transform="rotate(0 1370.2 594.6)"/><rect x="1213.4" y="434.1" width="8.8" height="9.7" fill="#d9cfc7" stroke="#c4b8ae" stroke-width="0.5" transform="rotate(-30 1213.4 434.1)"/><rect x="1511.4" y="368.3" width="12.9" height="4.5" fill="#d9cfc7" stroke="#c4b8ae" stroke-width="0.5" transform="rotate(40 1511.4 368.3)"/><rect x="1572.5" y="473.0" width="12.2" height="5.1" fill="#d9cfc7" stroke="#c4b8ae" stroke-width="0.5" transform="rotate(-30 1572.5 473.0)"/><rect x="1346.2" y="396.2" width="7.3" height="8.2" fill="#d9cfc7" stroke="#c4b8ae" stroke-width="0.5" transform="rotate(0 1346.2 396.2)"/><rect x="1313.1" y="481.2" width="5.8" height="7.2" fill="#d9cfc7" stroke="#c4b8ae" stroke-width="0.5" transform="rotate(-30 1313.1 481.2)"/><rect x="1182.0" y="457.8" width="9.3" height="6.0" fill="#d9cfc7" stroke="#c4b8ae" stroke-width="0.5" transform="rotate(25 1182.0 457.8)"/><rect x="1470.8" y="233.2" width="6.3" height="4.1" fill="#d9cfc7" stroke="#c4b8ae" stroke-width="0.5" transform="rotate(25 1470.8 233.2)"/><rect x="1237.7" y="187.5" width="13.0" height="5.2" fill="#d9cfc7" stroke="#c4b8ae" stroke-width="0.5" transform="rotate(0 1237.7 187.5)"/><rect x="1353.3" y="354.0" width="6.9" height="8.7" fill="#d9cfc7" stroke="#c4b8ae" stroke-width="0.5" transform="rotate(40 1353.3 354.0)"/><rect x="1153.1" y="341.9" width="12.1" height="5.9" fill="#d9cfc7" stroke="#c4b8ae" stroke-width="0.5" transform="rotate(40 1153.1 341.9)"/><rect x="1224.9" y="257.6" width="10.2" height="8.2" fill="#d9cfc7" stroke="#c4b8ae" stroke-width="0.5" transform="rotate(25 1224.9 257.6)"/><rect x="1272.9" y="407.2" width="10.7" height="8.4" fill="#d9cfc7" stroke="#c4b8ae" stroke-width="0.5" transform="rotate(-30 1272.9 407.2)"/><rect x="1192.5" y="313.8" width="10.4" height="7.3" fill="#d9cfc7" stroke="#c4b8ae" stroke-width="0.5" transform="rotate(0 1192.5 313.8)"/><rect x="1188.2" y="539.0" width="8.9" height="7.3" fill="#d9cfc7" stroke="#c4b8ae" stroke-width="0.5" transform="rotate(-30 1188.2 539.0)"/><rect x="1547.2" y="456.3" width="9.9" height="4.2" fill="#d9cfc7" stroke="#c4b8ae" stroke-width="0.5" transform="rotate(0 1547.2 456.3)"/><rect x="1214.4" y="528.7" width="9.2" height="4.1" fill="#d9cfc7" stroke="#c4b8ae" stroke-width="0.5" transform="rotate(-30 1214.4 528.7)"/><rect x="1586.7" y="326.3" width="7.7" height="4.4" fill="#d9cfc7" stroke="#c4b8ae" stroke-width="0.5" transform="rotate(-30 1586.7 326.3)"/><rect x="1134.6" y="483.9" width="5.4" height="8.2" fill="#d9cfc7" stroke="#c4b8ae" stroke-width="0.5" transform="rotate(25 1134.6 483.9)"/><rect x="1278.2" y="490.1" width="5.7" height="5.2" fill="#d9cfc7" stroke="#c4b8ae" stroke-width="0.5" transform="rotate(40 1278.2 490.1)"/><rect x="1125.8" y="210.4" width="7.3" height="5.8" fill="#d9cfc7" stroke="#c4b8ae" stroke-width="0.5" transform="rotate(0 1125.8 210.4)"/><rect x="1372.8" y="434.7" width="12.1" height="6.3" fill="#d9cfc7" stroke="#c4b8ae" stroke-width="0.5" transform="rotate(0 1372.8 434.7)"/><rect x="1362.4" y="511.4" width="8.6" height="5.2" fill="#d9cfc7" stroke="#c4b8ae" stroke-width="0.5" transform="rotate(-30 1362.4 511.4)"/><rect x="1268.1" y="494.4" width="11.6" height="5.5" fill="#d9cfc7" stroke="#c4b8ae" stroke-width="0.5" transform="rotate(25 1268.1 494.4)"/><rect x="1327.4" y="278.8" width="6.7" height="9.7" fill="#d9cfc7" stroke="#c4b8ae" stroke-width="0.5" transform="rotate(25 1327.4 278.8)"/><rect x="1361.1" y="330.0" width="8.9" height="7.7" fill="#d9cfc7" stroke="#c4b8ae" stroke-width="0.5" transform="rotate(25 1361.1 330.0)"/><rect x="1330.0" y="252.2" width="9.0" height="9.5" fill="#d9cfc7" stroke="#c4b8ae" stroke-width="0.5" transform="rotate(40 1330.0 252.2)"/><rect x="1203.7" y="502.5" width="8.4" height="5.1" fill="#d9cfc7" stroke="#c4b8ae" stroke-width="0.5" transform="rotate(0 1203.7 502.5)"/><rect x="1251.3" y="422.4" width="12.2" height="5.6" fill="#d9cfc7" stroke="#c4b8ae" stroke-width="0.5" transform="rotate(25 1251.3 422.4)"/><rect x="1421.6" y="276.1" width="8.5" height="4.0" fill="#d9cfc7" stroke="#c4b8ae" stroke-width="0.5" transform="rotate(25 1421.6 276.1)"/><rect x="1254.0" y="529.9" width="9.4" height="7.6" fill="#d9cfc7" stroke="#c4b8ae" stroke-width="0.5" transform="rotate(-30 1254.0 529.9)"/><rect x="1484.6" y="256.3" width="10.4" height="4.6" fill="#d9cfc7" stroke="#c4b8ae" stroke-width="0.5" transform="rotate(40 1484.6 256.3)"/><rect x="1335.6" y="397.0" width="6.2" height="5.3" fill="#d9cfc7" stroke="#c4b8ae" stroke-width="0.5" transform="rotate(40 1335.6 397.0)"/><rect x="1323.2" y="247.6" width="6.5" height="7.5" fill="#d9cfc7" stroke="#c4b8ae" stroke-width="0.5" transform="rotate(-30 1323.2 247.6)"/><rect x="1206.2" y="428.8" width="6.5" height="7.9" fill="#d9cfc7" stroke="#c4b8ae" stroke-width="0.5" transform="rotate(40 1206.2 428.8)"/><rect x="1382" y="304" width="30" height="20" fill="#d9d0c9" stroke="#c9beb5" stroke-width="0.5" transform="rotate(30 1382 304)"/><rect x="1428" y="247" width="22" height="14" fill="#d9d0c9" stroke="#c9beb5" stroke-width="0.5" transform="rotate(-20 1428 247)"/><rect x="1523" y="552" width="28" height="26" fill="#d9d0c9" stroke="#c9beb5" stroke-width="0.5" transform="rotate(30 1523 552)"/><rect x="1330" y="450" width="22" height="12" fill="#d9d0c9" stroke="#c9beb5" stroke-width="0.5" transform="rotate(35 1330 450)"/><rect x="1405" y="478" width="30" height="22" fill="#d9d0c9" stroke="#c9beb5" stroke-width="0.5" transform="rotate(30 1405 478)"/><rect x="1490" y="445" width="20" height="10" fill="#d9d0c9" stroke="#c9beb5" stroke-width="0.5" transform="rotate(30 1490 445)"/><rect x="1355" y="405" width="14" height="18" fill="#d9d0c9" stroke="#c9beb5" stroke-width="0.5" transform="rotate(30 1355 405)"/><polygon points="1422.0,237.0 1443.0,242.5 1436.5,266.5 1422.0,264.7" fill="#f0f0f0"/><polygon points="1398.8,273.3 1417.7,276.7 1416.0,305.8 1392.0,297.3" fill="#f0f0f0"/><polyline points="1123.0,319.0 1156.0,294.0 1190.0,261.0 1213.0,241.0" fill="none" stroke="#c8c4c0" stroke-width="5" stroke-linejoin="round" stroke-linecap="round"/><polyline points="1123.0,319.0 1156.0,294.0 1190.0,261.0 1213.0,241.0" fill="none" stroke="#ffffff" stroke-width="4" stroke-linejoin="round" stroke-linecap="round"/><polyline points="1123.0,259.0 1156.0,294.0 1180.0,323.0" fill="none" stroke="#c8c4c0" stroke-width="3.5" stroke-linejoin="round" stroke-linecap="round"/><polyline points="1123.0,259.0 1156.0,294.0 1180.0,323.0" fill="none" stroke="#ffffff" stroke-width="2.5" stroke-linejoin="round" stroke-linecap="round"/><polyline points="1206.0,214.0 1256.0,186.0" fill="none" stroke="#c8c4c0" stroke-width="5" stroke-linejoin="round" stroke-linecap="round"/><polyline points="1206.0,214.0 1256.0,186.0" fill="none" stroke="#ffffff" stroke-width="4" stroke-linejoin="round" stroke-linecap="round"/><polyline points="1221.0,243.0 1251.0,226.0 1268.0,208.0 1290.0,221.0 1343.0,226.0" fill="none" stroke="#c8c4c0" stroke-width="3.5" stroke-linejoin="round" stroke-linecap="round"/><polyline points="1221.0,243.0 1251.0,226.0 1268.0,208.0 1290.0,221.0 1343.0,226.0" fill="none" stroke="#ffffff" stroke-width="2.5" stroke-linejoin="round" stroke-linecap="round"/><polyline points="1223.0,213.0 1223.0,241.0" fill="none" stroke="#c8c4c0" stroke-width="3" stroke-linejoin="round" stroke-linecap="round"/><polyline points="1223.0,213.0 1223.0,241.0" fill="none" stroke="#ffffff" stroke-width="2" stroke-linejoin="round" stroke-linecap="round"/><polyline points="1240.0,203.0 1251.0,226.0" fill="none" stroke="#c8c4c0" stroke-width="3" stroke-linejoin="round" stroke-linecap="round"/><polyline points="1240.0,203.0 1251.0,226.0" fill="none" stroke="#ffffff" stroke-width="2" stroke-linejoin="round" stroke-linecap="round"/><polyline points="1268.0,186.0 1290.0,221.0" fill="none" stroke="#c8c4c0" stroke-width="3" stroke-linejoin="round" stroke-linecap="round"/><polyline points="1268.0,186.0 1290.0,221.0" fill="none" stroke="#ffffff" stroke-width="2" stroke-linejoin="round" stroke-linecap="round"/><polyline points="1355.0,212.0 1380.0,216.0 1507.0,249.0 1551.0,245.0 1599.0,230.0 1639.0,216.0" fill="none" stroke="#c8c4c0" stroke-width="3.5" stroke-linejoin="round" stroke-linecap="round"/><polyline points="1355.0,212.0 1380.0,216.0 1507.0,249.0 1551.0,245.0 1599.0,230.0 1639.0,216.0" fill="none" stroke="#ffffff" stroke-width="2.5" stroke-linejoin="round" stroke-linecap="round"/><polyline points="1450.0,237.0 1419.0,318.0" fill="none" stroke="#c8c4c0" stroke-width="3" stroke-linejoin="round" stroke-linecap="round"/><polyline points="1450.0,237.0 1419.0,318.0" fill="none" stroke="#ffffff" stroke-width="2" stroke-linejoin="round" stroke-linecap="round"/><polyline points="1414.0,225.0 1387.0,299.0" fill="none" stroke="#c8c4c0" stroke-width="3" stroke-linejoin="round" stroke-linecap="round"/><polyline points="1414.0,225.0 1387.0,299.0" fill="none" stroke="#ffffff" stroke-width="2" stroke-linejoin="round" stroke-linecap="round"/><polyline points="1503.0,249.0 1476.0,332.0" fill="none" stroke="#c8c4c0" stroke-width="4" stroke-linejoin="round" stroke-linecap="round"/><polyline points="1503.0,249.0 1476.0,332.0" fill="none" stroke="#ffffff" stroke-width="3" stroke-linejoin="round" stroke-linecap="round"/><polyline points="1150.0,336.0 1128.0,400.0" fill="none" stroke="#c8c4c0" stroke-width="4" stroke-linejoin="round" stroke-linecap="round"/><polyline points="1150.0,336.0 1128.0,400.0" fill="none" stroke="#ffffff" stroke-width="3" stroke-linejoin="round" stroke-linecap="round"/><polyline points="1145.0,354.0 1196.0,386.0 1197.0,405.0 1174.0,481.0 1166.0,514.0 1189.0,547.0" fill="none" stroke="#c8c4c0" stroke-width="4" stroke-linejoin="round" stroke-linecap="round"/><polyline points="1145.0,354.0 1196.0,386.0 1197.0,405.0 1174.0,481.0 1166.0,514.0 1189.0,547.0" fill="none" stroke="#ffffff" stroke-width="3" stroke-linejoin="round" stroke-linecap="round"/><polyline points="1123.0,401.0 1190.0,432.0 1232.0,458.0 1262.0,470.0" fill="none" stroke="#c8c4c0" stroke-width="4" stroke-linejoin="round" stroke-linecap="round"/><polyline points="1123.0,401.0 1190.0,432.0 1232.0,458.0 1262.0,470.0" fill="none" stroke="#ffffff" stroke-width="3" stroke-linejoin="round" stroke-linecap="round"/><polyline points="1123.0,452.0 1176.0,481.0 1202.0,529.0" fill="none" stroke="#c8c4c0" stroke-width="4" stroke-linejoin="round" stroke-linecap="round"/><polyline points="1123.0,452.0 1176.0,481.0 1202.0,529.0" fill="none" stroke="#ffffff" stroke-width="3" stroke-linejoin="round" stroke-linecap="round"/><polyline points="1123.0,498.0 1166.0,519.0" fill="none" stroke="#c8c4c0" stroke-width="3.5" stroke-linejoin="round" stroke-linecap="round"/><polyline points="1123.0,498.0 1166.0,519.0" fill="none" stroke="#ffffff" stroke-width="2.5" stroke-linejoin="round" stroke-linecap="round"/><polyline points="1123.0,532.0 1179.0,540.0 1189.0,547.0" fill="none" stroke="#c8c4c0" stroke-width="3.5" stroke-linejoin="round" stroke-linecap="round"/><polyline points="1123.0,532.0 1179.0,540.0 1189.0,547.0" fill="none" stroke="#ffffff" stroke-width="2.5" stroke-linejoin="round" stroke-linecap="round"/><polyline points="1208.0,364.0 1228.0,336.0" fill="none" stroke="#c8c4c0" stroke-width="3.5" stroke-linejoin="round" stroke-linecap="round"/><polyline points="1208.0,364.0 1228.0,336.0" fill="none" stroke="#ffffff" stroke-width="2.5" stroke-linejoin="round" stroke-linecap="round"/><polyline points="1302.0,420.0 1364.0,460.0" fill="none" stroke="#c8c4c0" stroke-width="3.5" stroke-linejoin="round" stroke-linecap="round"/><polyline points="1302.0,420.0 1364.0,460.0" fill="none" stroke="#ffffff" stroke-width="2.5" stroke-linejoin="round" stroke-linecap="round"/><polyline points="1408.0,522.0 1500.0,585.0" fill="none" stroke="#c8c4c0" stroke-width="3" stroke-linejoin="round" stroke-linecap="round"/><polyline points="1408.0,522.0 1500.0,585.0" fill="none" stroke="#ffffff" stroke-width="2" stroke-linejoin="round" stroke-linecap="round"/><polyline points="1320.0,520.0 1342.0,600.0" fill="none" stroke="#c8c4c0" stroke-width="3" stroke-linejoin="round" stroke-linecap="round"/><polyline points="1320.0,520.0 1342.0,600.0" fill="none" stroke="#ffffff" stroke-width="2" stroke-linejoin="round" stroke-linecap="round"/><polyline points="1440.0,370.0 1480.0,390.0" fill="none" stroke="#c8c4c0" stroke-width="3" stroke-linejoin="round" stroke-linecap="round"/><polyline points="1440.0,370.0 1480.0,390.0" fill="none" stroke="#ffffff" stroke-width="2" stroke-linejoin="round" stroke-linecap="round"/><polyline points="1192.0,186.0 1209.5,222.0 1216.0,245.0 1245.0,276.0 1277.0,308.0 1309.0,336.0 1345.0,364.0 1370.0,389.0 1402.0,421.0 1427.0,446.0 1455.0,475.0 1487.0,507.0 1516.0,535.0 1537.0,556.0 1596.0,622.0" fill="none" stroke="#d8b583" stroke-width="7.5" stroke-linejoin="round"/><polyline points="1192.0,186.0 1209.5,222.0 1216.0,245.0 1245.0,276.0 1277.0,308.0 1309.0,336.0 1345.0,364.0 1370.0,389.0 1402.0,421.0 1427.0,446.0 1455.0,475.0 1487.0,507.0 1516.0,535.0 1537.0,556.0 1596.0,622.0" fill="none" stroke="#f8d49e" stroke-width="5.5" stroke-linejoin="round"/><polyline points="1551.0,186.0 1513.5,287.0 1494.7,340.0 1440.0,420.0" fill="none" stroke="#a9d3f0" stroke-width="1.3"/><polyline points="1513.5,287.0 1529.0,340.0 1545.0,444.0 1530.0,617.0" fill="none" stroke="#a9d3f0" stroke-width="1.3"/><polyline points="1345.0,186.0 1355.0,215.0" fill="none" stroke="#c89a5a" stroke-width="1"/><polyline points="1570.0,300.0 1600.0,280.0 1639.0,272.0" fill="none" stroke="#c89a5a" stroke-width="1" stroke-dasharray="3,2"/><polyline points="1540.0,328.0 1590.0,320.0 1639.0,330.0" fill="none" stroke="#c89a5a" stroke-width="1" stroke-dasharray="3,2"/><polyline points="1540.0,400.0 1580.0,390.0 1639.0,385.0" fill="none" stroke="#c89a5a" stroke-width="1"/><polyline points="1340.0,560.0 1370.0,600.0 1390.0,617.0" fill="none" stroke="#c89a5a" stroke-width="1" stroke-dasharray="3,2"/><text x="1399" y="294" font-family="Liberation Sans" font-size="12" font-weight="bold" fill="#3b8ee0">P</text><text x="1428" y="258" font-family="Liberation Sans" font-size="12" font-weight="bold" fill="#3b8ee0">P</text><text x="1382" y="383" font-family="Liberation Sans" font-size="12" font-weight="bold" fill="#3b8ee0">P</text><text x="1468" y="359" font-family="Liberation Sans" font-size="12" font-weight="bold" fill="#3b8ee0">P</text><text x="1413" y="444" font-family="Liberation Sans" font-size="12" font-weight="bold" fill="#3b8ee0">P</text><text x="1430" y="398" font-family="Liberation Sans" font-size="12" font-weight="bold" fill="#3b8ee0">P</text><text x="1142" y="322" font-family="Liberation Sans" font-size="11" fill="#7d7d7d">Angersbach</text><path d="M1271 233 h6 M1274 230 v9" stroke="#222" stroke-width="1.6"/><circle cx="1218.7" cy="266.7" r="8" fill="#2a74c4" stroke="#676767" stroke-width="0.9"/><circle cx="1213.3" cy="272.0" r="8" fill="#2a74c4" stroke="#676767" stroke-width="0.9"/><circle cx="1208.0" cy="277.3" r="8" fill="#2a74c4" stroke="#676767" stroke-width="0.9"/><circle cx="1202.7" cy="282.7" r="8" fill="#2a74c4" stroke="#676767" stroke-width="0.9"/><circle cx="1190.2" cy="293.3" r="8" fill="#1ee514" stroke="#676767" stroke-width="0.9"/><circle cx="1185.4" cy="298.3" r="8" fill="#1ee514" stroke="#676767" stroke-width="0.9"/><circle cx="1180.6" cy="303.3" r="8" fill="#1ee514" stroke="#676767" stroke-width="0.9"/><circle cx="1188.4" cy="318.2" r="8" fill="#1ee514" stroke="#676767" stroke-width="0.9"/><circle cx="1193.8" cy="325.3" r="8" fill="#1ee514" stroke="#676767" stroke-width="0.9"/><circle cx="1200.9" cy="327.1" r="8" fill="#2a74c4" stroke="#676767" stroke-width="0.9"/><circle cx="1206.2" cy="333.2" r="8" fill="#2a74c4" stroke="#676767" stroke-width="0.9"/><circle cx="1247.1" cy="286.2" r="8" fill="#2a74c4" stroke="#676767" stroke-width="0.9"/><circle cx="1254.2" cy="286.2" r="8" fill="#2a74c4" stroke="#676767" stroke-width="0.9"/><circle cx="1260.4" cy="280.0" r="8" fill="#2a74c4" stroke="#676767" stroke-width="0.9"/><circle cx="1266.7" cy="273.8" r="8" fill="#2a74c4" stroke="#676767" stroke-width="0.9"/><circle cx="1273.8" cy="267.6" r="8" fill="#2a74c4" stroke="#676767" stroke-width="0.9"/><circle cx="1280.9" cy="261.3" r="8" fill="#2a74c4" stroke="#676767" stroke-width="0.9"/><circle cx="1288.0" cy="260.7" r="8" fill="#2a74c4" stroke="#676767" stroke-width="0.9"/><circle cx="1295.1" cy="260.1" r="8" fill="#2a74c4" stroke="#676767" stroke-width="0.9"/><circle cx="1302.2" cy="259.6" r="8" fill="#2a74c4" stroke="#676767" stroke-width="0.9"/><circle cx="1310.2" cy="261.3" r="8" fill="#2a74c4" stroke="#676767" stroke-width="0.9"/><circle cx="1318.2" cy="263.1" r="8" fill="#2a74c4" stroke="#676767" stroke-width="0.9"/><circle cx="1327.1" cy="268.4" r="8" fill="#2dd8c8" stroke="#676767" stroke-width="0.9"/><circle cx="1336.0" cy="273.8" r="8" fill="#e2304c" stroke="#676767" stroke-width="0.9"/><circle cx="1344.0" cy="277.3" r="8" fill="#e2304c" stroke="#676767" stroke-width="0.9"/><circle cx="1352.0" cy="280.9" r="8" fill="#e2304c" stroke="#676767" stroke-width="0.9"/><circle cx="1360.0" cy="284.4" r="8" fill="#e2304c" stroke="#676767" stroke-width="0.9"/><circle cx="1368.0" cy="288.0" r="8" fill="#e2304c" stroke="#676767" stroke-width="0.9"/><circle cx="1373.3" cy="293.3" r="8" fill="#e2304c" stroke="#676767" stroke-width="0.9"/><circle cx="1245.3" cy="304.0" r="11" fill="rgba(40,110,220,0.35)"/><circle cx="1245.3" cy="304.0" r="8" fill="#1ee514" stroke="#676767" stroke-width="0.9"/><circle cx="1236.4" cy="314.7" r="8" fill="#2a74c4" stroke="#676767" stroke-width="0.9"/><circle cx="1230.4" cy="322.5" r="8" fill="#1ee514" stroke="#676767" stroke-width="0.9"/><circle cx="1225.8" cy="328.9" r="8" fill="#1ee514" stroke="#676767" stroke-width="0.9"/><circle cx="1216.9" cy="341.3" r="8" fill="#2a74c4" stroke="#676767" stroke-width="0.9"/><circle cx="1211.6" cy="349.3" r="8" fill="#2a74c4" stroke="#676767" stroke-width="0.9"/><circle cx="1206.2" cy="357.3" r="8" fill="#2a74c4" stroke="#676767" stroke-width="0.9"/><circle cx="1202.7" cy="362.7" r="8" fill="#2a74c4" stroke="#676767" stroke-width="0.9"/><circle cx="1199.1" cy="368.0" r="8" fill="#2a74c4" stroke="#676767" stroke-width="0.9"/><circle cx="1199.1" cy="375.1" r="8" fill="#d8629c" stroke="#676767" stroke-width="0.9"/><circle cx="1204.4" cy="384.0" r="8" fill="#2a74c4" stroke="#676767" stroke-width="0.9"/><circle cx="1209.8" cy="388.4" r="8" fill="#2a74c4" stroke="#676767" stroke-width="0.9"/><circle cx="1215.1" cy="392.9" r="8" fill="#2a74c4" stroke="#676767" stroke-width="0.9"/><circle cx="1232.9" cy="362.7" r="8" fill="#2a74c4" stroke="#676767" stroke-width="0.9"/><circle cx="1237.0" cy="356.1" r="8" fill="#2a74c4" stroke="#676767" stroke-width="0.9"/><circle cx="1241.2" cy="349.6" r="8" fill="#2a74c4" stroke="#676767" stroke-width="0.9"/><circle cx="1245.3" cy="343.1" r="8" fill="#2a74c4" stroke="#676767" stroke-width="0.9"/><circle cx="1249.8" cy="337.8" r="8" fill="#2a74c4" stroke="#676767" stroke-width="0.9"/><circle cx="1254.2" cy="332.4" r="8" fill="#2a74c4" stroke="#676767" stroke-width="0.9"/><circle cx="1258.7" cy="327.1" r="8" fill="#2a74c4" stroke="#676767" stroke-width="0.9"/><circle cx="1263.1" cy="321.8" r="8" fill="#2a74c4" stroke="#676767" stroke-width="0.9"/><circle cx="1270.2" cy="318.2" r="8" fill="#2a74c4" stroke="#676767" stroke-width="0.9"/><circle cx="1277.3" cy="314.7" r="8" fill="#2a74c4" stroke="#676767" stroke-width="0.9"/><circle cx="1284.4" cy="320.0" r="8" fill="#2a74c4" stroke="#676767" stroke-width="0.9"/><circle cx="1291.6" cy="325.3" r="8" fill="#2a74c4" stroke="#676767" stroke-width="0.9"/><circle cx="1298.7" cy="333.2" r="8" fill="#2a74c4" stroke="#676767" stroke-width="0.9"/><circle cx="1304.0" cy="329.2" r="8" fill="#2a74c4" stroke="#676767" stroke-width="0.9"/><circle cx="1309.3" cy="325.3" r="8" fill="#2a74c4" stroke="#676767" stroke-width="0.9"/><circle cx="1312.9" cy="316.4" r="8" fill="#2a74c4" stroke="#676767" stroke-width="0.9"/><circle cx="1316.4" cy="307.6" r="8" fill="#2a74c4" stroke="#676767" stroke-width="0.9"/><circle cx="1321.8" cy="298.7" r="8" fill="#2a74c4" stroke="#676767" stroke-width="0.9"/><circle cx="1325.3" cy="293.3" r="8" fill="#2dd8c8" stroke="#676767" stroke-width="0.9"/><circle cx="1328.9" cy="289.8" r="8" fill="#2dd8c8" stroke="#676767" stroke-width="0.9"/><circle cx="1332.4" cy="282.7" r="8" fill="#e2304c" stroke="#676767" stroke-width="0.9"/><circle cx="1341.3" cy="275.6" r="8" fill="#e2304c" stroke="#676767" stroke-width="0.9"/><circle cx="1270.2" cy="373.3" r="8" fill="#2a74c4" stroke="#676767" stroke-width="0.9"/><circle cx="1273.8" cy="365.3" r="8" fill="#2a74c4" stroke="#676767" stroke-width="0.9"/><circle cx="1277.3" cy="357.3" r="8" fill="#2a74c4" stroke="#676767" stroke-width="0.9"/><circle cx="1282.7" cy="350.2" r="8" fill="#2a74c4" stroke="#676767" stroke-width="0.9"/><circle cx="1286.9" cy="344.9" r="8" fill="#1ee514" stroke="#676767" stroke-width="0.9"/><circle cx="1339.6" cy="343.1" r="8" fill="#e2304c" stroke="#676767" stroke-width="0.9"/><circle cx="1344.9" cy="334.2" r="8" fill="#e2304c" stroke="#676767" stroke-width="0.9"/><circle cx="1362.7" cy="302.2" r="8" fill="#a15a0e" stroke="#676767" stroke-width="0.9"/><circle cx="1356.6" cy="312.9" r="8" fill="#e2304c" stroke="#676767" stroke-width="0.9"/><circle cx="1391.1" cy="307.6" r="8" fill="#2a74c4" stroke="#676767" stroke-width="0.9"/><circle cx="1387.6" cy="314.7" r="8" fill="#2a74c4" stroke="#676767" stroke-width="0.9"/><circle cx="1384.0" cy="321.8" r="8" fill="#2a74c4" stroke="#676767" stroke-width="0.9"/><circle cx="1380.4" cy="328.9" r="8" fill="#2a74c4" stroke="#676767" stroke-width="0.9"/><circle cx="1376.0" cy="336.9" r="8" fill="#2a74c4" stroke="#676767" stroke-width="0.9"/><circle cx="1371.6" cy="344.9" r="8" fill="#2a74c4" stroke="#676767" stroke-width="0.9"/><circle cx="1368.0" cy="350.2" r="8" fill="#e2304c" stroke="#676767" stroke-width="0.9"/><circle cx="1362.7" cy="354.5" r="8" fill="#a15a0e" stroke="#676767" stroke-width="0.9"/><circle cx="1360.9" cy="360.9" r="8" fill="#e2304c" stroke="#676767" stroke-width="0.9"/><circle cx="1227.6" cy="401.8" r="8" fill="#2a74c4" stroke="#676767" stroke-width="0.9"/><circle cx="1236.4" cy="407.1" r="8" fill="#2a74c4" stroke="#676767" stroke-width="0.9"/><circle cx="1233.8" cy="414.2" r="8" fill="#2a74c4" stroke="#676767" stroke-width="0.9"/><circle cx="1231.1" cy="421.3" r="8" fill="#2a74c4" stroke="#676767" stroke-width="0.9"/><circle cx="1226.7" cy="427.6" r="8" fill="#2a74c4" stroke="#676767" stroke-width="0.9"/><circle cx="1222.2" cy="433.8" r="8" fill="#2a74c4" stroke="#676767" stroke-width="0.9"/><circle cx="1216.9" cy="438.2" r="8" fill="#2a74c4" stroke="#676767" stroke-width="0.9"/><circle cx="1211.6" cy="442.7" r="8" fill="#2a74c4" stroke="#676767" stroke-width="0.9"/><circle cx="1220.4" cy="449.8" r="8" fill="#1ee514" stroke="#676767" stroke-width="0.9"/><circle cx="1257.8" cy="391.1" r="8" fill="#2a74c4" stroke="#676767" stroke-width="0.9"/><circle cx="1263.1" cy="395.3" r="8" fill="#2a74c4" stroke="#676767" stroke-width="0.9"/><circle cx="1268.4" cy="399.4" r="8" fill="#2a74c4" stroke="#676767" stroke-width="0.9"/><circle cx="1273.8" cy="403.6" r="8" fill="#2a74c4" stroke="#676767" stroke-width="0.9"/><circle cx="1280.9" cy="408.0" r="8" fill="#2a74c4" stroke="#676767" stroke-width="0.9"/><circle cx="1288.0" cy="412.4" r="8" fill="#2a74c4" stroke="#676767" stroke-width="0.9"/><circle cx="1296.9" cy="408.9" r="8" fill="#2a74c4" stroke="#676767" stroke-width="0.9"/><circle cx="1302.2" cy="401.8" r="8" fill="#dad40c" stroke="#676767" stroke-width="0.9"/><circle cx="1309.3" cy="392.9" r="8" fill="#2a74c4" stroke="#676767" stroke-width="0.9"/><circle cx="1313.5" cy="387.6" r="8" fill="#2a74c4" stroke="#676767" stroke-width="0.9"/><circle cx="1317.6" cy="382.2" r="8" fill="#2a74c4" stroke="#676767" stroke-width="0.9"/><circle cx="1321.8" cy="376.9" r="8" fill="#2a74c4" stroke="#676767" stroke-width="0.9"/><circle cx="1327.1" cy="371.6" r="8" fill="#2dd8c8" stroke="#676767" stroke-width="0.9"/><circle cx="1337.8" cy="375.1" r="8" fill="#e2304c" stroke="#676767" stroke-width="0.9"/><circle cx="1342.5" cy="379.9" r="8" fill="#e2304c" stroke="#676767" stroke-width="0.9"/><circle cx="1347.3" cy="384.6" r="8" fill="#e2304c" stroke="#676767" stroke-width="0.9"/><circle cx="1352.0" cy="389.3" r="8" fill="#e2304c" stroke="#676767" stroke-width="0.9"/><circle cx="1357.3" cy="395.6" r="8" fill="#e2304c" stroke="#676767" stroke-width="0.9"/><circle cx="1362.7" cy="401.8" r="8" fill="#e2304c" stroke="#676767" stroke-width="0.9"/><circle cx="1364.4" cy="405.3" r="8" fill="#a15a0e" stroke="#676767" stroke-width="0.9"/><circle cx="1354.8" cy="415.3" r="8" fill="#e2304c" stroke="#676767" stroke-width="0.9"/><circle cx="1369.8" cy="410.7" r="8" fill="#2a74c4" stroke="#676767" stroke-width="0.9"/><circle cx="1376.0" cy="417.8" r="8" fill="#2a74c4" stroke="#676767" stroke-width="0.9"/><circle cx="1382.2" cy="424.9" r="8" fill="#2a74c4" stroke="#676767" stroke-width="0.9"/><circle cx="1295.1" cy="417.8" r="8" fill="#2a74c4" stroke="#676767" stroke-width="0.9"/><circle cx="1288.0" cy="423.1" r="8" fill="#2a74c4" stroke="#676767" stroke-width="0.9"/><circle cx="1280.9" cy="428.4" r="8" fill="#2a74c4" stroke="#676767" stroke-width="0.9"/><circle cx="1272.0" cy="432.0" r="8" fill="#2a74c4" stroke="#676767" stroke-width="0.9"/><circle cx="1263.1" cy="435.6" r="8" fill="#2a74c4" stroke="#676767" stroke-width="0.9"/><circle cx="1257.8" cy="440.9" r="8" fill="#2a74c4" stroke="#676767" stroke-width="0.9"/><circle cx="1252.4" cy="446.2" r="8" fill="#2a74c4" stroke="#676767" stroke-width="0.9"/><circle cx="1387.6" cy="401.8" r="8" fill="#2a74c4" stroke="#676767" stroke-width="0.9"/><circle cx="1392.0" cy="395.1" r="8" fill="#2a74c4" stroke="#676767" stroke-width="0.9"/><circle cx="1396.4" cy="388.4" r="8" fill="#2a74c4" stroke="#676767" stroke-width="0.9"/><circle cx="1400.9" cy="381.8" r="8" fill="#2a74c4" stroke="#676767" stroke-width="0.9"/><circle cx="1405.3" cy="375.1" r="8" fill="#2a74c4" stroke="#676767" stroke-width="0.9"/><circle cx="1409.8" cy="369.8" r="8" fill="#2a74c4" stroke="#676767" stroke-width="0.9"/><circle cx="1414.2" cy="364.4" r="8" fill="#2a74c4" stroke="#676767" stroke-width="0.9"/><circle cx="1421.3" cy="350.2" r="8" fill="#e2304c" stroke="#676767" stroke-width="0.9"/><circle cx="1425.8" cy="343.1" r="8" fill="#e2304c" stroke="#676767" stroke-width="0.9"/><circle cx="1430.2" cy="336.0" r="8" fill="#e2304c" stroke="#676767" stroke-width="0.9"/><circle cx="1437.3" cy="332.4" r="8" fill="#e2304c" stroke="#676767" stroke-width="0.9"/><circle cx="1444.4" cy="328.9" r="8" fill="#e2304c" stroke="#676767" stroke-width="0.9"/><circle cx="1453.3" cy="331.6" r="8" fill="#e2304c" stroke="#676767" stroke-width="0.9"/><circle cx="1462.2" cy="334.2" r="8" fill="#e2304c" stroke="#676767" stroke-width="0.9"/><circle cx="1468.1" cy="337.2" r="8" fill="#e2304c" stroke="#676767" stroke-width="0.9"/><circle cx="1474.1" cy="340.1" r="8" fill="#e2304c" stroke="#676767" stroke-width="0.9"/><circle cx="1480.0" cy="343.1" r="8" fill="#e2304c" stroke="#676767" stroke-width="0.9"/><circle cx="1488.9" cy="346.7" r="8" fill="#e2304c" stroke="#676767" stroke-width="0.9"/><circle cx="1497.8" cy="350.2" r="8" fill="#e2304c" stroke="#676767" stroke-width="0.9"/><circle cx="1503.7" cy="353.8" r="8" fill="#e2304c" stroke="#676767" stroke-width="0.9"/><circle cx="1509.6" cy="357.3" r="8" fill="#e2304c" stroke="#676767" stroke-width="0.9"/><circle cx="1515.6" cy="360.9" r="8" fill="#e2304c" stroke="#676767" stroke-width="0.9"/><circle cx="1521.5" cy="364.4" r="8" fill="#e2304c" stroke="#676767" stroke-width="0.9"/><circle cx="1527.4" cy="368.0" r="8" fill="#e2304c" stroke="#676767" stroke-width="0.9"/><circle cx="1533.3" cy="371.6" r="8" fill="#e2304c" stroke="#676767" stroke-width="0.9"/><circle cx="1538.7" cy="376.9" r="8" fill="#e2304c" stroke="#676767" stroke-width="0.9"/><circle cx="1544.0" cy="382.2" r="8" fill="#e2304c" stroke="#676767" stroke-width="0.9"/><circle cx="1547.6" cy="389.3" r="8" fill="#1ee514" stroke="#676767" stroke-width="0.9"/><circle cx="1552.9" cy="396.4" r="8" fill="#1ee514" stroke="#676767" stroke-width="0.9"/><circle cx="1558.2" cy="403.6" r="8" fill="#1ee514" stroke="#676767" stroke-width="0.9"/><circle cx="1563.6" cy="410.7" r="8" fill="#1ee514" stroke="#676767" stroke-width="0.9"/><circle cx="1568.9" cy="417.8" r="8" fill="#1ee514" stroke="#676767" stroke-width="0.9"/><circle cx="1571.6" cy="424.9" r="8" fill="#1ee514" stroke="#676767" stroke-width="0.9"/><circle cx="1574.2" cy="432.0" r="8" fill="#1ee514" stroke="#676767" stroke-width="0.9"/><circle cx="1573.6" cy="439.1" r="8" fill="#1ee514" stroke="#676767" stroke-width="0.9"/><circle cx="1573.0" cy="446.2" r="8" fill="#1ee514" stroke="#676767" stroke-width="0.9"/><circle cx="1572.4" cy="453.3" r="8" fill="#1ee514" stroke="#676767" stroke-width="0.9"/><circle cx="1573.0" cy="460.4" r="8" fill="#1ee514" stroke="#676767" stroke-width="0.9"/><circle cx="1573.6" cy="467.6" r="8" fill="#1ee514" stroke="#676767" stroke-width="0.9"/><circle cx="1574.2" cy="474.7" r="8" fill="#1ee514" stroke="#676767" stroke-width="0.9"/><circle cx="1576.9" cy="480.0" r="8" fill="#1ee514" stroke="#676767" stroke-width="0.9"/><circle cx="1579.6" cy="485.3" r="8" fill="#1ee514" stroke="#676767" stroke-width="0.9"/><circle cx="1588.4" cy="488.9" r="8" fill="#1ee514" stroke="#676767" stroke-width="0.9"/><circle cx="1597.3" cy="492.4" r="8" fill="#1ee514" stroke="#676767" stroke-width="0.9"/><circle cx="1604.4" cy="496.0" r="8" fill="#1ee514" stroke="#676767" stroke-width="0.9"/><circle cx="1611.6" cy="499.6" r="8" fill="#1ee514" stroke="#676767" stroke-width="0.9"/><circle cx="1522.7" cy="382.2" r="8" fill="#e2304c" stroke="#676767" stroke-width="0.9"/><circle cx="1517.9" cy="387.0" r="8" fill="#e2304c" stroke="#676767" stroke-width="0.9"/><circle cx="1513.2" cy="391.7" r="8" fill="#e2304c" stroke="#676767" stroke-width="0.9"/><circle cx="1508.4" cy="396.4" r="8" fill="#e2304c" stroke="#676767" stroke-width="0.9"/><circle cx="1503.7" cy="402.4" r="8" fill="#e2304c" stroke="#676767" stroke-width="0.9"/><circle cx="1499.0" cy="408.3" r="8" fill="#e2304c" stroke="#676767" stroke-width="0.9"/><circle cx="1494.2" cy="414.2" r="8" fill="#e2304c" stroke="#676767" stroke-width="0.9"/><circle cx="1489.5" cy="420.1" r="8" fill="#e2304c" stroke="#676767" stroke-width="0.9"/><circle cx="1484.7" cy="426.1" r="8" fill="#e2304c" stroke="#676767" stroke-width="0.9"/><circle cx="1480.0" cy="432.0" r="8" fill="#e2304c" stroke="#676767" stroke-width="0.9"/><circle cx="1475.3" cy="436.7" r="8" fill="#e2304c" stroke="#676767" stroke-width="0.9"/><circle cx="1470.5" cy="441.5" r="8" fill="#e2304c" stroke="#676767" stroke-width="0.9"/><circle cx="1465.8" cy="446.2" r="8" fill="#e2304c" stroke="#676767" stroke-width="0.9"/><circle cx="1459.6" cy="452.4" r="8" fill="#e2304c" stroke="#676767" stroke-width="0.9"/><circle cx="1453.3" cy="458.7" r="8" fill="#e2304c" stroke="#676767" stroke-width="0.9"/><circle cx="1426.7" cy="364.4" r="8" fill="#e2304c" stroke="#676767" stroke-width="0.9"/><circle cx="1434.7" cy="369.8" r="8" fill="#e2304c" stroke="#676767" stroke-width="0.9"/><circle cx="1442.7" cy="375.1" r="8" fill="#e2304c" stroke="#676767" stroke-width="0.9"/><circle cx="1455.1" cy="385.8" r="8" fill="#1ee514" stroke="#676767" stroke-width="0.9"/><circle cx="1448.0" cy="392.9" r="8" fill="#e2304c" stroke="#676767" stroke-width="0.9"/><circle cx="1442.7" cy="397.3" r="8" fill="#e2304c" stroke="#676767" stroke-width="0.9"/><circle cx="1437.3" cy="401.8" r="8" fill="#e2304c" stroke="#676767" stroke-width="0.9"/><circle cx="1432.9" cy="408.0" r="8" fill="#e2304c" stroke="#676767" stroke-width="0.9"/><circle cx="1428.4" cy="414.2" r="8" fill="#e2304c" stroke="#676767" stroke-width="0.9"/><circle cx="1423.1" cy="428.4" r="8" fill="#1ee514" stroke="#676767" stroke-width="0.9"/><circle cx="1565.3" cy="424.9" r="8" fill="#1ee514" stroke="#676767" stroke-width="0.9"/><circle cx="1558.8" cy="428.4" r="8" fill="#1ee514" stroke="#676767" stroke-width="0.9"/><circle cx="1552.3" cy="432.0" r="8" fill="#1ee514" stroke="#676767" stroke-width="0.9"/><circle cx="1545.8" cy="435.6" r="8" fill="#1ee514" stroke="#676767" stroke-width="0.9"/><circle cx="1536.9" cy="446.2" r="8" fill="#e2304c" stroke="#676767" stroke-width="0.9"/><circle cx="1532.1" cy="451.0" r="8" fill="#e2304c" stroke="#676767" stroke-width="0.9"/><circle cx="1527.4" cy="455.7" r="8" fill="#e2304c" stroke="#676767" stroke-width="0.9"/><circle cx="1522.7" cy="460.4" r="8" fill="#e2304c" stroke="#676767" stroke-width="0.9"/><circle cx="1517.9" cy="466.4" r="8" fill="#e2304c" stroke="#676767" stroke-width="0.9"/><circle cx="1513.2" cy="472.3" r="8" fill="#e2304c" stroke="#676767" stroke-width="0.9"/><circle cx="1508.4" cy="478.2" r="8" fill="#e2304c" stroke="#676767" stroke-width="0.9"/><circle cx="1503.7" cy="484.1" r="8" fill="#e2304c" stroke="#676767" stroke-width="0.9"/><circle cx="1499.0" cy="490.1" r="8" fill="#e2304c" stroke="#676767" stroke-width="0.9"/><circle cx="1494.2" cy="496.0" r="8" fill="#e2304c" stroke="#676767" stroke-width="0.9"/><circle cx="1529.8" cy="467.6" r="8" fill="#e2304c" stroke="#676767" stroke-width="0.9"/><circle cx="1535.1" cy="471.1" r="8" fill="#e2304c" stroke="#676767" stroke-width="0.9"/><circle cx="1540.4" cy="474.7" r="8" fill="#e2304c" stroke="#676767" stroke-width="0.9"/><circle cx="1547.6" cy="481.8" r="8" fill="#1ee514" stroke="#676767" stroke-width="0.9"/><circle cx="1552.9" cy="487.1" r="8" fill="#1ee514" stroke="#676767" stroke-width="0.9"/><circle cx="1558.2" cy="492.4" r="8" fill="#1ee514" stroke="#676767" stroke-width="0.9"/><circle cx="1563.6" cy="496.0" r="8" fill="#1ee514" stroke="#676767" stroke-width="0.9"/><circle cx="1568.9" cy="499.6" r="8" fill="#1ee514" stroke="#676767" stroke-width="0.9"/><circle cx="1394.7" cy="433.8" r="8" fill="#2a74c4" stroke="#676767" stroke-width="0.9"/><circle cx="1401.8" cy="440.0" r="8" fill="#2a74c4" stroke="#676767" stroke-width="0.9"/><circle cx="1408.9" cy="446.2" r="8" fill="#2a74c4" stroke="#676767" stroke-width="0.9"/><circle cx="1423.1" cy="456.9" r="8" fill="#e2304c" stroke="#676767" stroke-width="0.9"/><circle cx="1429.0" cy="461.6" r="8" fill="#e2304c" stroke="#676767" stroke-width="0.9"/><circle cx="1435.0" cy="466.4" r="8" fill="#e2304c" stroke="#676767" stroke-width="0.9"/><circle cx="1440.9" cy="471.1" r="8" fill="#e2304c" stroke="#676767" stroke-width="0.9"/><circle cx="1445.6" cy="475.9" r="8" fill="#e2304c" stroke="#676767" stroke-width="0.9"/><circle cx="1450.4" cy="480.6" r="8" fill="#e2304c" stroke="#676767" stroke-width="0.9"/><circle cx="1455.1" cy="485.3" r="8" fill="#e2304c" stroke="#676767" stroke-width="0.9"/><circle cx="1332.4" cy="444.4" r="8" fill="#e2304c" stroke="#676767" stroke-width="0.9"/><circle cx="1344.9" cy="455.1" r="8" fill="#e2304c" stroke="#676767" stroke-width="0.9"/><circle cx="1320.0" cy="462.2" r="8" fill="#2a74c4" stroke="#676767" stroke-width="0.9"/><circle cx="1325.3" cy="456.9" r="8" fill="#2a74c4" stroke="#676767" stroke-width="0.9"/><circle cx="1241.8" cy="458.7" r="8" fill="#2a74c4" stroke="#676767" stroke-width="0.9"/><circle cx="1236.4" cy="464.9" r="8" fill="#2a74c4" stroke="#676767" stroke-width="0.9"/><circle cx="1231.1" cy="471.1" r="8" fill="#2a74c4" stroke="#676767" stroke-width="0.9"/><circle cx="1226.7" cy="478.2" r="8" fill="#2a74c4" stroke="#676767" stroke-width="0.9"/><circle cx="1222.2" cy="485.3" r="8" fill="#2a74c4" stroke="#676767" stroke-width="0.9"/><circle cx="1215.1" cy="494.2" r="8" fill="#1ee514" stroke="#676767" stroke-width="0.9"/><circle cx="1206.2" cy="503.1" r="8" fill="#2a74c4" stroke="#676767" stroke-width="0.9"/><circle cx="1215.1" cy="505.8" r="8" fill="#2a74c4" stroke="#676767" stroke-width="0.9"/><circle cx="1224.0" cy="508.4" r="8" fill="#2a74c4" stroke="#676767" stroke-width="0.9"/><circle cx="1231.1" cy="510.2" r="8" fill="#2a74c4" stroke="#676767" stroke-width="0.9"/><circle cx="1238.2" cy="512.0" r="8" fill="#2a74c4" stroke="#676767" stroke-width="0.9"/><circle cx="1245.3" cy="513.8" r="8" fill="#2a74c4" stroke="#676767" stroke-width="0.9"/><circle cx="1254.2" cy="516.4" r="8" fill="#2a74c4" stroke="#676767" stroke-width="0.9"/><circle cx="1263.1" cy="519.1" r="8" fill="#2a74c4" stroke="#676767" stroke-width="0.9"/><circle cx="1270.2" cy="519.1" r="8" fill="#2a74c4" stroke="#676767" stroke-width="0.9"/><circle cx="1277.3" cy="519.1" r="8" fill="#2a74c4" stroke="#676767" stroke-width="0.9"/><circle cx="1286.2" cy="519.1" r="8" fill="#2a74c4" stroke="#676767" stroke-width="0.9"/><circle cx="1295.1" cy="519.1" r="8" fill="#2a74c4" stroke="#676767" stroke-width="0.9"/><circle cx="1300.4" cy="517.3" r="8" fill="#dad40c" stroke="#676767" stroke-width="0.9"/><circle cx="1309.3" cy="515.6" r="8" fill="#2a74c4" stroke="#676767" stroke-width="0.9"/><circle cx="1315.6" cy="512.9" r="8" fill="#2a74c4" stroke="#676767" stroke-width="0.9"/><circle cx="1321.8" cy="510.2" r="8" fill="#2a74c4" stroke="#676767" stroke-width="0.9"/><circle cx="1327.8" cy="504.9" r="8" fill="#2dd8c8" stroke="#676767" stroke-width="0.9"/><circle cx="1304.0" cy="524.4" r="8" fill="#2a74c4" stroke="#676767" stroke-width="0.9"/><circle cx="1305.8" cy="535.1" r="8" fill="#2a74c4" stroke="#676767" stroke-width="0.9"/><circle cx="1259.6" cy="499.6" r="8" fill="#2a74c4" stroke="#676767" stroke-width="0.9"/><circle cx="1264.9" cy="469.3" r="8" fill="#2a74c4" stroke="#676767" stroke-width="0.9"/><circle cx="1272.6" cy="471.7" r="8" fill="#2a74c4" stroke="#676767" stroke-width="0.9"/><circle cx="1280.3" cy="474.1" r="8" fill="#2a74c4" stroke="#676767" stroke-width="0.9"/><circle cx="1288.0" cy="476.4" r="8" fill="#2a74c4" stroke="#676767" stroke-width="0.9"/><circle cx="1295.1" cy="479.4" r="8" fill="#2a74c4" stroke="#676767" stroke-width="0.9"/><circle cx="1302.2" cy="482.4" r="8" fill="#2a74c4" stroke="#676767" stroke-width="0.9"/><circle cx="1309.3" cy="485.3" r="8" fill="#2a74c4" stroke="#676767" stroke-width="0.9"/><circle cx="1318.2" cy="494.2" r="8" fill="#1ee514" stroke="#676767" stroke-width="0.9"/><circle cx="1366.2" cy="464.0" r="8" fill="#e2304c" stroke="#676767" stroke-width="0.9"/><circle cx="1361.5" cy="469.9" r="8" fill="#e2304c" stroke="#676767" stroke-width="0.9"/><circle cx="1356.7" cy="475.9" r="8" fill="#e2304c" stroke="#676767" stroke-width="0.9"/><circle cx="1352.0" cy="481.8" r="8" fill="#e2304c" stroke="#676767" stroke-width="0.9"/><circle cx="1348.4" cy="487.7" r="8" fill="#e2304c" stroke="#676767" stroke-width="0.9"/><circle cx="1344.9" cy="493.6" r="8" fill="#e2304c" stroke="#676767" stroke-width="0.9"/><circle cx="1341.3" cy="499.6" r="8" fill="#e2304c" stroke="#676767" stroke-width="0.9"/><circle cx="1341.3" cy="501.3" r="8" fill="#e2304c" stroke="#676767" stroke-width="0.9"/><circle cx="1348.4" cy="507.6" r="8" fill="#e2304c" stroke="#676767" stroke-width="0.9"/><circle cx="1355.6" cy="513.8" r="8" fill="#e2304c" stroke="#676767" stroke-width="0.9"/><circle cx="1361.8" cy="516.4" r="8" fill="#e2304c" stroke="#676767" stroke-width="0.9"/><circle cx="1368.0" cy="519.1" r="8" fill="#e2304c" stroke="#676767" stroke-width="0.9"/><circle cx="1373.3" cy="520.9" r="8" fill="#2a74c4" stroke="#676767" stroke-width="0.9"/><circle cx="1379.3" cy="523.9" r="8" fill="#2a74c4" stroke="#676767" stroke-width="0.9"/><circle cx="1385.2" cy="526.8" r="8" fill="#2a74c4" stroke="#676767" stroke-width="0.9"/><circle cx="1391.1" cy="529.8" r="8" fill="#2a74c4" stroke="#676767" stroke-width="0.9"/><circle cx="1400.0" cy="532.4" r="8" fill="#2a74c4" stroke="#676767" stroke-width="0.9"/><circle cx="1408.9" cy="535.1" r="8" fill="#2a74c4" stroke="#676767" stroke-width="0.9"/><circle cx="1412.4" cy="528.9" r="8" fill="#2a74c4" stroke="#676767" stroke-width="0.9"/><circle cx="1416.0" cy="522.7" r="8" fill="#2a74c4" stroke="#676767" stroke-width="0.9"/><circle cx="1423.1" cy="513.8" r="8" fill="#e2304c" stroke="#676767" stroke-width="0.9"/><circle cx="1426.7" cy="506.7" r="8" fill="#e2304c" stroke="#676767" stroke-width="0.9"/><circle cx="1430.2" cy="499.6" r="8" fill="#e2304c" stroke="#676767" stroke-width="0.9"/><rect x="1128.5" y="191.5" width="66" height="36.5" rx="3" fill="rgba(255,255,255,0.92)"/><rect x="1123" y="598" width="516" height="19" fill="rgba(248,248,248,0.75)"/><rect x="1123.5" y="186.5" width="515" height="430" fill="none" stroke="#777" stroke-width="1" stroke-dasharray="2,2"/></svg><svg style="position:absolute;left:1178.5px;top:206px" width="10" height="6.5"><polyline points="1,1 5.0,5.5 9,1" fill="none" stroke="#71808f" stroke-width="1.6"/></svg><span id="t0" class="t" style="left:10.0px;top:9.85px;font-size:14px;font-weight:normal;color:#3b3b3b;letter-spacing:0.161px;">DINOB | DINOB (1.0.0.0)</span><span id="t1" class="t" style="left:26.3px;top:50.20px;font-size:13px;font-weight:bold;color:#ffffff;letter-spacing:-0.419px;">Startmenü</span><span id="t2" class="t" style="left:108.5px;top:50.20px;font-size:13px;font-weight:bold;color:#ffffff;letter-spacing:-0.294px;">Info</span><span id="t3" class="t" style="left:172.2px;top:50.20px;font-size:13px;font-weight:bold;color:#ffffff;letter-spacing:-0.431px;">Alltägliches</span><span id="t4" class="t" style="left:280.3px;top:50.20px;font-size:13px;font-weight:bold;color:#ffffff;letter-spacing:-0.440px;">Auswertungen</span><span id="t5" class="t" style="left:406.3px;top:50.20px;font-size:13px;font-weight:bold;color:#ffffff;letter-spacing:-0.496px;">Lager-/Rechnungswesen</span><span id="t6" class="t" style="left:566.0px;top:50.20px;font-size:13px;font-weight:bold;color:#ffffff;letter-spacing:-0.556px;">Planung</span><span id="t7" class="t" style="left:654.3px;top:50.20px;font-size:13px;font-weight:bold;color:#ffffff;letter-spacing:-0.398px;">Stammdaten</span><span id="t8" class="t" style="left:769.6px;top:50.20px;font-size:13px;font-weight:bold;color:#ffffff;letter-spacing:-0.652px;">Kataster</span><span id="t9" class="t" style="left:1344.0px;top:50.30px;font-size:13px;font-weight:bold;color:#ffffff;letter-spacing:-0.643px;">Jahr: 2021</span><span id="t10" class="t" style="left:1458.4px;top:50.30px;font-size:13px;font-weight:bold;color:#ffffff;letter-spacing:-0.213px;">Mandant: Dinob</span><span id="t11" class="t" style="left:1611.7px;top:50.84px;font-size:12px;font-weight:normal;-webkit-text-stroke:0.32px currentColor;color:#8a99a6;letter-spacing:0.304px;">MH</span><span id="t12" class="t" style="left:1634.8px;top:39.60px;font-size:8.5px;font-weight:normal;color:#666;letter-spacing:0.000px;">0</span><span id="t13" class="t" style="left:108.6px;top:96.66px;font-size:24.5px;font-weight:normal;color:#8896a2;letter-spacing:-0.655px;">Kataster</span><span id="t14" class="t" style="left:216.0px;top:96.24px;font-size:25px;font-weight:bold;color:#71839a;letter-spacing:-0.743px;">Baum</span><span id="t15" class="t" style="left:1459.5px;top:101.16px;font-size:16px;font-weight:bold;color:#9aa7b1;letter-spacing:0.000px;">?</span><span id="t16" class="t" style="left:93.0px;top:151.10px;font-size:15px;font-weight:normal;color:#1c74c6;letter-spacing:0.119px;">Kopfdaten</span><span id="t17" class="t" style="left:204.0px;top:151.10px;font-size:15px;font-weight:normal;color:#7a8895;letter-spacing:0.079px;">Kontrolldaten</span><span id="t18" class="t" style="left:1144.6px;top:151.70px;font-size:15px;font-weight:normal;color:#1c74c6;letter-spacing:0.123px;">Karte</span><span id="t19" class="t" style="left:1223.0px;top:151.70px;font-size:15px;font-weight:normal;color:#7a8895;letter-spacing:0.089px;">Medien (0)</span><span id="t20" class="t" style="left:1338.0px;top:151.70px;font-size:15px;font-weight:normal;color:#7a8895;letter-spacing:0.036px;">Aufträge (0)</span><span id="t21" class="t" style="left:1460.5px;top:151.70px;font-size:15px;font-weight:normal;color:#7a8895;letter-spacing:-0.439px;">Statistik</span><span id="t22" class="t" style="left:147.5px;top:209.00px;font-size:13px;font-weight:bold;color:#fff;letter-spacing:-0.348px;">Neuer Datensatz</span><span id="t23" class="t" style="left:330.6px;top:209.00px;font-size:13px;font-weight:bold;color:#fff;letter-spacing:-0.452px;">Speichern ohne Feststellung</span><span id="t24" class="t" style="left:526.5px;top:209.00px;font-size:13px;font-weight:normal;-webkit-text-stroke:0.45px currentColor;color:#71808f;letter-spacing:0.229px;">Mehr...</span><span id="t25" class="t" style="left:934.0px;top:209.00px;font-size:13px;font-weight:normal;color:#a6aeb5;letter-spacing:-0.355px;">Suche...</span><span id="t26" class="t" style="left:88.4px;top:263.67px;font-size:11.5px;font-weight:normal;-webkit-text-stroke:0.32px currentColor;color:#6a7d8f;letter-spacing:0.116px;">Objekt-Nr</span><span id="t27" class="t" style="left:188.7px;top:263.67px;font-size:11.5px;font-weight:normal;-webkit-text-stroke:0.32px currentColor;color:#6a7d8f;letter-spacing:-0.058px;">Objektart</span><span id="t28" class="t" style="left:488.3px;top:263.77px;font-size:11.5px;font-weight:normal;-webkit-text-stroke:0.32px currentColor;color:#6a7d8f;letter-spacing:-0.081px;">Letzte Kontrolle</span><span id="t29" class="t" style="left:688.4px;top:263.77px;font-size:11.5px;font-weight:normal;-webkit-text-stroke:0.32px currentColor;color:#6a7d8f;letter-spacing:-0.098px;">Nächste Kontrolle</span><span id="t30" class="t" style="left:94.3px;top:290.30px;font-size:13px;font-weight:normal;-webkit-text-stroke:0.22px currentColor;color:#8a9097;letter-spacing:0.000px;">5</span><span id="t31" class="t" style="left:194.5px;top:290.30px;font-size:13px;font-weight:normal;-webkit-text-stroke:0.22px currentColor;color:#2b3338;letter-spacing:0.078px;">Birke</span><span id="t32" class="t" style="left:494.4px;top:289.50px;font-size:13px;font-weight:normal;-webkit-text-stroke:0.22px currentColor;color:#8a9097;letter-spacing:-0.393px;">05.03.2021</span><span id="t33" class="t" style="left:694.1px;top:289.50px;font-size:13px;font-weight:normal;-webkit-text-stroke:0.22px currentColor;color:#2b3338;letter-spacing:-0.337px;">14.05.2009</span><span id="t34" class="t" style="left:88.4px;top:335.27px;font-size:11.5px;font-weight:normal;-webkit-text-stroke:0.32px currentColor;color:#6a7d8f;letter-spacing:0.038px;">Kontrollart</span><span id="t35" class="t" style="left:488.7px;top:335.47px;font-size:11.5px;font-weight:normal;-webkit-text-stroke:0.32px currentColor;color:#6a7d8f;letter-spacing:0.012px;">Kontrolleur</span><span id="t36" class="t" style="left:94.3px;top:362.00px;font-size:13px;font-weight:normal;-webkit-text-stroke:0.22px currentColor;color:#8a9097;letter-spacing:0.213px;">Intensivuntersuchung</span><span id="t37" class="t" style="left:494.2px;top:361.00px;font-size:13px;font-weight:normal;-webkit-text-stroke:0.22px currentColor;color:#8a9097;letter-spacing:0.029px;">Duddel, Frank</span><span id="t38" class="t" style="left:88.4px;top:406.47px;font-size:11.5px;font-weight:normal;-webkit-text-stroke:0.32px currentColor;color:#6a7d8f;letter-spacing:-0.111px;">Ortsdetails</span><span id="t39" class="t" style="left:488.7px;top:406.27px;font-size:11.5px;font-weight:normal;-webkit-text-stroke:0.32px currentColor;color:#6a7d8f;letter-spacing:-0.255px;">Längengrad</span><span id="t40" class="t" style="left:648.5px;top:406.27px;font-size:11.5px;font-weight:normal;-webkit-text-stroke:0.32px currentColor;color:#6a7d8f;letter-spacing:-0.116px;">Breitengrad</span><span id="t41" class="t" style="left:808.5px;top:406.69px;font-size:11px;font-weight:normal;-webkit-text-stroke:0.32px currentColor;color:#6a7d8f;letter-spacing:0.000px;">KM</span><span id="t42" class="t" style="left:94.3px;top:434.00px;font-size:13px;font-weight:normal;-webkit-text-stroke:0.22px currentColor;color:#8a9097;letter-spacing:0.013px;white-space:pre;">Spielplatz Graben  Am Lohschloß</span><span id="t43" class="t" style="left:494.0px;top:433.20px;font-size:13px;font-weight:normal;-webkit-text-stroke:0.22px currentColor;color:#2b3338;letter-spacing:-0.189px;">9,44630026817322</span><span id="t44" class="t" style="left:654.5px;top:433.20px;font-size:13px;font-weight:normal;-webkit-text-stroke:0.22px currentColor;color:#2b3338;letter-spacing:-0.222px;">50,6261280266795</span><span id="t45" class="t" style="left:813.5px;top:433.20px;font-size:13px;font-weight:normal;-webkit-text-stroke:0.22px currentColor;color:#2b3338;letter-spacing:-0.950px;">1,196</span><span id="t46" class="t" style="left:76.3px;top:631.94px;font-size:12px;font-weight:normal;color:#6f7c87;letter-spacing:-0.467px;">Generation:</span><span id="t47" class="t" style="left:171.9px;top:631.00px;font-size:13px;font-weight:normal;-webkit-text-stroke:0.45px currentColor;color:#5f6e7a;letter-spacing:0.000px;">2</span><span id="t48" class="t" style="left:222.1px;top:631.84px;font-size:12px;font-weight:normal;color:#6f7c87;letter-spacing:-0.237px;">11.03.2016 08:53:57 / Stephan Wies</span><span id="t49" class="t" style="left:423.7px;top:631.84px;font-size:12px;font-weight:normal;color:#6f7c87;letter-spacing:-0.274px;">Letzte Kontrolle:</span><span id="t50" class="t" style="left:507.8px;top:631.84px;font-size:12px;font-weight:normal;-webkit-text-stroke:0.32px currentColor;color:#5b6a76;letter-spacing:-0.387px;">05.03.2021</span><span id="t51" class="t" style="left:580.3px;top:631.84px;font-size:12px;font-weight:normal;color:#6f7c87;letter-spacing:-0.454px;">Nächste Kontrolle:</span><span id="t52" class="t" style="left:673.6px;top:631.84px;font-size:12px;font-weight:normal;-webkit-text-stroke:0.32px currentColor;color:#e0283c;letter-spacing:-0.343px;">14.05.2009</span><span id="t53" class="t" style="left:745.8px;top:631.84px;font-size:12px;font-weight:normal;color:#6f7c87;letter-spacing:-0.185px;">Kontrolleur:</span><span id="t54" class="t" style="left:808.0px;top:631.84px;font-size:12px;font-weight:normal;-webkit-text-stroke:0.32px currentColor;color:#5b6a76;letter-spacing:-0.139px;">Duddel, Frank</span><span id="t55" class="t" style="left:898.3px;top:631.84px;font-size:12px;font-weight:normal;color:#6f7c87;letter-spacing:-0.245px;">Kontrollart:</span><span id="t56" class="t" style="left:956.6px;top:631.84px;font-size:12px;font-weight:normal;-webkit-text-stroke:0.32px currentColor;color:#5b6a76;letter-spacing:0.237px;">Intensivuntersuchung</span><span id="t57" class="t" style="left:72.0px;top:659.30px;font-size:13px;font-weight:normal;color:#ffffff;letter-spacing:0.120px;">ObjektNr</span><span id="t58" class="t" style="left:170.8px;top:659.30px;font-size:13px;font-weight:normal;color:#ffffff;letter-spacing:-0.004px;">Objektart</span><span id="t59" class="t" style="left:417.5px;top:659.30px;font-size:13px;font-weight:normal;color:#ffffff;letter-spacing:-0.163px;">Ortsdetails</span><span id="t60" class="t" style="left:664.0px;top:659.30px;font-size:13px;font-weight:normal;color:#ffffff;letter-spacing:-0.791px;">Gen.</span><span id="t61" class="t" style="left:729.6px;top:659.30px;font-size:13px;font-weight:normal;color:#ffffff;letter-spacing:0.033px;">Letzte Kontrolle</span><span id="t62" class="t" style="left:894.2px;top:659.30px;font-size:13px;font-weight:normal;color:#ffffff;letter-spacing:-0.017px;">Nächste Kontrolle</span><span id="t63" class="t" style="left:1058.5px;top:659.30px;font-size:13px;font-weight:normal;color:#ffffff;letter-spacing:0.066px;">Kontrolleur</span><span id="t64" class="t" style="left:1305.0px;top:659.30px;font-size:13px;font-weight:normal;color:#ffffff;letter-spacing:0.136px;">Kontrollart</span><span id="t65" class="t" style="left:1551.4px;top:659.30px;font-size:13px;font-weight:normal;color:#ffffff;letter-spacing:0.103px;">Kilometer</span><span id="t66" class="t" style="left:93.8px;top:686.30px;font-size:13px;font-weight:normal;color:#9ba3aa;letter-spacing:-0.455px;">Suche...</span><span id="t67" class="t" style="left:191.5px;top:686.30px;font-size:13px;font-weight:normal;color:#9ba3aa;letter-spacing:-0.412px;">Suche...</span><span id="t68" class="t" style="left:438.0px;top:686.30px;font-size:13px;font-weight:normal;color:#9ba3aa;letter-spacing:-0.412px;">Suche...</span><span id="t69" class="t" style="left:686.0px;top:686.30px;font-size:13px;font-weight:normal;color:#9ba3aa;letter-spacing:0.000px;width:8px;overflow:hidden;">Su</span><span id="t70" class="t" style="left:750.0px;top:686.30px;font-size:13px;font-weight:normal;color:#9ba3aa;letter-spacing:-0.412px;">Suche...</span><span id="t71" class="t" style="left:914.0px;top:686.30px;font-size:13px;font-weight:normal;color:#9ba3aa;letter-spacing:-0.412px;">Suche...</span><span id="t72" class="t" style="left:1079.0px;top:686.30px;font-size:13px;font-weight:normal;color:#9ba3aa;letter-spacing:-0.412px;">Suche...</span><span id="t73" class="t" style="left:1326.7px;top:686.30px;font-size:13px;font-weight:normal;color:#9ba3aa;letter-spacing:-0.412px;">Suche...</span><span id="t74" class="t" style="left:1573.0px;top:686.30px;font-size:13px;font-weight:normal;color:#9ba3aa;letter-spacing:-0.441px;">Suche...</span><span id="t75" class="t" style="left:71.8px;top:717.10px;font-size:13px;font-weight:normal;-webkit-text-stroke:0.45px currentColor;color:#ffffff;letter-spacing:0.000px;white-space:pre;">5</span><span id="t76" class="t" style="left:170.2px;top:717.10px;font-size:13px;font-weight:normal;-webkit-text-stroke:0.45px currentColor;color:#ffffff;letter-spacing:0.003px;white-space:pre;">Birke</span><span id="t77" class="t" style="left:416.4px;top:717.10px;font-size:13px;font-weight:normal;-webkit-text-stroke:0.45px currentColor;color:#ffffff;letter-spacing:0.010px;white-space:pre;">Spielplatz Graben  Am Lohschloß</span><span id="t78" class="t" style="left:662.7px;top:717.10px;font-size:13px;font-weight:normal;-webkit-text-stroke:0.45px currentColor;color:#ffffff;letter-spacing:0.000px;white-space:pre;">2</span><span id="t79" class="t" style="left:728.7px;top:717.10px;font-size:13px;font-weight:normal;-webkit-text-stroke:0.45px currentColor;color:#ffffff;letter-spacing:-0.359px;white-space:pre;">05.03.2021</span><span id="t80" class="t" style="left:892.7px;top:717.10px;font-size:13px;font-weight:normal;-webkit-text-stroke:0.45px currentColor;color:#ffffff;letter-spacing:-0.293px;white-space:pre;">14.05.2009</span><span id="t81" class="t" style="left:1057.6px;top:717.10px;font-size:13px;font-weight:normal;-webkit-text-stroke:0.45px currentColor;color:#ffffff;letter-spacing:0.054px;white-space:pre;">Duddel, Frank</span><span id="t82" class="t" style="left:1304.0px;top:717.10px;font-size:13px;font-weight:normal;-webkit-text-stroke:0.45px currentColor;color:#ffffff;letter-spacing:0.245px;white-space:pre;">Intensivuntersuchung</span><span id="t83" class="t" style="left:1550.0px;top:717.10px;font-size:13px;font-weight:normal;-webkit-text-stroke:0.45px currentColor;color:#ffffff;letter-spacing:-1.075px;white-space:pre;">1.196</span><span id="t84" class="t" style="left:71.8px;top:747.10px;font-size:13px;font-weight:normal;-webkit-text-stroke:0.45px currentColor;color:#2f4b4e;letter-spacing:0.000px;white-space:pre;">6</span><span id="t85" class="t" style="left:170.2px;top:747.10px;font-size:13px;font-weight:normal;-webkit-text-stroke:0.45px currentColor;color:#2f4b4e;letter-spacing:0.003px;white-space:pre;">Birke</span><span id="t86" class="t" style="left:416.4px;top:747.10px;font-size:13px;font-weight:normal;-webkit-text-stroke:0.45px currentColor;color:#2f4b4e;letter-spacing:-0.034px;white-space:pre;">Spielplatz Grebenhain  Firensestraße</span><span id="t87" class="t" style="left:662.7px;top:747.10px;font-size:13px;font-weight:normal;-webkit-text-stroke:0.45px currentColor;color:#2f4b4e;letter-spacing:0.000px;white-space:pre;">1</span><span id="t88" class="t" style="left:728.7px;top:747.10px;font-size:13px;font-weight:normal;-webkit-text-stroke:0.45px currentColor;color:#2f4b4e;letter-spacing:-0.359px;white-space:pre;">04.05.2018</span><span id="t89" class="t" style="left:892.7px;top:747.10px;font-size:13px;font-weight:normal;-webkit-text-stroke:0.45px currentColor;color:#2f4b4e;letter-spacing:-0.293px;white-space:pre;">14.05.2009</span><span id="t90" class="t" style="left:1304.0px;top:747.10px;font-size:13px;font-weight:normal;-webkit-text-stroke:0.45px currentColor;color:#2f4b4e;letter-spacing:-0.023px;white-space:pre;">Ersterfassung</span><span id="t91" class="t" style="left:1550.0px;top:747.10px;font-size:13px;font-weight:normal;-webkit-text-stroke:0.45px currentColor;color:#2f4b4e;letter-spacing:-0.024px;white-space:pre;">0.94</span><span id="t92" class="t" style="left:71.8px;top:777.10px;font-size:13px;font-weight:normal;-webkit-text-stroke:0.45px currentColor;color:#2f4b4e;letter-spacing:0.000px;white-space:pre;">7</span><span id="t93" class="t" style="left:170.2px;top:777.10px;font-size:13px;font-weight:normal;-webkit-text-stroke:0.45px currentColor;color:#2f4b4e;letter-spacing:0.003px;white-space:pre;">Birke</span><span id="t94" class="t" style="left:416.4px;top:777.10px;font-size:13px;font-weight:normal;-webkit-text-stroke:0.45px currentColor;color:#2f4b4e;letter-spacing:-0.071px;white-space:pre;">Straße Angersbach  Landenhäuserstraße</span><span id="t95" class="t" style="left:662.7px;top:777.10px;font-size:13px;font-weight:normal;-webkit-text-stroke:0.45px currentColor;color:#2f4b4e;letter-spacing:0.000px;white-space:pre;">1</span><span id="t96" class="t" style="left:728.7px;top:777.10px;font-size:13px;font-weight:normal;-webkit-text-stroke:0.45px currentColor;color:#2f4b4e;letter-spacing:-0.359px;white-space:pre;">04.05.2018</span><span id="t97" class="t" style="left:892.7px;top:777.10px;font-size:13px;font-weight:normal;-webkit-text-stroke:0.45px currentColor;color:#2f4b4e;letter-spacing:-0.293px;white-space:pre;">14.05.2009</span><span id="t98" class="t" style="left:1304.0px;top:777.10px;font-size:13px;font-weight:normal;-webkit-text-stroke:0.45px currentColor;color:#2f4b4e;letter-spacing:-0.023px;white-space:pre;">Ersterfassung</span><span id="t99" class="t" style="left:1550.0px;top:777.10px;font-size:13px;font-weight:normal;-webkit-text-stroke:0.45px currentColor;color:#2f4b4e;letter-spacing:-0.024px;white-space:pre;">0.89</span><span id="t100" class="t" style="left:71.8px;top:807.10px;font-size:13px;font-weight:normal;-webkit-text-stroke:0.45px currentColor;color:#2f4b4e;letter-spacing:0.000px;white-space:pre;">8</span><span id="t101" class="t" style="left:170.2px;top:807.10px;font-size:13px;font-weight:normal;-webkit-text-stroke:0.45px currentColor;color:#2f4b4e;letter-spacing:0.003px;white-space:pre;">Birke</span><span id="t102" class="t" style="left:416.4px;top:807.10px;font-size:13px;font-weight:normal;-webkit-text-stroke:0.45px currentColor;color:#2f4b4e;letter-spacing:0.000px;white-space:pre;width:240px;overflow:hidden;">Straße Bermuthshain  An der alten Schule</span><span id="t103" class="t" style="left:662.7px;top:807.10px;font-size:13px;font-weight:normal;-webkit-text-stroke:0.45px currentColor;color:#2f4b4e;letter-spacing:0.000px;white-space:pre;">1</span><span id="t104" class="t" style="left:728.7px;top:807.10px;font-size:13px;font-weight:normal;-webkit-text-stroke:0.45px currentColor;color:#2f4b4e;letter-spacing:-0.359px;white-space:pre;">04.05.2018</span><span id="t105" class="t" style="left:892.7px;top:807.10px;font-size:13px;font-weight:normal;-webkit-text-stroke:0.45px currentColor;color:#2f4b4e;letter-spacing:-0.293px;white-space:pre;">14.05.2009</span><span id="t106" class="t" style="left:1304.0px;top:807.10px;font-size:13px;font-weight:normal;-webkit-text-stroke:0.45px currentColor;color:#2f4b4e;letter-spacing:-0.023px;white-space:pre;">Ersterfassung</span><span id="t107" class="t" style="left:1550.0px;top:807.10px;font-size:13px;font-weight:normal;-webkit-text-stroke:0.45px currentColor;color:#2f4b4e;letter-spacing:-0.325px;white-space:pre;">0.872</span><span id="t108" class="t" style="left:71.3px;top:841.29px;font-size:11px;font-weight:normal;color:#6f7c87;letter-spacing:-0.147px;">Anzahl: 294 / 294 (100%)</span><span id="t109" class="t" style="left:211.7px;top:841.29px;font-size:11px;font-weight:normal;-webkit-text-stroke:0.32px currentColor;color:#6a7885;letter-spacing:0.070px;">Aktuelle Ansicht: Flexi</span><span id="t110" class="t" style="left:71.8px;top:868.54px;font-size:12px;font-weight:normal;color:#b3bac1;letter-spacing:0.502px;">Startmenü</span><span id="t111" class="t" style="left:143.6px;top:868.54px;font-size:12px;font-weight:normal;color:#1f72c4;letter-spacing:0.239px;">Kataster-Baum</span><span id="t112" class="t" style="left:1134.0px;top:203.50px;font-size:13px;font-weight:normal;-webkit-text-stroke:0.45px currentColor;color:#71808f;letter-spacing:0.229px;">Mehr...</span><span id="t113" class="t" style="left:1126.8px;top:602.74px;font-size:12px;font-weight:normal;color:#333;letter-spacing:0.114px;">© OpenStreetMap contributors</span><span id="t114" class="t" style="left:1551.0px;top:602.74px;font-size:12px;font-weight:normal;color:#333;letter-spacing:-0.250px;">Powered by Esri</span></body></html>
